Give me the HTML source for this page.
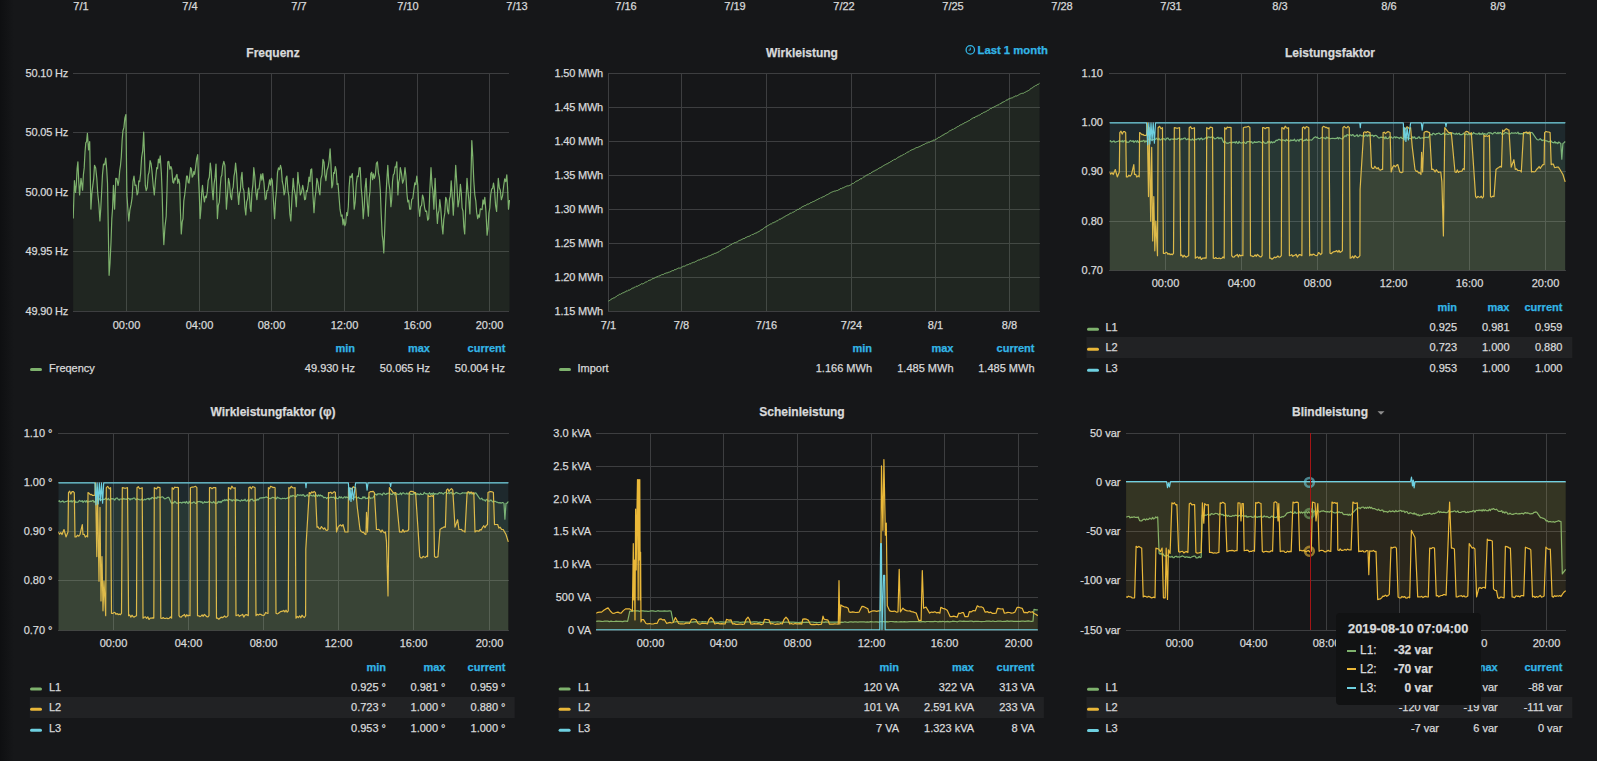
<!DOCTYPE html>
<html><head><meta charset="utf-8"><style>
html,body{margin:0;padding:0;}
body{width:1597px;height:761px;overflow:hidden;position:relative;background:#161719;font-family:"Liberation Sans",sans-serif;}
.edge{position:absolute;left:0;top:0;width:14px;height:761px;background:linear-gradient(to right,#0e0f11,#161719);}
.t{position:absolute;white-space:nowrap;-webkit-text-stroke:0.25px currentColor;}
svg{position:absolute;left:0;top:0;}
</style></head><body>
<div class="edge"></div>
<svg width="1597" height="761" viewBox="0 0 1597 761">
<rect x="1086.5" y="697" width="485.8" height="21" fill="#212224"/>
<rect x="558.6" y="697" width="485.3" height="21" fill="#212224"/>
<rect x="29.8" y="697" width="484.9" height="21" fill="#212224"/>
<rect x="1086.5" y="337" width="485.8" height="21" fill="#212224"/>
<rect x="73" y="73" width="436" height="1" fill="#3d3e40"/>
<rect x="73" y="132" width="436" height="1" fill="#3d3e40"/>
<rect x="73" y="192" width="436" height="1" fill="#3d3e40"/>
<rect x="73" y="251" width="436" height="1" fill="#3d3e40"/>
<rect x="73" y="311" width="436" height="1" fill="#3d3e40"/>
<rect x="126" y="73" width="1" height="239" fill="#3d3e40"/>
<rect x="199" y="73" width="1" height="239" fill="#3d3e40"/>
<rect x="271" y="73" width="1" height="239" fill="#3d3e40"/>
<rect x="344" y="73" width="1" height="239" fill="#3d3e40"/>
<rect x="417" y="73" width="1" height="239" fill="#3d3e40"/>
<rect x="489" y="73" width="1" height="239" fill="#3d3e40"/>
<rect x="30" y="368" width="12" height="3" rx="1.5" fill="#7eb26d"/>
<clipPath id="c1"><rect x="73" y="60" width="437" height="251"/></clipPath>
<path d="M73.2,218.6 L74.4,180.7 L75.5,192.5 L76.3,185.0 L77.1,168.9 L77.9,161.8 L78.8,182.6 L79.6,194.9 L81.0,178.3 L82.6,190.2 L83.4,174.7 L84.2,167.9 L85.0,152.3 L85.8,142.8 L86.6,141.6 L87.4,133.4 L88.6,150.0 L89.7,141.7 L90.9,209.1 L91.8,194.3 L92.8,185.4 L93.7,178.7 L94.5,165.3 L95.7,168.0 L96.8,178.3 L97.8,194.1 L98.9,204.4 L99.9,220.9 L100.8,208.3 L101.6,192.5 L102.5,174.4 L103.5,164.1 L104.7,164.7 L105.8,158.2 L106.7,169.2 L107.5,183.1 L109.1,275.3 L110.0,263.2 L111.0,242.2 L111.8,218.9 L112.6,207.7 L113.4,185.4 L114.6,209.1 L115.8,178.3 L116.9,178.6 L118.1,185.4 L118.9,180.5 L119.7,170.6 L120.5,165.3 L121.3,156.9 L122.1,140.9 L122.9,131.0 L123.9,127.4 L124.9,117.9 L125.9,114.5 L126.9,194.9 L127.9,209.3 L128.8,220.9 L129.9,209.8 L131.1,204.4 L132.1,197.7 L133.0,181.5 L134.0,176.0 L135.0,185.3 L136.1,185.2 L137.1,194.9 L138.0,192.5 L138.8,180.8 L139.7,181.7 L140.6,173.6 L141.6,157.6 L142.7,150.5 L143.7,132.2 L144.5,154.3 L145.3,185.4 L146.2,190.6 L147.2,187.8 L148.2,175.2 L149.1,172.0 L150.1,160.6 L151.1,163.8 L152.0,171.2 L153.2,185.3 L154.3,194.9 L155.5,179.7 L156.7,167.7 L157.6,168.5 L158.4,159.2 L159.3,162.9 L160.2,155.9 L161.4,173.6 L162.2,194.7 L163.0,225.3 L163.8,244.6 L165.0,226.4 L166.2,216.2 L167.0,190.4 L167.8,161.8 L168.8,161.4 L169.9,169.2 L170.9,166.5 L171.8,169.2 L172.8,182.0 L173.7,183.1 L174.5,178.1 L175.3,179.9 L176.1,176.0 L177.0,174.4 L177.8,183.4 L178.7,179.1 L179.6,183.1 L180.4,210.1 L181.3,233.9 L182.2,221.8 L183.0,218.8 L183.8,200.9 L184.7,194.9 L185.6,187.2 L186.6,176.0 L187.4,176.2 L188.2,182.4 L189.0,183.1 L190.6,167.7 L191.4,168.9 L192.2,177.1 L193.0,176.0 L193.8,171.7 L194.6,174.4 L195.4,168.9 L196.6,159.0 L197.7,154.7 L198.5,178.0 L199.3,193.6 L200.1,218.6 L200.9,209.3 L201.7,193.1 L202.5,185.4 L203.4,195.4 L204.4,202.0 L205.3,196.2 L206.3,197.7 L207.2,192.5 L208.2,180.5 L209.3,177.2 L210.3,163.0 L211.2,171.3 L212.2,189.7 L213.1,199.6 L214.1,183.6 L215.0,177.9 L216.0,164.1 L217.4,218.6 L218.3,205.7 L219.3,202.1 L220.2,187.8 L221.0,177.3 L221.8,175.3 L222.6,166.5 L223.8,161.4 L224.9,165.3 L226.4,209.1 L227.4,195.7 L228.5,178.3 L229.5,183.2 L230.6,196.3 L231.6,199.6 L232.4,189.9 L233.2,187.2 L234.0,176.1 L234.8,172.0 L235.6,163.0 L236.6,173.6 L237.7,192.7 L238.7,204.4 L239.5,193.2 L240.3,190.9 L241.2,177.6 L242.0,172.4 L242.9,187.4 L243.9,190.8 L244.9,207.5 L245.8,215.0 L246.7,201.9 L247.7,198.8 L248.6,187.8 L249.4,193.9 L250.2,207.8 L251.0,211.5 L251.9,193.0 L252.9,184.4 L253.8,167.7 L254.8,176.4 L255.9,192.6 L256.9,199.6 L257.9,189.0 L259.0,189.0 L260.0,180.7 L260.9,174.0 L261.9,180.1 L262.8,173.6 L264.0,183.3 L265.2,199.6 L266.1,198.7 L266.9,190.8 L267.8,190.4 L268.7,185.4 L269.6,179.8 L270.5,185.2 L271.4,178.3 L272.3,180.7 L273.5,201.8 L274.6,218.6 L275.6,199.3 L276.5,191.0 L277.5,172.4 L278.5,167.8 L279.5,169.6 L280.5,165.3 L281.4,169.1 L282.3,181.7 L283.2,185.4 L284.1,194.9 L285.0,191.7 L286.0,178.3 L286.9,176.0 L287.9,190.5 L288.9,196.2 L289.8,213.9 L290.8,220.9 L292.0,197.6 L293.2,178.3 L294.2,189.2 L295.3,195.0 L296.3,206.7 L297.9,172.4 L298.7,182.7 L299.5,185.9 L300.3,194.9 L301.5,192.1 L302.7,185.4 L303.6,190.0 L304.6,199.6 L305.5,199.2 L306.4,190.7 L307.2,191.4 L308.1,185.4 L309.0,177.1 L309.9,181.6 L310.8,169.6 L311.7,168.9 L312.9,194.3 L314.0,212.6 L315.0,198.0 L315.9,191.5 L316.9,178.3 L317.9,182.4 L318.9,190.8 L319.9,194.9 L320.9,178.8 L322.0,174.8 L323.0,159.4 L324.0,162.1 L324.9,175.0 L325.9,180.7 L327.0,170.2 L328.2,166.5 L329.1,160.5 L330.1,148.8 L331.0,164.6 L331.8,187.8 L332.7,184.8 L333.6,172.7 L334.4,173.4 L335.3,166.5 L336.2,170.5 L337.1,184.4 L338.0,183.6 L338.9,194.9 L340.0,209.2 L341.2,216.2 L342.1,215.0 L343.0,224.8 L343.9,219.1 L344.8,225.7 L345.7,223.4 L346.6,212.7 L347.4,215.6 L348.3,206.7 L349.1,187.3 L350.0,176.0 L351.1,177.5 L352.3,173.6 L353.2,187.5 L354.2,209.1 L355.2,202.1 L356.3,183.9 L357.3,176.0 L358.3,176.6 L359.2,167.9 L360.2,167.7 L361.2,187.9 L362.2,198.4 L363.2,218.6 L364.2,206.8 L365.1,188.4 L366.1,178.3 L367.2,201.7 L368.4,216.2 L369.2,197.9 L370.0,191.4 L370.8,173.6 L371.7,172.2 L372.6,179.6 L373.4,173.9 L374.3,178.3 L375.3,175.5 L376.4,163.3 L377.4,161.8 L378.4,172.9 L379.3,177.0 L380.3,190.2 L381.2,214.1 L382.2,235.1 L383.0,240.8 L383.8,252.9 L384.6,232.7 L385.5,206.7 L386.6,183.9 L387.8,165.3 L388.8,182.6 L389.9,190.0 L390.9,206.7 L391.7,199.4 L392.5,181.2 L393.3,174.8 L394.2,173.7 L395.1,166.9 L395.9,167.3 L396.8,161.8 L397.9,195.0 L398.7,182.4 L399.5,178.8 L400.3,167.7 L401.5,173.5 L402.6,183.1 L403.8,179.6 L405.0,167.7 L405.9,175.7 L406.9,193.3 L407.8,202.0 L408.8,200.2 L409.7,209.2 L410.7,209.2 L411.7,199.4 L412.8,198.5 L413.8,190.2 L414.8,182.8 L415.8,184.6 L416.8,176.0 L417.8,185.2 L418.7,207.0 L419.7,216.3 L420.6,206.6 L421.6,205.3 L422.5,195.0 L423.5,198.2 L424.6,207.8 L425.6,211.5 L426.6,211.0 L427.7,220.2 L428.7,218.6 L429.9,189.1 L431.0,167.7 L432.0,185.1 L432.9,191.0 L433.9,209.2 L435.1,178.4 L436.2,203.1 L437.4,223.4 L438.2,213.6 L439.0,210.4 L439.8,199.7 L440.8,208.9 L441.9,224.6 L442.9,234.0 L443.8,219.1 L444.8,212.9 L445.7,197.3 L446.7,199.9 L447.6,210.7 L448.6,213.9 L449.5,198.9 L450.3,196.3 L451.2,180.8 L452.2,195.2 L453.3,215.1 L454.5,191.8 L455.7,165.4 L456.9,184.7 L458.0,206.8 L459.2,199.6 L460.4,184.3 L461.3,192.8 L462.1,207.8 L463.0,211.0 L463.8,226.4 L464.7,234.0 L465.9,202.4 L467.0,178.4 L468.0,191.6 L468.9,200.3 L469.9,213.9 L470.9,180.0 L471.8,140.5 L472.8,157.2 L473.8,180.8 L474.8,195.0 L475.8,200.8 L476.7,212.5 L477.7,218.6 L478.6,214.8 L479.4,217.2 L480.3,208.8 L481.2,209.2 L482.1,209.6 L483.0,199.8 L483.9,204.2 L484.8,197.3 L486.0,211.9 L487.1,235.2 L488.0,228.7 L488.9,213.1 L489.8,207.9 L490.7,195.0 L491.6,189.1 L492.6,188.5 L493.5,183.1 L494.5,189.7 L495.6,205.6 L496.6,211.5 L497.5,193.0 L498.3,178.4 L499.3,187.7 L500.3,190.2 L501.3,199.7 L502.5,196.1 L503.7,185.5 L504.7,178.9 L505.8,181.7 L506.8,174.8 L507.6,188.3 L508.5,209.2 L509.5,200.0 L509.5,311.0 L73.2,311.0 Z" fill="#7eb26d" fill-opacity="0.1" clip-path="url(#c1)"/>
<path d="M73.2,218.6 L74.4,180.7 L75.5,192.5 L76.3,185.0 L77.1,168.9 L77.9,161.8 L78.8,182.6 L79.6,194.9 L81.0,178.3 L82.6,190.2 L83.4,174.7 L84.2,167.9 L85.0,152.3 L85.8,142.8 L86.6,141.6 L87.4,133.4 L88.6,150.0 L89.7,141.7 L90.9,209.1 L91.8,194.3 L92.8,185.4 L93.7,178.7 L94.5,165.3 L95.7,168.0 L96.8,178.3 L97.8,194.1 L98.9,204.4 L99.9,220.9 L100.8,208.3 L101.6,192.5 L102.5,174.4 L103.5,164.1 L104.7,164.7 L105.8,158.2 L106.7,169.2 L107.5,183.1 L109.1,275.3 L110.0,263.2 L111.0,242.2 L111.8,218.9 L112.6,207.7 L113.4,185.4 L114.6,209.1 L115.8,178.3 L116.9,178.6 L118.1,185.4 L118.9,180.5 L119.7,170.6 L120.5,165.3 L121.3,156.9 L122.1,140.9 L122.9,131.0 L123.9,127.4 L124.9,117.9 L125.9,114.5 L126.9,194.9 L127.9,209.3 L128.8,220.9 L129.9,209.8 L131.1,204.4 L132.1,197.7 L133.0,181.5 L134.0,176.0 L135.0,185.3 L136.1,185.2 L137.1,194.9 L138.0,192.5 L138.8,180.8 L139.7,181.7 L140.6,173.6 L141.6,157.6 L142.7,150.5 L143.7,132.2 L144.5,154.3 L145.3,185.4 L146.2,190.6 L147.2,187.8 L148.2,175.2 L149.1,172.0 L150.1,160.6 L151.1,163.8 L152.0,171.2 L153.2,185.3 L154.3,194.9 L155.5,179.7 L156.7,167.7 L157.6,168.5 L158.4,159.2 L159.3,162.9 L160.2,155.9 L161.4,173.6 L162.2,194.7 L163.0,225.3 L163.8,244.6 L165.0,226.4 L166.2,216.2 L167.0,190.4 L167.8,161.8 L168.8,161.4 L169.9,169.2 L170.9,166.5 L171.8,169.2 L172.8,182.0 L173.7,183.1 L174.5,178.1 L175.3,179.9 L176.1,176.0 L177.0,174.4 L177.8,183.4 L178.7,179.1 L179.6,183.1 L180.4,210.1 L181.3,233.9 L182.2,221.8 L183.0,218.8 L183.8,200.9 L184.7,194.9 L185.6,187.2 L186.6,176.0 L187.4,176.2 L188.2,182.4 L189.0,183.1 L190.6,167.7 L191.4,168.9 L192.2,177.1 L193.0,176.0 L193.8,171.7 L194.6,174.4 L195.4,168.9 L196.6,159.0 L197.7,154.7 L198.5,178.0 L199.3,193.6 L200.1,218.6 L200.9,209.3 L201.7,193.1 L202.5,185.4 L203.4,195.4 L204.4,202.0 L205.3,196.2 L206.3,197.7 L207.2,192.5 L208.2,180.5 L209.3,177.2 L210.3,163.0 L211.2,171.3 L212.2,189.7 L213.1,199.6 L214.1,183.6 L215.0,177.9 L216.0,164.1 L217.4,218.6 L218.3,205.7 L219.3,202.1 L220.2,187.8 L221.0,177.3 L221.8,175.3 L222.6,166.5 L223.8,161.4 L224.9,165.3 L226.4,209.1 L227.4,195.7 L228.5,178.3 L229.5,183.2 L230.6,196.3 L231.6,199.6 L232.4,189.9 L233.2,187.2 L234.0,176.1 L234.8,172.0 L235.6,163.0 L236.6,173.6 L237.7,192.7 L238.7,204.4 L239.5,193.2 L240.3,190.9 L241.2,177.6 L242.0,172.4 L242.9,187.4 L243.9,190.8 L244.9,207.5 L245.8,215.0 L246.7,201.9 L247.7,198.8 L248.6,187.8 L249.4,193.9 L250.2,207.8 L251.0,211.5 L251.9,193.0 L252.9,184.4 L253.8,167.7 L254.8,176.4 L255.9,192.6 L256.9,199.6 L257.9,189.0 L259.0,189.0 L260.0,180.7 L260.9,174.0 L261.9,180.1 L262.8,173.6 L264.0,183.3 L265.2,199.6 L266.1,198.7 L266.9,190.8 L267.8,190.4 L268.7,185.4 L269.6,179.8 L270.5,185.2 L271.4,178.3 L272.3,180.7 L273.5,201.8 L274.6,218.6 L275.6,199.3 L276.5,191.0 L277.5,172.4 L278.5,167.8 L279.5,169.6 L280.5,165.3 L281.4,169.1 L282.3,181.7 L283.2,185.4 L284.1,194.9 L285.0,191.7 L286.0,178.3 L286.9,176.0 L287.9,190.5 L288.9,196.2 L289.8,213.9 L290.8,220.9 L292.0,197.6 L293.2,178.3 L294.2,189.2 L295.3,195.0 L296.3,206.7 L297.9,172.4 L298.7,182.7 L299.5,185.9 L300.3,194.9 L301.5,192.1 L302.7,185.4 L303.6,190.0 L304.6,199.6 L305.5,199.2 L306.4,190.7 L307.2,191.4 L308.1,185.4 L309.0,177.1 L309.9,181.6 L310.8,169.6 L311.7,168.9 L312.9,194.3 L314.0,212.6 L315.0,198.0 L315.9,191.5 L316.9,178.3 L317.9,182.4 L318.9,190.8 L319.9,194.9 L320.9,178.8 L322.0,174.8 L323.0,159.4 L324.0,162.1 L324.9,175.0 L325.9,180.7 L327.0,170.2 L328.2,166.5 L329.1,160.5 L330.1,148.8 L331.0,164.6 L331.8,187.8 L332.7,184.8 L333.6,172.7 L334.4,173.4 L335.3,166.5 L336.2,170.5 L337.1,184.4 L338.0,183.6 L338.9,194.9 L340.0,209.2 L341.2,216.2 L342.1,215.0 L343.0,224.8 L343.9,219.1 L344.8,225.7 L345.7,223.4 L346.6,212.7 L347.4,215.6 L348.3,206.7 L349.1,187.3 L350.0,176.0 L351.1,177.5 L352.3,173.6 L353.2,187.5 L354.2,209.1 L355.2,202.1 L356.3,183.9 L357.3,176.0 L358.3,176.6 L359.2,167.9 L360.2,167.7 L361.2,187.9 L362.2,198.4 L363.2,218.6 L364.2,206.8 L365.1,188.4 L366.1,178.3 L367.2,201.7 L368.4,216.2 L369.2,197.9 L370.0,191.4 L370.8,173.6 L371.7,172.2 L372.6,179.6 L373.4,173.9 L374.3,178.3 L375.3,175.5 L376.4,163.3 L377.4,161.8 L378.4,172.9 L379.3,177.0 L380.3,190.2 L381.2,214.1 L382.2,235.1 L383.0,240.8 L383.8,252.9 L384.6,232.7 L385.5,206.7 L386.6,183.9 L387.8,165.3 L388.8,182.6 L389.9,190.0 L390.9,206.7 L391.7,199.4 L392.5,181.2 L393.3,174.8 L394.2,173.7 L395.1,166.9 L395.9,167.3 L396.8,161.8 L397.9,195.0 L398.7,182.4 L399.5,178.8 L400.3,167.7 L401.5,173.5 L402.6,183.1 L403.8,179.6 L405.0,167.7 L405.9,175.7 L406.9,193.3 L407.8,202.0 L408.8,200.2 L409.7,209.2 L410.7,209.2 L411.7,199.4 L412.8,198.5 L413.8,190.2 L414.8,182.8 L415.8,184.6 L416.8,176.0 L417.8,185.2 L418.7,207.0 L419.7,216.3 L420.6,206.6 L421.6,205.3 L422.5,195.0 L423.5,198.2 L424.6,207.8 L425.6,211.5 L426.6,211.0 L427.7,220.2 L428.7,218.6 L429.9,189.1 L431.0,167.7 L432.0,185.1 L432.9,191.0 L433.9,209.2 L435.1,178.4 L436.2,203.1 L437.4,223.4 L438.2,213.6 L439.0,210.4 L439.8,199.7 L440.8,208.9 L441.9,224.6 L442.9,234.0 L443.8,219.1 L444.8,212.9 L445.7,197.3 L446.7,199.9 L447.6,210.7 L448.6,213.9 L449.5,198.9 L450.3,196.3 L451.2,180.8 L452.2,195.2 L453.3,215.1 L454.5,191.8 L455.7,165.4 L456.9,184.7 L458.0,206.8 L459.2,199.6 L460.4,184.3 L461.3,192.8 L462.1,207.8 L463.0,211.0 L463.8,226.4 L464.7,234.0 L465.9,202.4 L467.0,178.4 L468.0,191.6 L468.9,200.3 L469.9,213.9 L470.9,180.0 L471.8,140.5 L472.8,157.2 L473.8,180.8 L474.8,195.0 L475.8,200.8 L476.7,212.5 L477.7,218.6 L478.6,214.8 L479.4,217.2 L480.3,208.8 L481.2,209.2 L482.1,209.6 L483.0,199.8 L483.9,204.2 L484.8,197.3 L486.0,211.9 L487.1,235.2 L488.0,228.7 L488.9,213.1 L489.8,207.9 L490.7,195.0 L491.6,189.1 L492.6,188.5 L493.5,183.1 L494.5,189.7 L495.6,205.6 L496.6,211.5 L497.5,193.0 L498.3,178.4 L499.3,187.7 L500.3,190.2 L501.3,199.7 L502.5,196.1 L503.7,185.5 L504.7,178.9 L505.8,181.7 L506.8,174.8 L507.6,188.3 L508.5,209.2 L509.5,200.0" fill="none" stroke="#7eb26d" stroke-width="1.2" stroke-linejoin="round" clip-path="url(#c1)"/>
<circle cx="970.3" cy="49.9" r="4.2" fill="none" stroke="#33b5e5" stroke-width="1.3"/>
<path d="M970.3,47.6 V50.1 H968.6" fill="none" stroke="#33b5e5" stroke-width="1"/>
<rect x="608" y="73" width="432" height="1" fill="#3d3e40"/>
<rect x="608" y="107" width="432" height="1" fill="#3d3e40"/>
<rect x="608" y="141" width="432" height="1" fill="#3d3e40"/>
<rect x="608" y="175" width="432" height="1" fill="#3d3e40"/>
<rect x="608" y="209" width="432" height="1" fill="#3d3e40"/>
<rect x="608" y="243" width="432" height="1" fill="#3d3e40"/>
<rect x="608" y="277" width="432" height="1" fill="#3d3e40"/>
<rect x="608" y="311" width="432" height="1" fill="#3d3e40"/>
<rect x="608" y="73" width="1" height="239" fill="#3d3e40"/>
<rect x="681" y="73" width="1" height="239" fill="#3d3e40"/>
<rect x="766" y="73" width="1" height="239" fill="#3d3e40"/>
<rect x="851" y="73" width="1" height="239" fill="#3d3e40"/>
<rect x="935" y="73" width="1" height="239" fill="#3d3e40"/>
<rect x="1009" y="73" width="1" height="239" fill="#3d3e40"/>
<rect x="559" y="368" width="12" height="3" rx="1.5" fill="#7eb26d"/>
<clipPath id="c2"><rect x="608" y="60" width="432" height="251"/></clipPath>
<path d="M608.4,301.1 L609.1,300.7 L609.8,300.4 L610.5,300.0 L611.2,299.2 L611.9,298.7 L612.6,298.5 L613.3,298.0 L614.1,298.0 L614.8,297.5 L615.5,297.0 L616.2,296.5 L616.9,296.2 L617.6,295.4 L618.3,295.2 L619.0,294.8 L619.7,294.2 L620.4,294.4 L621.1,293.5 L621.8,293.7 L622.5,292.8 L623.2,292.9 L624.0,292.3 L624.7,292.1 L625.4,292.0 L626.1,291.1 L626.8,290.8 L627.5,291.1 L628.2,290.4 L628.9,289.8 L629.6,290.1 L630.3,289.7 L631.0,288.8 L631.7,288.7 L632.4,288.2 L633.1,288.0 L633.9,287.8 L634.6,287.2 L635.3,287.2 L636.0,286.4 L636.7,286.2 L637.4,286.3 L638.1,285.7 L638.8,285.4 L639.5,285.1 L640.2,284.7 L640.9,284.3 L641.6,283.7 L642.3,283.9 L643.1,283.7 L643.8,283.4 L644.5,282.8 L645.2,282.3 L645.9,282.0 L646.6,281.9 L647.3,281.5 L648.0,280.8 L648.7,280.5 L649.4,280.3 L650.1,280.1 L650.8,279.9 L651.5,279.4 L652.2,278.7 L653.0,278.9 L653.7,278.3 L654.4,278.1 L655.1,277.5 L655.8,277.3 L656.5,277.0 L657.2,276.7 L657.9,276.6 L658.6,275.9 L659.4,275.9 L660.1,275.4 L660.8,275.4 L661.5,274.7 L662.2,274.6 L662.9,274.4 L663.7,274.3 L664.4,273.6 L665.1,273.6 L665.8,273.1 L666.5,272.9 L667.2,272.8 L668.0,272.8 L668.7,272.2 L669.4,272.3 L670.1,271.4 L670.8,271.7 L671.6,271.0 L672.3,270.6 L673.0,270.7 L673.7,270.6 L674.4,269.6 L675.1,269.6 L675.9,269.6 L676.6,269.0 L677.3,268.7 L678.0,268.3 L678.7,268.0 L679.4,268.1 L680.2,268.1 L680.9,267.8 L681.6,267.2 L682.3,266.9 L683.0,266.3 L683.7,266.2 L684.4,266.2 L685.1,266.0 L685.8,265.5 L686.5,265.0 L687.2,264.9 L688.0,264.6 L688.7,264.4 L689.4,263.8 L690.1,264.0 L690.8,263.7 L691.5,262.9 L692.2,262.7 L692.9,262.8 L693.6,262.1 L694.3,262.3 L695.0,261.7 L695.7,261.5 L696.4,261.2 L697.1,260.6 L697.8,260.3 L698.5,260.0 L699.3,260.0 L700.0,259.7 L700.7,259.1 L701.4,259.3 L702.1,258.7 L702.8,258.3 L703.5,258.1 L704.2,258.2 L704.9,257.6 L705.6,257.4 L706.3,257.3 L707.0,257.0 L707.7,256.6 L708.4,256.1 L709.1,255.9 L709.8,255.8 L710.6,255.4 L711.3,255.0 L712.0,254.5 L712.7,254.3 L713.4,254.2 L714.1,253.8 L714.8,253.1 L715.5,253.3 L716.2,252.9 L716.9,252.8 L717.6,252.3 L718.4,252.0 L719.1,251.6 L719.8,250.9 L720.5,250.7 L721.2,250.0 L721.9,249.5 L722.6,249.2 L723.4,248.8 L724.1,248.8 L724.8,248.3 L725.5,247.8 L726.2,247.4 L727.0,246.7 L727.7,246.6 L728.4,246.3 L729.1,245.7 L729.8,245.2 L730.5,244.9 L731.2,244.5 L732.0,244.3 L732.7,243.5 L733.4,243.4 L734.1,242.8 L734.8,242.6 L735.5,242.6 L736.2,242.3 L736.9,241.9 L737.7,241.7 L738.4,241.0 L739.1,240.4 L739.8,240.4 L740.5,240.1 L741.2,239.6 L741.9,239.6 L742.6,239.0 L743.3,238.6 L744.0,238.4 L744.7,238.5 L745.4,237.5 L746.2,237.4 L746.9,237.0 L747.6,236.6 L748.3,236.5 L749.0,236.0 L749.7,236.1 L750.4,235.5 L751.1,235.3 L751.8,234.6 L752.5,234.5 L753.2,234.3 L753.9,234.1 L754.7,233.4 L755.4,233.2 L756.1,233.1 L756.8,232.8 L757.5,232.0 L758.2,231.9 L759.0,231.4 L759.7,231.1 L760.5,230.3 L761.2,230.0 L762.0,229.5 L762.8,229.2 L763.5,228.4 L764.3,227.9 L765.0,227.2 L765.8,226.8 L766.5,226.6 L767.2,225.9 L767.9,225.6 L768.6,225.2 L769.4,224.7 L770.1,224.2 L770.8,223.9 L771.5,223.8 L772.2,223.2 L772.9,222.6 L773.6,222.8 L774.3,222.0 L775.1,222.1 L775.8,221.5 L776.5,221.0 L777.2,220.9 L777.9,220.6 L778.6,219.8 L779.3,219.3 L780.0,219.2 L780.8,219.0 L781.5,218.4 L782.2,218.2 L782.9,217.6 L783.6,217.2 L784.3,216.9 L785.0,216.3 L785.7,216.0 L786.4,215.6 L787.1,215.2 L787.8,214.9 L788.5,214.8 L789.2,213.9 L789.9,213.6 L790.6,213.2 L791.3,213.4 L792.0,212.7 L792.7,212.0 L793.4,212.1 L794.1,211.8 L794.8,211.4 L795.5,210.7 L796.2,210.5 L796.9,209.9 L797.6,209.4 L798.3,209.5 L799.0,209.1 L799.7,208.3 L800.4,208.4 L801.1,207.4 L801.8,207.2 L802.5,206.6 L803.2,206.3 L803.9,206.2 L804.6,205.6 L805.3,205.6 L806.0,205.0 L806.7,204.6 L807.4,204.2 L808.1,204.0 L808.8,204.0 L809.5,203.5 L810.2,202.8 L811.0,202.8 L811.7,202.4 L812.4,201.9 L813.1,201.7 L813.8,201.4 L814.5,201.1 L815.2,200.6 L815.9,200.3 L816.6,199.9 L817.3,199.6 L818.0,199.1 L818.7,198.8 L819.4,198.5 L820.1,198.3 L820.8,197.6 L821.5,197.7 L822.2,197.1 L822.9,197.0 L823.7,196.5 L824.4,196.3 L825.1,195.8 L825.8,195.3 L826.5,194.9 L827.2,194.7 L827.9,194.4 L828.6,194.1 L829.3,193.3 L830.0,193.2 L830.7,192.6 L831.4,192.3 L832.1,192.0 L832.9,191.7 L833.6,191.4 L834.3,191.2 L835.0,190.9 L835.7,191.0 L836.4,190.6 L837.1,190.6 L837.8,190.3 L838.6,189.8 L839.3,189.7 L840.0,188.7 L840.7,188.6 L841.4,188.8 L842.1,188.1 L842.8,187.7 L843.6,187.7 L844.3,187.2 L845.0,187.0 L845.7,186.5 L846.4,186.2 L847.1,185.8 L847.8,185.9 L848.5,185.8 L849.3,185.5 L850.0,185.1 L850.7,184.9 L851.4,184.3 L852.1,183.8 L852.8,183.3 L853.5,183.4 L854.2,182.7 L854.9,182.4 L855.6,181.5 L856.3,181.2 L857.0,181.0 L857.7,180.7 L858.4,180.4 L859.1,179.9 L859.9,179.2 L860.6,178.8 L861.3,178.8 L862.0,178.4 L862.7,177.7 L863.4,177.1 L864.1,177.0 L864.8,176.5 L865.5,175.9 L866.2,175.4 L866.9,175.1 L867.6,174.8 L868.3,174.5 L869.0,173.7 L869.7,173.6 L870.4,173.5 L871.1,173.0 L871.8,172.2 L872.5,171.9 L873.3,171.3 L874.0,171.4 L874.7,170.9 L875.4,170.2 L876.1,170.0 L876.8,169.7 L877.5,169.3 L878.2,168.7 L878.9,168.3 L879.6,167.9 L880.3,167.9 L881.0,167.1 L881.7,166.8 L882.4,166.4 L883.1,165.8 L883.8,165.5 L884.6,165.0 L885.3,164.7 L886.0,164.3 L886.7,163.9 L887.4,163.9 L888.1,163.1 L888.8,162.7 L889.5,162.5 L890.2,161.9 L890.9,161.6 L891.6,161.3 L892.3,160.5 L893.0,160.5 L893.7,159.7 L894.4,159.4 L895.2,159.4 L895.9,159.1 L896.6,158.5 L897.3,157.8 L898.0,157.6 L898.7,157.0 L899.4,157.0 L900.1,156.2 L900.8,155.8 L901.5,155.7 L902.2,155.3 L902.9,154.9 L903.6,154.4 L904.3,154.3 L905.0,153.6 L905.7,153.5 L906.5,152.7 L907.2,152.4 L907.9,151.9 L908.6,151.8 L909.3,151.4 L910.0,150.6 L910.7,150.4 L911.4,150.0 L912.1,149.8 L912.8,149.4 L913.5,149.2 L914.2,148.8 L914.9,148.6 L915.6,148.0 L916.3,147.7 L917.0,147.2 L917.7,147.5 L918.4,147.1 L919.1,146.5 L919.8,146.6 L920.5,146.3 L921.2,145.4 L921.9,145.6 L922.6,145.0 L923.3,144.6 L924.1,144.3 L924.8,144.1 L925.5,143.5 L926.2,143.2 L926.9,142.9 L927.6,142.8 L928.3,142.3 L929.0,142.0 L929.7,142.2 L930.4,141.6 L931.1,141.3 L931.8,141.1 L932.5,141.0 L933.2,140.2 L933.9,139.9 L934.6,140.1 L935.3,139.5 L936.0,139.4 L936.7,139.0 L937.4,138.3 L938.1,137.8 L938.8,137.2 L939.5,137.3 L940.2,136.8 L941.0,136.3 L941.7,136.0 L942.4,135.2 L943.1,135.0 L943.8,134.9 L944.5,133.9 L945.2,133.8 L945.9,133.1 L946.6,133.2 L947.3,132.8 L948.0,132.2 L948.7,131.7 L949.4,131.0 L950.1,130.9 L950.8,130.4 L951.5,130.0 L952.3,129.4 L953.0,129.6 L953.7,128.9 L954.4,128.5 L955.1,128.3 L955.8,127.9 L956.5,127.2 L957.2,126.8 L957.9,126.4 L958.6,126.3 L959.3,125.6 L960.0,125.6 L960.7,124.6 L961.5,124.7 L962.2,124.1 L962.9,123.8 L963.6,123.7 L964.3,122.8 L965.0,122.5 L965.7,122.4 L966.4,122.0 L967.1,121.5 L967.8,121.3 L968.5,120.8 L969.3,120.6 L970.0,120.0 L970.7,119.4 L971.4,119.0 L972.1,118.5 L972.8,118.1 L973.5,117.7 L974.2,118.0 L974.9,117.0 L975.6,116.9 L976.3,116.2 L977.1,116.4 L977.8,115.8 L978.5,115.1 L979.2,115.2 L979.9,114.8 L980.6,114.5 L981.3,113.6 L982.0,113.4 L982.7,113.2 L983.4,112.5 L984.1,112.3 L984.9,112.0 L985.6,111.7 L986.3,111.4 L987.0,110.9 L987.7,110.2 L988.4,110.2 L989.1,109.6 L989.8,109.0 L990.5,108.5 L991.2,108.6 L991.9,108.0 L992.7,107.4 L993.4,107.3 L994.1,106.9 L994.8,106.4 L995.5,106.2 L996.2,105.8 L996.9,105.4 L997.6,105.1 L998.3,105.0 L999.0,104.6 L999.7,103.8 L1000.4,103.8 L1001.1,103.0 L1001.8,103.1 L1002.5,102.1 L1003.3,101.9 L1004.0,101.9 L1004.7,101.4 L1005.4,101.0 L1006.1,100.3 L1006.8,99.9 L1007.5,100.1 L1008.2,99.1 L1008.9,98.8 L1009.6,98.6 L1010.3,98.3 L1011.0,98.2 L1011.7,97.9 L1012.4,97.8 L1013.1,97.3 L1013.8,96.8 L1014.5,96.8 L1015.2,96.1 L1015.9,95.7 L1016.6,96.0 L1017.3,95.7 L1018.1,95.2 L1018.8,94.8 L1019.5,94.3 L1020.2,94.0 L1020.9,93.6 L1021.6,93.4 L1022.3,93.3 L1023.0,93.3 L1023.7,93.1 L1024.4,92.5 L1025.1,92.3 L1025.8,91.9 L1026.5,91.4 L1027.2,91.2 L1028.0,90.7 L1028.7,90.4 L1029.4,89.9 L1030.1,89.3 L1030.8,88.8 L1031.6,88.0 L1032.3,87.8 L1033.0,87.3 L1033.7,86.7 L1034.5,86.3 L1035.2,86.0 L1035.9,85.3 L1036.6,85.2 L1037.3,84.5 L1038.1,84.5 L1038.8,83.9 L1039.5,83.3 L1039.5,311.0 L608.4,311.0 Z" fill="#7eb26d" fill-opacity="0.1" clip-path="url(#c2)"/>
<path d="M608.4,301.1 L609.1,300.7 L609.8,300.4 L610.5,300.0 L611.2,299.2 L611.9,298.7 L612.6,298.5 L613.3,298.0 L614.1,298.0 L614.8,297.5 L615.5,297.0 L616.2,296.5 L616.9,296.2 L617.6,295.4 L618.3,295.2 L619.0,294.8 L619.7,294.2 L620.4,294.4 L621.1,293.5 L621.8,293.7 L622.5,292.8 L623.2,292.9 L624.0,292.3 L624.7,292.1 L625.4,292.0 L626.1,291.1 L626.8,290.8 L627.5,291.1 L628.2,290.4 L628.9,289.8 L629.6,290.1 L630.3,289.7 L631.0,288.8 L631.7,288.7 L632.4,288.2 L633.1,288.0 L633.9,287.8 L634.6,287.2 L635.3,287.2 L636.0,286.4 L636.7,286.2 L637.4,286.3 L638.1,285.7 L638.8,285.4 L639.5,285.1 L640.2,284.7 L640.9,284.3 L641.6,283.7 L642.3,283.9 L643.1,283.7 L643.8,283.4 L644.5,282.8 L645.2,282.3 L645.9,282.0 L646.6,281.9 L647.3,281.5 L648.0,280.8 L648.7,280.5 L649.4,280.3 L650.1,280.1 L650.8,279.9 L651.5,279.4 L652.2,278.7 L653.0,278.9 L653.7,278.3 L654.4,278.1 L655.1,277.5 L655.8,277.3 L656.5,277.0 L657.2,276.7 L657.9,276.6 L658.6,275.9 L659.4,275.9 L660.1,275.4 L660.8,275.4 L661.5,274.7 L662.2,274.6 L662.9,274.4 L663.7,274.3 L664.4,273.6 L665.1,273.6 L665.8,273.1 L666.5,272.9 L667.2,272.8 L668.0,272.8 L668.7,272.2 L669.4,272.3 L670.1,271.4 L670.8,271.7 L671.6,271.0 L672.3,270.6 L673.0,270.7 L673.7,270.6 L674.4,269.6 L675.1,269.6 L675.9,269.6 L676.6,269.0 L677.3,268.7 L678.0,268.3 L678.7,268.0 L679.4,268.1 L680.2,268.1 L680.9,267.8 L681.6,267.2 L682.3,266.9 L683.0,266.3 L683.7,266.2 L684.4,266.2 L685.1,266.0 L685.8,265.5 L686.5,265.0 L687.2,264.9 L688.0,264.6 L688.7,264.4 L689.4,263.8 L690.1,264.0 L690.8,263.7 L691.5,262.9 L692.2,262.7 L692.9,262.8 L693.6,262.1 L694.3,262.3 L695.0,261.7 L695.7,261.5 L696.4,261.2 L697.1,260.6 L697.8,260.3 L698.5,260.0 L699.3,260.0 L700.0,259.7 L700.7,259.1 L701.4,259.3 L702.1,258.7 L702.8,258.3 L703.5,258.1 L704.2,258.2 L704.9,257.6 L705.6,257.4 L706.3,257.3 L707.0,257.0 L707.7,256.6 L708.4,256.1 L709.1,255.9 L709.8,255.8 L710.6,255.4 L711.3,255.0 L712.0,254.5 L712.7,254.3 L713.4,254.2 L714.1,253.8 L714.8,253.1 L715.5,253.3 L716.2,252.9 L716.9,252.8 L717.6,252.3 L718.4,252.0 L719.1,251.6 L719.8,250.9 L720.5,250.7 L721.2,250.0 L721.9,249.5 L722.6,249.2 L723.4,248.8 L724.1,248.8 L724.8,248.3 L725.5,247.8 L726.2,247.4 L727.0,246.7 L727.7,246.6 L728.4,246.3 L729.1,245.7 L729.8,245.2 L730.5,244.9 L731.2,244.5 L732.0,244.3 L732.7,243.5 L733.4,243.4 L734.1,242.8 L734.8,242.6 L735.5,242.6 L736.2,242.3 L736.9,241.9 L737.7,241.7 L738.4,241.0 L739.1,240.4 L739.8,240.4 L740.5,240.1 L741.2,239.6 L741.9,239.6 L742.6,239.0 L743.3,238.6 L744.0,238.4 L744.7,238.5 L745.4,237.5 L746.2,237.4 L746.9,237.0 L747.6,236.6 L748.3,236.5 L749.0,236.0 L749.7,236.1 L750.4,235.5 L751.1,235.3 L751.8,234.6 L752.5,234.5 L753.2,234.3 L753.9,234.1 L754.7,233.4 L755.4,233.2 L756.1,233.1 L756.8,232.8 L757.5,232.0 L758.2,231.9 L759.0,231.4 L759.7,231.1 L760.5,230.3 L761.2,230.0 L762.0,229.5 L762.8,229.2 L763.5,228.4 L764.3,227.9 L765.0,227.2 L765.8,226.8 L766.5,226.6 L767.2,225.9 L767.9,225.6 L768.6,225.2 L769.4,224.7 L770.1,224.2 L770.8,223.9 L771.5,223.8 L772.2,223.2 L772.9,222.6 L773.6,222.8 L774.3,222.0 L775.1,222.1 L775.8,221.5 L776.5,221.0 L777.2,220.9 L777.9,220.6 L778.6,219.8 L779.3,219.3 L780.0,219.2 L780.8,219.0 L781.5,218.4 L782.2,218.2 L782.9,217.6 L783.6,217.2 L784.3,216.9 L785.0,216.3 L785.7,216.0 L786.4,215.6 L787.1,215.2 L787.8,214.9 L788.5,214.8 L789.2,213.9 L789.9,213.6 L790.6,213.2 L791.3,213.4 L792.0,212.7 L792.7,212.0 L793.4,212.1 L794.1,211.8 L794.8,211.4 L795.5,210.7 L796.2,210.5 L796.9,209.9 L797.6,209.4 L798.3,209.5 L799.0,209.1 L799.7,208.3 L800.4,208.4 L801.1,207.4 L801.8,207.2 L802.5,206.6 L803.2,206.3 L803.9,206.2 L804.6,205.6 L805.3,205.6 L806.0,205.0 L806.7,204.6 L807.4,204.2 L808.1,204.0 L808.8,204.0 L809.5,203.5 L810.2,202.8 L811.0,202.8 L811.7,202.4 L812.4,201.9 L813.1,201.7 L813.8,201.4 L814.5,201.1 L815.2,200.6 L815.9,200.3 L816.6,199.9 L817.3,199.6 L818.0,199.1 L818.7,198.8 L819.4,198.5 L820.1,198.3 L820.8,197.6 L821.5,197.7 L822.2,197.1 L822.9,197.0 L823.7,196.5 L824.4,196.3 L825.1,195.8 L825.8,195.3 L826.5,194.9 L827.2,194.7 L827.9,194.4 L828.6,194.1 L829.3,193.3 L830.0,193.2 L830.7,192.6 L831.4,192.3 L832.1,192.0 L832.9,191.7 L833.6,191.4 L834.3,191.2 L835.0,190.9 L835.7,191.0 L836.4,190.6 L837.1,190.6 L837.8,190.3 L838.6,189.8 L839.3,189.7 L840.0,188.7 L840.7,188.6 L841.4,188.8 L842.1,188.1 L842.8,187.7 L843.6,187.7 L844.3,187.2 L845.0,187.0 L845.7,186.5 L846.4,186.2 L847.1,185.8 L847.8,185.9 L848.5,185.8 L849.3,185.5 L850.0,185.1 L850.7,184.9 L851.4,184.3 L852.1,183.8 L852.8,183.3 L853.5,183.4 L854.2,182.7 L854.9,182.4 L855.6,181.5 L856.3,181.2 L857.0,181.0 L857.7,180.7 L858.4,180.4 L859.1,179.9 L859.9,179.2 L860.6,178.8 L861.3,178.8 L862.0,178.4 L862.7,177.7 L863.4,177.1 L864.1,177.0 L864.8,176.5 L865.5,175.9 L866.2,175.4 L866.9,175.1 L867.6,174.8 L868.3,174.5 L869.0,173.7 L869.7,173.6 L870.4,173.5 L871.1,173.0 L871.8,172.2 L872.5,171.9 L873.3,171.3 L874.0,171.4 L874.7,170.9 L875.4,170.2 L876.1,170.0 L876.8,169.7 L877.5,169.3 L878.2,168.7 L878.9,168.3 L879.6,167.9 L880.3,167.9 L881.0,167.1 L881.7,166.8 L882.4,166.4 L883.1,165.8 L883.8,165.5 L884.6,165.0 L885.3,164.7 L886.0,164.3 L886.7,163.9 L887.4,163.9 L888.1,163.1 L888.8,162.7 L889.5,162.5 L890.2,161.9 L890.9,161.6 L891.6,161.3 L892.3,160.5 L893.0,160.5 L893.7,159.7 L894.4,159.4 L895.2,159.4 L895.9,159.1 L896.6,158.5 L897.3,157.8 L898.0,157.6 L898.7,157.0 L899.4,157.0 L900.1,156.2 L900.8,155.8 L901.5,155.7 L902.2,155.3 L902.9,154.9 L903.6,154.4 L904.3,154.3 L905.0,153.6 L905.7,153.5 L906.5,152.7 L907.2,152.4 L907.9,151.9 L908.6,151.8 L909.3,151.4 L910.0,150.6 L910.7,150.4 L911.4,150.0 L912.1,149.8 L912.8,149.4 L913.5,149.2 L914.2,148.8 L914.9,148.6 L915.6,148.0 L916.3,147.7 L917.0,147.2 L917.7,147.5 L918.4,147.1 L919.1,146.5 L919.8,146.6 L920.5,146.3 L921.2,145.4 L921.9,145.6 L922.6,145.0 L923.3,144.6 L924.1,144.3 L924.8,144.1 L925.5,143.5 L926.2,143.2 L926.9,142.9 L927.6,142.8 L928.3,142.3 L929.0,142.0 L929.7,142.2 L930.4,141.6 L931.1,141.3 L931.8,141.1 L932.5,141.0 L933.2,140.2 L933.9,139.9 L934.6,140.1 L935.3,139.5 L936.0,139.4 L936.7,139.0 L937.4,138.3 L938.1,137.8 L938.8,137.2 L939.5,137.3 L940.2,136.8 L941.0,136.3 L941.7,136.0 L942.4,135.2 L943.1,135.0 L943.8,134.9 L944.5,133.9 L945.2,133.8 L945.9,133.1 L946.6,133.2 L947.3,132.8 L948.0,132.2 L948.7,131.7 L949.4,131.0 L950.1,130.9 L950.8,130.4 L951.5,130.0 L952.3,129.4 L953.0,129.6 L953.7,128.9 L954.4,128.5 L955.1,128.3 L955.8,127.9 L956.5,127.2 L957.2,126.8 L957.9,126.4 L958.6,126.3 L959.3,125.6 L960.0,125.6 L960.7,124.6 L961.5,124.7 L962.2,124.1 L962.9,123.8 L963.6,123.7 L964.3,122.8 L965.0,122.5 L965.7,122.4 L966.4,122.0 L967.1,121.5 L967.8,121.3 L968.5,120.8 L969.3,120.6 L970.0,120.0 L970.7,119.4 L971.4,119.0 L972.1,118.5 L972.8,118.1 L973.5,117.7 L974.2,118.0 L974.9,117.0 L975.6,116.9 L976.3,116.2 L977.1,116.4 L977.8,115.8 L978.5,115.1 L979.2,115.2 L979.9,114.8 L980.6,114.5 L981.3,113.6 L982.0,113.4 L982.7,113.2 L983.4,112.5 L984.1,112.3 L984.9,112.0 L985.6,111.7 L986.3,111.4 L987.0,110.9 L987.7,110.2 L988.4,110.2 L989.1,109.6 L989.8,109.0 L990.5,108.5 L991.2,108.6 L991.9,108.0 L992.7,107.4 L993.4,107.3 L994.1,106.9 L994.8,106.4 L995.5,106.2 L996.2,105.8 L996.9,105.4 L997.6,105.1 L998.3,105.0 L999.0,104.6 L999.7,103.8 L1000.4,103.8 L1001.1,103.0 L1001.8,103.1 L1002.5,102.1 L1003.3,101.9 L1004.0,101.9 L1004.7,101.4 L1005.4,101.0 L1006.1,100.3 L1006.8,99.9 L1007.5,100.1 L1008.2,99.1 L1008.9,98.8 L1009.6,98.6 L1010.3,98.3 L1011.0,98.2 L1011.7,97.9 L1012.4,97.8 L1013.1,97.3 L1013.8,96.8 L1014.5,96.8 L1015.2,96.1 L1015.9,95.7 L1016.6,96.0 L1017.3,95.7 L1018.1,95.2 L1018.8,94.8 L1019.5,94.3 L1020.2,94.0 L1020.9,93.6 L1021.6,93.4 L1022.3,93.3 L1023.0,93.3 L1023.7,93.1 L1024.4,92.5 L1025.1,92.3 L1025.8,91.9 L1026.5,91.4 L1027.2,91.2 L1028.0,90.7 L1028.7,90.4 L1029.4,89.9 L1030.1,89.3 L1030.8,88.8 L1031.6,88.0 L1032.3,87.8 L1033.0,87.3 L1033.7,86.7 L1034.5,86.3 L1035.2,86.0 L1035.9,85.3 L1036.6,85.2 L1037.3,84.5 L1038.1,84.5 L1038.8,83.9 L1039.5,83.3" fill="none" stroke="#7eb26d" stroke-width="1.0" stroke-linejoin="round" clip-path="url(#c2)"/>
<rect x="1109" y="73" width="457" height="1" fill="#3d3e40"/>
<rect x="1109" y="122" width="457" height="1" fill="#3d3e40"/>
<rect x="1109" y="171" width="457" height="1" fill="#3d3e40"/>
<rect x="1109" y="221" width="457" height="1" fill="#3d3e40"/>
<rect x="1109" y="270" width="457" height="1" fill="#3d3e40"/>
<rect x="1165" y="73" width="1" height="198" fill="#3d3e40"/>
<rect x="1241" y="73" width="1" height="198" fill="#3d3e40"/>
<rect x="1317" y="73" width="1" height="198" fill="#3d3e40"/>
<rect x="1393" y="73" width="1" height="198" fill="#3d3e40"/>
<rect x="1469" y="73" width="1" height="198" fill="#3d3e40"/>
<rect x="1545" y="73" width="1" height="198" fill="#3d3e40"/>
<clipPath id="c3"><rect x="1109.5" y="68.5" width="456.70000000000005" height="202.0"/></clipPath>
<path d="M1109.5,141.5 L1110.4,140.7 L1111.3,141.9 L1112.2,141.8 L1113.1,141.4 L1114.0,140.8 L1114.9,142.1 L1115.8,142.1 L1116.8,141.5 L1117.7,141.5 L1118.6,140.9 L1119.5,140.4 L1120.4,141.2 L1121.3,141.7 L1122.2,140.5 L1123.1,142.1 L1124.0,140.9 L1124.9,140.9 L1125.8,140.5 L1126.7,142.6 L1127.6,142.0 L1128.5,142.3 L1129.4,141.7 L1130.3,140.4 L1131.3,141.1 L1132.2,141.5 L1133.1,140.6 L1134.0,142.5 L1134.9,141.2 L1135.8,140.7 L1136.7,142.2 L1137.6,140.6 L1138.5,142.4 L1139.4,141.4 L1140.3,141.6 L1141.2,141.1 L1142.1,141.4 L1143.0,140.8 L1143.9,140.4 L1144.9,142.3 L1145.8,140.9 L1146.7,141.5 L1148.2,139.0 L1149.1,139.6 L1150.0,138.4 L1150.9,140.0 L1151.8,139.9 L1152.7,139.6 L1153.6,139.6 L1154.5,139.2 L1155.4,139.5 L1156.3,138.2 L1157.2,139.0 L1158.1,139.7 L1159.0,138.3 L1159.9,139.9 L1160.8,139.9 L1161.8,138.8 L1162.7,138.7 L1163.6,138.9 L1164.5,138.8 L1165.4,140.1 L1166.3,138.8 L1167.2,138.0 L1168.1,138.1 L1169.0,139.5 L1169.9,140.1 L1170.8,139.0 L1171.7,139.0 L1172.6,139.1 L1173.5,139.5 L1174.4,138.4 L1175.3,139.2 L1176.2,139.1 L1177.1,139.3 L1178.0,138.3 L1178.9,138.3 L1179.8,138.7 L1180.8,139.9 L1181.7,138.7 L1182.6,139.2 L1183.5,138.6 L1184.4,138.1 L1185.3,138.0 L1186.2,139.7 L1187.1,139.6 L1188.0,138.7 L1188.9,139.4 L1189.8,139.4 L1190.7,139.9 L1191.6,140.0 L1192.5,138.8 L1193.4,140.1 L1194.3,140.0 L1195.2,139.2 L1196.1,139.8 L1197.0,139.0 L1197.9,138.7 L1198.8,138.4 L1199.8,139.8 L1200.7,138.3 L1201.6,138.1 L1202.5,139.7 L1203.4,139.0 L1204.4,139.0 L1205.4,137.8 L1206.3,137.7 L1207.2,138.5 L1208.1,136.8 L1209.0,137.2 L1209.9,137.3 L1210.8,137.6 L1211.7,137.0 L1212.6,136.8 L1213.5,137.4 L1214.4,138.6 L1215.3,138.8 L1216.2,138.3 L1217.1,137.7 L1218.0,137.2 L1218.9,138.8 L1219.8,137.8 L1220.7,138.3 L1221.6,137.8 L1223.6,142.5 L1224.5,141.4 L1225.4,141.8 L1226.3,143.2 L1227.2,143.1 L1228.1,143.3 L1229.1,142.7 L1230.0,142.3 L1230.9,142.6 L1231.8,143.2 L1232.7,142.0 L1233.6,142.5 L1234.5,142.0 L1235.4,143.0 L1236.3,141.4 L1237.2,142.9 L1238.1,143.4 L1239.0,141.4 L1239.9,142.7 L1240.8,142.8 L1241.7,143.2 L1242.6,142.6 L1243.5,141.9 L1244.4,142.2 L1245.3,143.5 L1246.2,143.3 L1247.1,141.6 L1248.0,141.6 L1248.9,141.6 L1249.8,141.4 L1250.8,142.3 L1251.7,141.7 L1252.6,143.3 L1253.5,142.8 L1254.4,141.6 L1255.3,142.5 L1256.2,142.1 L1257.1,142.4 L1258.0,141.8 L1258.9,141.7 L1259.8,141.8 L1260.7,142.2 L1261.6,142.9 L1262.5,142.6 L1263.4,141.5 L1264.3,142.9 L1265.2,143.3 L1266.1,143.1 L1267.0,143.1 L1267.9,141.4 L1268.8,142.4 L1269.7,141.5 L1270.6,143.0 L1271.5,141.7 L1272.5,142.9 L1273.4,141.9 L1274.3,142.5 L1276.3,140.2 L1277.2,140.6 L1278.1,139.8 L1279.0,139.2 L1279.9,139.9 L1280.8,139.8 L1281.7,141.1 L1282.6,139.7 L1283.6,140.2 L1284.5,140.3 L1285.4,141.2 L1286.3,139.3 L1287.2,140.4 L1288.1,140.2 L1289.0,140.7 L1289.9,141.2 L1290.8,139.8 L1291.7,140.6 L1292.6,140.2 L1293.6,140.3 L1294.5,139.2 L1295.4,140.9 L1296.3,141.2 L1297.2,139.9 L1298.1,139.8 L1299.0,141.3 L1299.9,139.3 L1300.8,139.3 L1301.7,139.2 L1302.6,140.9 L1303.5,140.8 L1304.5,140.1 L1305.4,140.5 L1306.3,139.1 L1307.2,140.5 L1308.1,140.1 L1309.0,140.2 L1309.9,139.9 L1310.8,140.0 L1311.7,140.2 L1313.8,137.8 L1314.7,137.2 L1315.6,136.8 L1316.5,137.6 L1317.4,137.2 L1318.3,138.3 L1319.3,138.5 L1320.2,138.3 L1321.1,137.7 L1322.0,137.3 L1322.9,137.6 L1323.8,137.8 L1324.8,138.2 L1325.7,138.9 L1326.6,137.0 L1327.5,137.8 L1328.4,137.9 L1329.4,138.4 L1330.3,138.8 L1331.2,138.5 L1332.1,138.2 L1333.0,138.5 L1333.9,138.3 L1334.9,138.7 L1335.8,138.4 L1336.7,138.4 L1337.6,137.4 L1338.5,138.9 L1339.4,137.7 L1340.4,138.2 L1341.3,138.7 L1342.2,139.0 L1343.1,138.0 L1345.1,135.6 L1346.1,136.6 L1347.0,134.5 L1347.9,135.1 L1348.8,135.1 L1349.8,135.3 L1350.7,134.8 L1351.6,135.7 L1352.5,134.6 L1353.5,135.1 L1354.4,136.5 L1355.3,136.1 L1356.2,135.5 L1357.1,134.7 L1358.1,136.6 L1359.0,136.0 L1359.9,134.9 L1360.8,135.2 L1361.8,135.9 L1362.7,136.0 L1363.6,135.0 L1364.5,136.5 L1365.5,135.2 L1366.4,135.0 L1367.3,136.3 L1368.2,134.8 L1369.2,136.0 L1370.1,134.9 L1371.0,135.8 L1371.9,135.1 L1372.8,135.3 L1373.8,136.5 L1374.7,135.5 L1375.6,135.4 L1376.5,135.6 L1378.6,137.8 L1379.5,138.0 L1380.4,137.3 L1381.3,137.1 L1382.2,137.5 L1383.1,137.3 L1384.0,137.1 L1384.9,138.8 L1385.8,136.7 L1386.7,138.5 L1387.6,138.7 L1388.5,138.2 L1389.4,136.7 L1390.3,137.8 L1391.2,136.8 L1392.1,138.0 L1393.0,138.2 L1393.9,137.2 L1394.8,136.7 L1395.7,137.9 L1396.6,136.9 L1397.5,137.4 L1398.4,137.7 L1399.3,138.6 L1400.2,137.5 L1401.1,137.0 L1402.0,138.4 L1402.9,138.5 L1403.8,137.8 L1404.7,136.8 L1405.6,137.1 L1406.5,137.6 L1407.4,137.9 L1408.3,137.2 L1409.2,138.4 L1410.1,138.5 L1411.0,138.7 L1411.9,138.6 L1412.8,136.7 L1413.7,138.0 L1414.6,136.8 L1415.6,138.7 L1416.5,138.3 L1417.4,138.3 L1418.3,137.1 L1419.2,136.8 L1420.1,138.5 L1421.0,138.0 L1421.9,138.0 L1422.8,137.7 L1423.7,138.4 L1424.6,137.4 L1425.5,137.3 L1426.4,137.4 L1427.3,137.3 L1428.2,137.8 L1430.2,134.3 L1431.1,134.6 L1432.0,135.1 L1432.9,133.3 L1433.8,133.3 L1434.7,134.3 L1435.6,134.6 L1436.5,133.5 L1437.4,133.7 L1438.3,133.2 L1439.2,133.1 L1440.1,134.1 L1441.0,134.5 L1441.9,134.5 L1442.8,133.3 L1443.7,133.2 L1444.6,135.0 L1445.6,134.1 L1446.5,133.8 L1447.4,134.4 L1448.3,134.5 L1449.2,134.0 L1450.1,133.0 L1451.0,134.7 L1451.9,133.3 L1452.8,132.9 L1453.7,133.6 L1454.6,134.0 L1455.5,134.2 L1456.4,133.1 L1457.3,134.3 L1458.2,133.8 L1459.1,133.1 L1460.0,134.6 L1460.9,134.5 L1461.8,134.7 L1462.7,134.1 L1463.6,133.1 L1464.5,134.3 L1465.4,134.6 L1466.3,133.8 L1467.2,134.6 L1468.1,134.7 L1469.0,133.4 L1469.9,134.6 L1470.8,134.6 L1471.7,133.6 L1472.6,134.2 L1473.5,132.5 L1474.4,133.2 L1475.4,133.8 L1476.3,133.8 L1477.2,134.1 L1478.1,133.9 L1479.0,132.8 L1479.9,134.5 L1480.8,133.6 L1481.7,134.3 L1482.6,132.9 L1483.5,134.6 L1484.4,133.6 L1485.3,134.1 L1486.2,134.0 L1487.1,134.3 L1488.0,133.1 L1489.0,132.5 L1489.9,133.2 L1490.8,132.7 L1491.7,133.5 L1492.6,134.1 L1493.5,133.1 L1494.4,132.6 L1495.3,132.4 L1496.2,133.2 L1497.1,133.6 L1498.0,132.3 L1498.9,133.7 L1499.8,132.7 L1500.7,132.5 L1501.7,134.3 L1502.6,133.4 L1503.5,134.2 L1504.4,133.4 L1505.3,132.5 L1506.2,132.7 L1507.1,133.1 L1508.0,133.6 L1508.9,133.9 L1509.8,133.8 L1510.7,133.6 L1511.6,132.7 L1512.5,133.1 L1513.4,133.0 L1514.3,133.2 L1515.3,132.7 L1516.2,133.3 L1517.1,133.1 L1518.0,132.2 L1518.9,133.9 L1519.8,133.4 L1520.7,133.9 L1521.6,133.7 L1522.5,133.7 L1523.4,134.3 L1524.3,132.9 L1525.2,132.9 L1526.1,132.1 L1527.0,133.5 L1528.0,133.3 L1528.9,133.3 L1529.8,134.2 L1530.7,132.4 L1531.6,132.5 L1532.5,133.1 L1536.5,139.0 L1537.5,139.7 L1538.4,140.0 L1539.3,139.4 L1540.2,138.7 L1541.1,139.5 L1542.1,140.7 L1543.0,140.1 L1543.9,140.2 L1544.8,140.2 L1545.7,140.9 L1546.7,140.9 L1547.6,141.3 L1548.5,141.8 L1549.4,141.7 L1550.3,141.1 L1551.3,141.0 L1552.2,142.3 L1553.1,142.5 L1554.0,142.9 L1554.9,141.5 L1555.9,143.1 L1556.8,142.5 L1557.8,143.6 L1558.8,142.0 L1559.8,142.8 L1560.8,143.4 L1561.8,159.2 L1562.9,143.4 L1564.0,142.7 L1565.2,141.5 L1565.2,270.5 L1109.5,270.5 Z" fill="#7eb26d" fill-opacity="0.1" clip-path="url(#c3)"/>
<path d="M1109.5,141.5 L1110.4,140.7 L1111.3,141.9 L1112.2,141.8 L1113.1,141.4 L1114.0,140.8 L1114.9,142.1 L1115.8,142.1 L1116.8,141.5 L1117.7,141.5 L1118.6,140.9 L1119.5,140.4 L1120.4,141.2 L1121.3,141.7 L1122.2,140.5 L1123.1,142.1 L1124.0,140.9 L1124.9,140.9 L1125.8,140.5 L1126.7,142.6 L1127.6,142.0 L1128.5,142.3 L1129.4,141.7 L1130.3,140.4 L1131.3,141.1 L1132.2,141.5 L1133.1,140.6 L1134.0,142.5 L1134.9,141.2 L1135.8,140.7 L1136.7,142.2 L1137.6,140.6 L1138.5,142.4 L1139.4,141.4 L1140.3,141.6 L1141.2,141.1 L1142.1,141.4 L1143.0,140.8 L1143.9,140.4 L1144.9,142.3 L1145.8,140.9 L1146.7,141.5 L1148.2,139.0 L1149.1,139.6 L1150.0,138.4 L1150.9,140.0 L1151.8,139.9 L1152.7,139.6 L1153.6,139.6 L1154.5,139.2 L1155.4,139.5 L1156.3,138.2 L1157.2,139.0 L1158.1,139.7 L1159.0,138.3 L1159.9,139.9 L1160.8,139.9 L1161.8,138.8 L1162.7,138.7 L1163.6,138.9 L1164.5,138.8 L1165.4,140.1 L1166.3,138.8 L1167.2,138.0 L1168.1,138.1 L1169.0,139.5 L1169.9,140.1 L1170.8,139.0 L1171.7,139.0 L1172.6,139.1 L1173.5,139.5 L1174.4,138.4 L1175.3,139.2 L1176.2,139.1 L1177.1,139.3 L1178.0,138.3 L1178.9,138.3 L1179.8,138.7 L1180.8,139.9 L1181.7,138.7 L1182.6,139.2 L1183.5,138.6 L1184.4,138.1 L1185.3,138.0 L1186.2,139.7 L1187.1,139.6 L1188.0,138.7 L1188.9,139.4 L1189.8,139.4 L1190.7,139.9 L1191.6,140.0 L1192.5,138.8 L1193.4,140.1 L1194.3,140.0 L1195.2,139.2 L1196.1,139.8 L1197.0,139.0 L1197.9,138.7 L1198.8,138.4 L1199.8,139.8 L1200.7,138.3 L1201.6,138.1 L1202.5,139.7 L1203.4,139.0 L1204.4,139.0 L1205.4,137.8 L1206.3,137.7 L1207.2,138.5 L1208.1,136.8 L1209.0,137.2 L1209.9,137.3 L1210.8,137.6 L1211.7,137.0 L1212.6,136.8 L1213.5,137.4 L1214.4,138.6 L1215.3,138.8 L1216.2,138.3 L1217.1,137.7 L1218.0,137.2 L1218.9,138.8 L1219.8,137.8 L1220.7,138.3 L1221.6,137.8 L1223.6,142.5 L1224.5,141.4 L1225.4,141.8 L1226.3,143.2 L1227.2,143.1 L1228.1,143.3 L1229.1,142.7 L1230.0,142.3 L1230.9,142.6 L1231.8,143.2 L1232.7,142.0 L1233.6,142.5 L1234.5,142.0 L1235.4,143.0 L1236.3,141.4 L1237.2,142.9 L1238.1,143.4 L1239.0,141.4 L1239.9,142.7 L1240.8,142.8 L1241.7,143.2 L1242.6,142.6 L1243.5,141.9 L1244.4,142.2 L1245.3,143.5 L1246.2,143.3 L1247.1,141.6 L1248.0,141.6 L1248.9,141.6 L1249.8,141.4 L1250.8,142.3 L1251.7,141.7 L1252.6,143.3 L1253.5,142.8 L1254.4,141.6 L1255.3,142.5 L1256.2,142.1 L1257.1,142.4 L1258.0,141.8 L1258.9,141.7 L1259.8,141.8 L1260.7,142.2 L1261.6,142.9 L1262.5,142.6 L1263.4,141.5 L1264.3,142.9 L1265.2,143.3 L1266.1,143.1 L1267.0,143.1 L1267.9,141.4 L1268.8,142.4 L1269.7,141.5 L1270.6,143.0 L1271.5,141.7 L1272.5,142.9 L1273.4,141.9 L1274.3,142.5 L1276.3,140.2 L1277.2,140.6 L1278.1,139.8 L1279.0,139.2 L1279.9,139.9 L1280.8,139.8 L1281.7,141.1 L1282.6,139.7 L1283.6,140.2 L1284.5,140.3 L1285.4,141.2 L1286.3,139.3 L1287.2,140.4 L1288.1,140.2 L1289.0,140.7 L1289.9,141.2 L1290.8,139.8 L1291.7,140.6 L1292.6,140.2 L1293.6,140.3 L1294.5,139.2 L1295.4,140.9 L1296.3,141.2 L1297.2,139.9 L1298.1,139.8 L1299.0,141.3 L1299.9,139.3 L1300.8,139.3 L1301.7,139.2 L1302.6,140.9 L1303.5,140.8 L1304.5,140.1 L1305.4,140.5 L1306.3,139.1 L1307.2,140.5 L1308.1,140.1 L1309.0,140.2 L1309.9,139.9 L1310.8,140.0 L1311.7,140.2 L1313.8,137.8 L1314.7,137.2 L1315.6,136.8 L1316.5,137.6 L1317.4,137.2 L1318.3,138.3 L1319.3,138.5 L1320.2,138.3 L1321.1,137.7 L1322.0,137.3 L1322.9,137.6 L1323.8,137.8 L1324.8,138.2 L1325.7,138.9 L1326.6,137.0 L1327.5,137.8 L1328.4,137.9 L1329.4,138.4 L1330.3,138.8 L1331.2,138.5 L1332.1,138.2 L1333.0,138.5 L1333.9,138.3 L1334.9,138.7 L1335.8,138.4 L1336.7,138.4 L1337.6,137.4 L1338.5,138.9 L1339.4,137.7 L1340.4,138.2 L1341.3,138.7 L1342.2,139.0 L1343.1,138.0 L1345.1,135.6 L1346.1,136.6 L1347.0,134.5 L1347.9,135.1 L1348.8,135.1 L1349.8,135.3 L1350.7,134.8 L1351.6,135.7 L1352.5,134.6 L1353.5,135.1 L1354.4,136.5 L1355.3,136.1 L1356.2,135.5 L1357.1,134.7 L1358.1,136.6 L1359.0,136.0 L1359.9,134.9 L1360.8,135.2 L1361.8,135.9 L1362.7,136.0 L1363.6,135.0 L1364.5,136.5 L1365.5,135.2 L1366.4,135.0 L1367.3,136.3 L1368.2,134.8 L1369.2,136.0 L1370.1,134.9 L1371.0,135.8 L1371.9,135.1 L1372.8,135.3 L1373.8,136.5 L1374.7,135.5 L1375.6,135.4 L1376.5,135.6 L1378.6,137.8 L1379.5,138.0 L1380.4,137.3 L1381.3,137.1 L1382.2,137.5 L1383.1,137.3 L1384.0,137.1 L1384.9,138.8 L1385.8,136.7 L1386.7,138.5 L1387.6,138.7 L1388.5,138.2 L1389.4,136.7 L1390.3,137.8 L1391.2,136.8 L1392.1,138.0 L1393.0,138.2 L1393.9,137.2 L1394.8,136.7 L1395.7,137.9 L1396.6,136.9 L1397.5,137.4 L1398.4,137.7 L1399.3,138.6 L1400.2,137.5 L1401.1,137.0 L1402.0,138.4 L1402.9,138.5 L1403.8,137.8 L1404.7,136.8 L1405.6,137.1 L1406.5,137.6 L1407.4,137.9 L1408.3,137.2 L1409.2,138.4 L1410.1,138.5 L1411.0,138.7 L1411.9,138.6 L1412.8,136.7 L1413.7,138.0 L1414.6,136.8 L1415.6,138.7 L1416.5,138.3 L1417.4,138.3 L1418.3,137.1 L1419.2,136.8 L1420.1,138.5 L1421.0,138.0 L1421.9,138.0 L1422.8,137.7 L1423.7,138.4 L1424.6,137.4 L1425.5,137.3 L1426.4,137.4 L1427.3,137.3 L1428.2,137.8 L1430.2,134.3 L1431.1,134.6 L1432.0,135.1 L1432.9,133.3 L1433.8,133.3 L1434.7,134.3 L1435.6,134.6 L1436.5,133.5 L1437.4,133.7 L1438.3,133.2 L1439.2,133.1 L1440.1,134.1 L1441.0,134.5 L1441.9,134.5 L1442.8,133.3 L1443.7,133.2 L1444.6,135.0 L1445.6,134.1 L1446.5,133.8 L1447.4,134.4 L1448.3,134.5 L1449.2,134.0 L1450.1,133.0 L1451.0,134.7 L1451.9,133.3 L1452.8,132.9 L1453.7,133.6 L1454.6,134.0 L1455.5,134.2 L1456.4,133.1 L1457.3,134.3 L1458.2,133.8 L1459.1,133.1 L1460.0,134.6 L1460.9,134.5 L1461.8,134.7 L1462.7,134.1 L1463.6,133.1 L1464.5,134.3 L1465.4,134.6 L1466.3,133.8 L1467.2,134.6 L1468.1,134.7 L1469.0,133.4 L1469.9,134.6 L1470.8,134.6 L1471.7,133.6 L1472.6,134.2 L1473.5,132.5 L1474.4,133.2 L1475.4,133.8 L1476.3,133.8 L1477.2,134.1 L1478.1,133.9 L1479.0,132.8 L1479.9,134.5 L1480.8,133.6 L1481.7,134.3 L1482.6,132.9 L1483.5,134.6 L1484.4,133.6 L1485.3,134.1 L1486.2,134.0 L1487.1,134.3 L1488.0,133.1 L1489.0,132.5 L1489.9,133.2 L1490.8,132.7 L1491.7,133.5 L1492.6,134.1 L1493.5,133.1 L1494.4,132.6 L1495.3,132.4 L1496.2,133.2 L1497.1,133.6 L1498.0,132.3 L1498.9,133.7 L1499.8,132.7 L1500.7,132.5 L1501.7,134.3 L1502.6,133.4 L1503.5,134.2 L1504.4,133.4 L1505.3,132.5 L1506.2,132.7 L1507.1,133.1 L1508.0,133.6 L1508.9,133.9 L1509.8,133.8 L1510.7,133.6 L1511.6,132.7 L1512.5,133.1 L1513.4,133.0 L1514.3,133.2 L1515.3,132.7 L1516.2,133.3 L1517.1,133.1 L1518.0,132.2 L1518.9,133.9 L1519.8,133.4 L1520.7,133.9 L1521.6,133.7 L1522.5,133.7 L1523.4,134.3 L1524.3,132.9 L1525.2,132.9 L1526.1,132.1 L1527.0,133.5 L1528.0,133.3 L1528.9,133.3 L1529.8,134.2 L1530.7,132.4 L1531.6,132.5 L1532.5,133.1 L1536.5,139.0 L1537.5,139.7 L1538.4,140.0 L1539.3,139.4 L1540.2,138.7 L1541.1,139.5 L1542.1,140.7 L1543.0,140.1 L1543.9,140.2 L1544.8,140.2 L1545.7,140.9 L1546.7,140.9 L1547.6,141.3 L1548.5,141.8 L1549.4,141.7 L1550.3,141.1 L1551.3,141.0 L1552.2,142.3 L1553.1,142.5 L1554.0,142.9 L1554.9,141.5 L1555.9,143.1 L1556.8,142.5 L1557.8,143.6 L1558.8,142.0 L1559.8,142.8 L1560.8,143.4 L1561.8,159.2 L1562.9,143.4 L1564.0,142.7 L1565.2,141.5" fill="none" stroke="#7eb26d" stroke-width="1.2" stroke-linejoin="round" clip-path="url(#c3)"/>
<path d="M1109.5,172.0 L1110.7,174.2 L1112.0,172.6 L1113.2,174.5 L1115.3,169.5 L1117.3,176.9 L1119.3,172.0 L1119.8,132.6 L1121.0,131.2 L1122.2,134.1 L1123.4,131.7 L1124.5,131.5 L1125.7,132.6 L1126.4,176.9 L1127.7,176.8 L1128.9,175.2 L1130.2,176.2 L1131.5,174.5 L1133.8,164.6 L1134.5,174.5 L1135.7,174.3 L1136.8,177.1 L1138.0,175.8 L1139.2,176.9 L1139.6,132.6 L1140.7,133.3 L1141.9,134.7 L1143.1,134.4 L1144.2,135.5 L1145.4,135.3 L1146.6,135.1 L1147.2,122.8 L1148.5,196.6 L1149.2,127.7 L1150.7,221.2 L1151.7,147.4 L1152.7,240.9 L1153.8,196.6 L1154.8,250.8 L1155.8,221.2 L1157.5,255.7 L1158.1,127.7 L1159.6,126.3 L1161.0,128.8 L1162.5,127.7 L1163.4,253.3 L1164.5,253.5 L1165.6,252.7 L1166.7,252.3 L1167.9,254.3 L1169.0,253.5 L1170.1,254.6 L1171.2,254.1 L1172.4,254.6 L1173.5,253.3 L1174.3,127.7 L1175.6,127.9 L1176.9,128.3 L1178.3,128.0 L1179.6,127.7 L1180.7,255.7 L1181.8,255.0 L1183.0,257.1 L1184.1,255.2 L1185.3,256.6 L1186.4,257.1 L1187.5,256.2 L1188.7,255.7 L1189.2,127.7 L1190.5,126.6 L1191.8,128.7 L1193.1,128.2 L1194.5,127.7 L1195.3,258.2 L1196.5,257.2 L1197.7,256.8 L1198.9,258.3 L1200.1,256.8 L1201.3,259.5 L1202.6,258.2 L1203.8,258.2 L1205.0,257.9 L1206.2,258.2 L1206.7,127.7 L1207.9,128.2 L1209.0,128.9 L1210.2,127.1 L1211.3,127.3 L1212.5,127.7 L1213.3,258.2 L1214.5,258.4 L1215.7,257.6 L1216.9,258.5 L1218.2,258.3 L1219.4,258.0 L1220.6,258.7 L1221.8,258.3 L1223.0,257.0 L1224.2,258.2 L1224.7,127.7 L1226.0,129.2 L1227.3,127.2 L1228.6,127.5 L1229.8,127.4 L1231.1,127.7 L1231.7,255.7 L1232.8,257.0 L1234.0,257.1 L1235.1,255.8 L1236.2,255.4 L1237.3,254.5 L1238.4,256.9 L1239.5,254.7 L1240.6,255.9 L1241.8,255.3 L1242.9,255.7 L1243.3,127.7 L1244.6,127.2 L1245.9,127.2 L1247.2,126.7 L1248.5,126.3 L1249.9,127.7 L1250.5,255.7 L1251.6,255.8 L1252.8,256.6 L1254.0,256.2 L1255.1,254.8 L1256.3,256.3 L1257.4,254.4 L1258.6,255.5 L1259.8,256.7 L1260.9,257.0 L1262.1,255.7 L1262.6,127.7 L1263.9,127.6 L1265.2,128.7 L1266.4,127.7 L1267.7,127.7 L1269.0,127.7 L1269.7,258.2 L1270.9,258.2 L1272.0,259.2 L1273.2,258.2 L1274.4,257.1 L1275.5,257.6 L1276.7,257.1 L1277.9,256.0 L1279.0,257.1 L1280.2,256.9 L1281.3,255.7 L1281.8,127.7 L1282.9,128.0 L1284.0,129.0 L1285.2,126.2 L1286.3,127.7 L1287.5,128.1 L1288.6,127.7 L1289.4,255.7 L1290.6,255.2 L1291.7,254.7 L1292.8,256.3 L1294.0,255.5 L1295.1,255.0 L1296.2,254.4 L1297.4,257.1 L1298.5,255.3 L1299.6,254.6 L1300.8,254.9 L1301.9,255.7 L1302.4,127.7 L1303.7,126.9 L1305.0,128.8 L1306.2,126.7 L1307.5,127.0 L1308.8,127.7 L1309.7,255.7 L1310.8,254.3 L1311.9,255.2 L1313.0,254.2 L1314.1,254.4 L1315.2,255.3 L1316.3,255.7 L1317.4,255.2 L1318.5,252.5 L1319.6,253.3 L1320.7,254.5 L1321.9,253.3 L1322.3,127.7 L1323.4,126.3 L1324.5,126.8 L1325.7,127.6 L1326.8,127.3 L1327.9,128.4 L1329.0,127.7 L1330.0,253.3 L1331.1,253.7 L1332.2,252.7 L1333.4,251.8 L1334.5,251.6 L1335.6,251.4 L1336.7,250.6 L1337.9,252.2 L1339.0,250.4 L1340.1,252.4 L1341.3,251.5 L1342.4,250.8 L1342.9,127.7 L1344.2,126.3 L1345.5,127.7 L1346.7,128.0 L1348.0,126.3 L1349.3,127.7 L1350.2,258.2 L1351.4,257.8 L1352.6,256.2 L1353.9,258.1 L1355.1,255.5 L1356.3,257.0 L1357.5,257.8 L1358.7,257.1 L1359.9,255.7 L1360.1,189.2 L1363.6,132.6 L1364.9,131.8 L1366.1,132.7 L1367.4,131.5 L1368.7,132.1 L1370.0,132.6 L1371.5,167.1 L1372.6,168.4 L1373.7,168.5 L1374.8,166.3 L1375.9,167.7 L1377.0,168.7 L1378.2,167.6 L1379.3,169.7 L1380.4,170.2 L1381.5,169.4 L1382.6,169.5 L1383.1,132.6 L1384.3,132.2 L1385.4,133.6 L1386.6,132.6 L1387.8,131.7 L1388.9,131.9 L1390.1,132.6 L1391.2,172.0 L1392.7,167.1 L1394.0,165.4 L1395.3,166.9 L1396.5,165.3 L1397.8,164.6 L1399.8,172.0 L1401.3,172.6 L1402.9,172.0 L1403.4,127.7 L1404.6,128.6 L1405.8,129.1 L1407.0,126.7 L1408.2,127.4 L1409.4,128.8 L1410.6,127.7 L1412.3,147.4 L1415.0,169.5 L1416.2,171.3 L1417.4,171.2 L1418.6,173.0 L1419.8,172.6 L1421.0,174.5 L1421.6,152.3 L1422.6,172.0 L1424.1,132.6 L1425.5,131.6 L1426.9,131.3 L1428.2,132.2 L1429.6,132.6 L1431.7,169.5 L1432.9,169.1 L1434.0,170.2 L1435.1,171.9 L1436.3,169.7 L1437.4,171.2 L1438.6,172.5 L1439.7,172.0 L1440.8,172.0 L1441.9,181.9 L1443.4,236.0 L1444.8,127.7 L1448.6,132.6 L1450.0,132.7 L1451.3,132.6 L1455.0,172.0 L1456.2,172.5 L1457.3,169.9 L1458.5,172.4 L1459.7,171.3 L1460.8,171.4 L1462.0,171.1 L1463.2,168.6 L1464.3,169.5 L1464.8,132.6 L1466.1,131.3 L1467.4,131.6 L1468.7,132.6 L1470.0,133.9 L1471.3,132.6 L1475.6,196.6 L1476.7,197.9 L1477.8,196.4 L1479.0,197.0 L1480.1,197.3 L1481.2,196.1 L1482.3,198.0 L1483.5,196.6 L1483.9,135.1 L1485.0,136.4 L1486.1,135.7 L1487.2,136.3 L1488.3,136.0 L1489.4,135.1 L1490.5,196.6 L1491.6,197.1 L1492.8,196.1 L1494.0,196.6 L1496.0,169.5 L1497.4,168.3 L1498.8,167.5 L1500.1,166.4 L1501.5,167.1 L1502.6,130.1 L1503.9,131.4 L1505.2,129.5 L1506.4,128.7 L1507.7,129.6 L1509.0,130.1 L1511.2,167.1 L1513.9,159.7 L1515.3,169.5 L1516.5,168.8 L1517.7,170.4 L1518.9,170.5 L1520.1,170.5 L1521.3,172.0 L1523.5,132.6 L1524.6,132.5 L1525.7,132.3 L1526.9,132.2 L1528.0,133.5 L1529.1,132.0 L1530.3,132.6 L1531.5,172.0 L1532.7,171.5 L1534.0,171.9 L1535.3,171.5 L1536.5,169.5 L1537.8,168.3 L1539.1,166.5 L1540.3,168.4 L1541.6,166.3 L1542.9,164.6 L1544.1,164.6 L1544.6,132.6 L1546.0,131.5 L1547.4,131.8 L1548.7,132.0 L1550.1,132.6 L1551.2,164.6 L1552.3,164.0 L1553.4,164.2 L1554.6,167.6 L1555.7,167.5 L1556.8,167.1 L1558.4,167.1 L1560.0,169.5 L1562.9,174.5 L1565.2,181.9 L1565.2,270.5 L1109.5,270.5 Z" fill="#eab839" fill-opacity="0.1" clip-path="url(#c3)"/>
<path d="M1109.5,172.0 L1110.7,174.2 L1112.0,172.6 L1113.2,174.5 L1115.3,169.5 L1117.3,176.9 L1119.3,172.0 L1119.8,132.6 L1121.0,131.2 L1122.2,134.1 L1123.4,131.7 L1124.5,131.5 L1125.7,132.6 L1126.4,176.9 L1127.7,176.8 L1128.9,175.2 L1130.2,176.2 L1131.5,174.5 L1133.8,164.6 L1134.5,174.5 L1135.7,174.3 L1136.8,177.1 L1138.0,175.8 L1139.2,176.9 L1139.6,132.6 L1140.7,133.3 L1141.9,134.7 L1143.1,134.4 L1144.2,135.5 L1145.4,135.3 L1146.6,135.1 L1147.2,122.8 L1148.5,196.6 L1149.2,127.7 L1150.7,221.2 L1151.7,147.4 L1152.7,240.9 L1153.8,196.6 L1154.8,250.8 L1155.8,221.2 L1157.5,255.7 L1158.1,127.7 L1159.6,126.3 L1161.0,128.8 L1162.5,127.7 L1163.4,253.3 L1164.5,253.5 L1165.6,252.7 L1166.7,252.3 L1167.9,254.3 L1169.0,253.5 L1170.1,254.6 L1171.2,254.1 L1172.4,254.6 L1173.5,253.3 L1174.3,127.7 L1175.6,127.9 L1176.9,128.3 L1178.3,128.0 L1179.6,127.7 L1180.7,255.7 L1181.8,255.0 L1183.0,257.1 L1184.1,255.2 L1185.3,256.6 L1186.4,257.1 L1187.5,256.2 L1188.7,255.7 L1189.2,127.7 L1190.5,126.6 L1191.8,128.7 L1193.1,128.2 L1194.5,127.7 L1195.3,258.2 L1196.5,257.2 L1197.7,256.8 L1198.9,258.3 L1200.1,256.8 L1201.3,259.5 L1202.6,258.2 L1203.8,258.2 L1205.0,257.9 L1206.2,258.2 L1206.7,127.7 L1207.9,128.2 L1209.0,128.9 L1210.2,127.1 L1211.3,127.3 L1212.5,127.7 L1213.3,258.2 L1214.5,258.4 L1215.7,257.6 L1216.9,258.5 L1218.2,258.3 L1219.4,258.0 L1220.6,258.7 L1221.8,258.3 L1223.0,257.0 L1224.2,258.2 L1224.7,127.7 L1226.0,129.2 L1227.3,127.2 L1228.6,127.5 L1229.8,127.4 L1231.1,127.7 L1231.7,255.7 L1232.8,257.0 L1234.0,257.1 L1235.1,255.8 L1236.2,255.4 L1237.3,254.5 L1238.4,256.9 L1239.5,254.7 L1240.6,255.9 L1241.8,255.3 L1242.9,255.7 L1243.3,127.7 L1244.6,127.2 L1245.9,127.2 L1247.2,126.7 L1248.5,126.3 L1249.9,127.7 L1250.5,255.7 L1251.6,255.8 L1252.8,256.6 L1254.0,256.2 L1255.1,254.8 L1256.3,256.3 L1257.4,254.4 L1258.6,255.5 L1259.8,256.7 L1260.9,257.0 L1262.1,255.7 L1262.6,127.7 L1263.9,127.6 L1265.2,128.7 L1266.4,127.7 L1267.7,127.7 L1269.0,127.7 L1269.7,258.2 L1270.9,258.2 L1272.0,259.2 L1273.2,258.2 L1274.4,257.1 L1275.5,257.6 L1276.7,257.1 L1277.9,256.0 L1279.0,257.1 L1280.2,256.9 L1281.3,255.7 L1281.8,127.7 L1282.9,128.0 L1284.0,129.0 L1285.2,126.2 L1286.3,127.7 L1287.5,128.1 L1288.6,127.7 L1289.4,255.7 L1290.6,255.2 L1291.7,254.7 L1292.8,256.3 L1294.0,255.5 L1295.1,255.0 L1296.2,254.4 L1297.4,257.1 L1298.5,255.3 L1299.6,254.6 L1300.8,254.9 L1301.9,255.7 L1302.4,127.7 L1303.7,126.9 L1305.0,128.8 L1306.2,126.7 L1307.5,127.0 L1308.8,127.7 L1309.7,255.7 L1310.8,254.3 L1311.9,255.2 L1313.0,254.2 L1314.1,254.4 L1315.2,255.3 L1316.3,255.7 L1317.4,255.2 L1318.5,252.5 L1319.6,253.3 L1320.7,254.5 L1321.9,253.3 L1322.3,127.7 L1323.4,126.3 L1324.5,126.8 L1325.7,127.6 L1326.8,127.3 L1327.9,128.4 L1329.0,127.7 L1330.0,253.3 L1331.1,253.7 L1332.2,252.7 L1333.4,251.8 L1334.5,251.6 L1335.6,251.4 L1336.7,250.6 L1337.9,252.2 L1339.0,250.4 L1340.1,252.4 L1341.3,251.5 L1342.4,250.8 L1342.9,127.7 L1344.2,126.3 L1345.5,127.7 L1346.7,128.0 L1348.0,126.3 L1349.3,127.7 L1350.2,258.2 L1351.4,257.8 L1352.6,256.2 L1353.9,258.1 L1355.1,255.5 L1356.3,257.0 L1357.5,257.8 L1358.7,257.1 L1359.9,255.7 L1360.1,189.2 L1363.6,132.6 L1364.9,131.8 L1366.1,132.7 L1367.4,131.5 L1368.7,132.1 L1370.0,132.6 L1371.5,167.1 L1372.6,168.4 L1373.7,168.5 L1374.8,166.3 L1375.9,167.7 L1377.0,168.7 L1378.2,167.6 L1379.3,169.7 L1380.4,170.2 L1381.5,169.4 L1382.6,169.5 L1383.1,132.6 L1384.3,132.2 L1385.4,133.6 L1386.6,132.6 L1387.8,131.7 L1388.9,131.9 L1390.1,132.6 L1391.2,172.0 L1392.7,167.1 L1394.0,165.4 L1395.3,166.9 L1396.5,165.3 L1397.8,164.6 L1399.8,172.0 L1401.3,172.6 L1402.9,172.0 L1403.4,127.7 L1404.6,128.6 L1405.8,129.1 L1407.0,126.7 L1408.2,127.4 L1409.4,128.8 L1410.6,127.7 L1412.3,147.4 L1415.0,169.5 L1416.2,171.3 L1417.4,171.2 L1418.6,173.0 L1419.8,172.6 L1421.0,174.5 L1421.6,152.3 L1422.6,172.0 L1424.1,132.6 L1425.5,131.6 L1426.9,131.3 L1428.2,132.2 L1429.6,132.6 L1431.7,169.5 L1432.9,169.1 L1434.0,170.2 L1435.1,171.9 L1436.3,169.7 L1437.4,171.2 L1438.6,172.5 L1439.7,172.0 L1440.8,172.0 L1441.9,181.9 L1443.4,236.0 L1444.8,127.7 L1448.6,132.6 L1450.0,132.7 L1451.3,132.6 L1455.0,172.0 L1456.2,172.5 L1457.3,169.9 L1458.5,172.4 L1459.7,171.3 L1460.8,171.4 L1462.0,171.1 L1463.2,168.6 L1464.3,169.5 L1464.8,132.6 L1466.1,131.3 L1467.4,131.6 L1468.7,132.6 L1470.0,133.9 L1471.3,132.6 L1475.6,196.6 L1476.7,197.9 L1477.8,196.4 L1479.0,197.0 L1480.1,197.3 L1481.2,196.1 L1482.3,198.0 L1483.5,196.6 L1483.9,135.1 L1485.0,136.4 L1486.1,135.7 L1487.2,136.3 L1488.3,136.0 L1489.4,135.1 L1490.5,196.6 L1491.6,197.1 L1492.8,196.1 L1494.0,196.6 L1496.0,169.5 L1497.4,168.3 L1498.8,167.5 L1500.1,166.4 L1501.5,167.1 L1502.6,130.1 L1503.9,131.4 L1505.2,129.5 L1506.4,128.7 L1507.7,129.6 L1509.0,130.1 L1511.2,167.1 L1513.9,159.7 L1515.3,169.5 L1516.5,168.8 L1517.7,170.4 L1518.9,170.5 L1520.1,170.5 L1521.3,172.0 L1523.5,132.6 L1524.6,132.5 L1525.7,132.3 L1526.9,132.2 L1528.0,133.5 L1529.1,132.0 L1530.3,132.6 L1531.5,172.0 L1532.7,171.5 L1534.0,171.9 L1535.3,171.5 L1536.5,169.5 L1537.8,168.3 L1539.1,166.5 L1540.3,168.4 L1541.6,166.3 L1542.9,164.6 L1544.1,164.6 L1544.6,132.6 L1546.0,131.5 L1547.4,131.8 L1548.7,132.0 L1550.1,132.6 L1551.2,164.6 L1552.3,164.0 L1553.4,164.2 L1554.6,167.6 L1555.7,167.5 L1556.8,167.1 L1558.4,167.1 L1560.0,169.5 L1562.9,174.5 L1565.2,181.9" fill="none" stroke="#eab839" stroke-width="1.2" stroke-linejoin="round" clip-path="url(#c3)"/>
<path d="M1109.5,122.8 L1146.6,122.8 L1147.7,144.8 L1148.8,122.8 L1149.9,143.9 L1151.0,122.8 L1152.1,140.7 L1153.2,122.8 L1154.4,143.2 L1155.5,122.8 L1359.8,122.8 L1360.3,127.7 L1360.8,122.8 L1403.3,122.8 L1404.1,140.0 L1404.9,127.7 L1405.9,141.5 L1407.1,127.7 L1408.4,140.0 L1410.6,122.8 L1421.3,122.8 L1422.2,130.1 L1423.1,122.8 L1445.4,122.8 L1446.0,126.7 L1446.6,122.8 L1565.2,122.8 L1565.2,270.5 L1109.5,270.5 Z" fill="#6ed0e0" fill-opacity="0.1" clip-path="url(#c3)"/>
<path d="M1109.5,122.8 L1146.6,122.8 L1147.7,144.8 L1148.8,122.8 L1149.9,143.9 L1151.0,122.8 L1152.1,140.7 L1153.2,122.8 L1154.4,143.2 L1155.5,122.8 L1359.8,122.8 L1360.3,127.7 L1360.8,122.8 L1403.3,122.8 L1404.1,140.0 L1404.9,127.7 L1405.9,141.5 L1407.1,127.7 L1408.4,140.0 L1410.6,122.8 L1421.3,122.8 L1422.2,130.1 L1423.1,122.8 L1445.4,122.8 L1446.0,126.7 L1446.6,122.8 L1565.2,122.8" fill="none" stroke="#6ed0e0" stroke-width="1.2" stroke-linejoin="round" clip-path="url(#c3)"/>
<rect x="1087" y="327.8" width="12" height="3" rx="1.5" fill="#7eb26d"/>
<rect x="1087" y="347.8" width="12" height="3" rx="1.5" fill="#eab839"/>
<rect x="1087" y="368.7" width="12" height="3" rx="1.5" fill="#6ed0e0"/>
<rect x="58" y="433" width="451" height="1" fill="#3d3e40"/>
<rect x="58" y="482" width="451" height="1" fill="#3d3e40"/>
<rect x="58" y="531" width="451" height="1" fill="#3d3e40"/>
<rect x="58" y="580" width="451" height="1" fill="#3d3e40"/>
<rect x="58" y="630" width="451" height="1" fill="#3d3e40"/>
<rect x="113" y="433" width="1" height="198" fill="#3d3e40"/>
<rect x="188" y="433" width="1" height="198" fill="#3d3e40"/>
<rect x="263" y="433" width="1" height="198" fill="#3d3e40"/>
<rect x="338" y="433" width="1" height="198" fill="#3d3e40"/>
<rect x="413" y="433" width="1" height="198" fill="#3d3e40"/>
<rect x="489" y="433" width="1" height="198" fill="#3d3e40"/>
<clipPath id="c4"><rect x="58.3" y="428.5" width="451.0" height="202.0"/></clipPath>
<path d="M58.3,501.5 L59.2,500.7 L60.1,501.9 L61.1,501.8 L62.0,501.4 L62.9,500.8 L63.8,502.1 L64.7,502.1 L65.6,501.5 L66.6,501.5 L67.5,500.9 L68.4,500.4 L69.3,501.2 L70.2,501.7 L71.1,500.5 L72.1,502.1 L73.0,500.9 L73.9,500.9 L74.8,500.5 L75.7,502.6 L76.7,502.0 L77.6,502.3 L78.5,501.7 L79.4,500.4 L80.3,501.1 L81.2,501.5 L82.2,500.6 L83.1,502.5 L84.0,501.2 L84.9,500.7 L85.8,502.2 L86.7,500.6 L87.7,502.4 L88.6,501.4 L89.5,501.6 L90.4,501.1 L91.3,501.4 L92.2,500.8 L93.2,500.4 L94.1,502.3 L95.0,501.5 L96.5,499.0 L97.4,498.4 L98.3,499.6 L99.2,498.4 L100.1,500.0 L101.0,499.9 L102.0,499.6 L102.9,499.6 L103.8,499.2 L104.7,499.5 L105.6,498.2 L106.5,499.0 L107.4,499.7 L108.3,498.3 L109.2,499.9 L110.1,499.9 L111.0,498.8 L111.9,498.7 L112.8,498.9 L113.8,498.8 L114.7,500.1 L115.6,498.8 L116.5,498.0 L117.4,498.1 L118.3,499.5 L119.2,500.1 L120.1,499.0 L121.0,499.0 L121.9,499.1 L122.8,499.5 L123.8,498.4 L124.7,499.2 L125.6,499.1 L126.5,499.3 L127.4,498.3 L128.3,498.3 L129.2,498.7 L130.1,499.9 L131.0,498.7 L131.9,499.2 L132.8,498.6 L133.7,498.1 L134.7,498.0 L135.6,499.7 L136.5,499.6 L137.4,498.7 L138.3,499.4 L139.2,499.4 L140.1,499.9 L141.0,500.0 L141.9,498.8 L142.8,500.1 L143.7,500.0 L144.6,499.2 L145.6,499.8 L146.5,499.0 L147.4,498.7 L148.3,498.4 L149.2,499.8 L150.1,498.3 L151.0,499.0 L152.0,497.4 L153.0,497.8 L153.9,498.4 L154.9,498.4 L155.8,497.7 L156.8,498.5 L157.7,496.8 L158.6,497.2 L159.6,497.3 L160.5,497.6 L161.5,497.0 L162.4,496.8 L163.4,497.4 L164.3,498.6 L165.2,498.8 L166.2,498.3 L167.1,497.7 L168.1,497.2 L169.0,497.8 L171.0,502.5 L171.9,503.5 L172.8,502.5 L173.7,503.0 L174.6,501.4 L175.5,501.8 L176.5,503.2 L177.4,503.1 L178.3,503.3 L179.2,502.7 L180.1,502.3 L181.0,502.6 L181.9,503.2 L182.8,502.0 L183.7,502.5 L184.6,502.0 L185.5,503.0 L186.5,501.4 L187.4,502.9 L188.3,503.4 L189.2,501.4 L190.1,502.7 L191.0,502.8 L191.9,503.2 L192.8,502.6 L193.7,501.9 L194.6,502.2 L195.5,503.5 L196.5,503.3 L197.4,501.6 L198.3,501.6 L199.2,501.6 L200.1,501.4 L201.0,502.3 L201.9,501.7 L202.8,503.3 L203.7,502.8 L204.6,501.6 L205.5,502.5 L206.5,502.1 L207.4,502.4 L208.3,501.8 L209.2,501.7 L210.1,501.8 L211.0,502.2 L211.9,502.9 L212.8,502.6 L213.7,501.5 L214.6,502.9 L215.5,503.3 L216.5,503.1 L217.4,503.1 L218.3,501.4 L219.2,502.4 L220.1,501.5 L221.0,502.5 L223.0,500.2 L223.9,500.8 L224.8,499.5 L225.8,500.6 L226.7,499.6 L227.6,500.6 L228.5,499.8 L229.4,499.2 L230.4,499.9 L231.3,499.8 L232.2,501.1 L233.1,499.7 L234.1,500.2 L235.0,500.3 L235.9,501.2 L236.8,499.3 L237.7,500.4 L238.7,500.2 L239.6,500.7 L240.5,501.2 L241.4,499.8 L242.3,500.6 L243.3,500.2 L244.2,500.3 L245.1,499.2 L246.0,500.9 L246.9,501.2 L247.9,499.9 L248.8,499.8 L249.7,501.3 L250.6,499.3 L251.6,499.3 L252.5,499.2 L253.4,500.9 L254.3,500.8 L255.2,500.1 L256.2,500.5 L257.1,499.1 L258.0,500.2 L260.0,497.8 L260.9,498.1 L261.8,497.7 L262.7,497.8 L263.6,497.6 L264.5,497.6 L265.4,497.2 L266.3,496.8 L267.2,497.7 L268.2,497.3 L269.1,498.3 L270.0,498.6 L270.9,498.4 L271.8,497.8 L272.7,497.3 L273.6,497.6 L274.5,497.9 L275.4,498.2 L276.3,498.9 L277.2,497.0 L278.1,497.9 L279.0,497.9 L279.9,498.4 L280.8,498.8 L281.8,498.6 L282.7,498.2 L283.6,498.5 L284.5,498.3 L285.4,498.8 L286.3,498.4 L287.2,498.4 L288.1,497.4 L289.0,498.0 L291.0,495.6 L291.9,496.5 L292.8,495.3 L293.7,495.8 L294.6,496.3 L295.6,496.6 L296.5,496.6 L297.4,494.5 L298.3,495.1 L299.2,495.1 L300.1,495.3 L301.0,494.8 L301.9,495.7 L302.9,494.6 L303.8,495.1 L304.7,496.5 L305.6,496.1 L306.5,495.5 L307.4,494.7 L308.3,496.6 L309.2,496.0 L310.1,494.9 L311.1,495.2 L312.0,495.9 L312.9,496.0 L313.8,495.0 L314.7,496.5 L315.6,495.2 L316.5,495.0 L317.4,496.3 L318.4,494.8 L319.3,496.0 L320.2,494.9 L321.1,495.8 L322.0,495.6 L324.0,497.8 L324.9,497.3 L325.8,497.5 L326.7,498.7 L327.6,497.7 L328.5,497.6 L329.4,498.0 L330.4,497.3 L331.3,497.1 L332.2,497.5 L333.1,497.3 L334.0,497.1 L334.9,498.8 L335.8,496.7 L336.7,498.5 L337.6,498.7 L338.5,498.2 L339.4,496.7 L340.3,497.8 L341.2,496.8 L342.1,498.0 L343.1,498.2 L344.0,497.2 L344.9,496.7 L345.8,497.9 L346.7,496.9 L347.6,497.4 L348.5,497.7 L349.4,498.6 L350.3,497.5 L351.2,497.0 L352.1,498.4 L353.0,498.5 L353.9,497.8 L354.9,496.8 L355.8,497.1 L356.7,497.6 L357.6,497.9 L358.5,497.2 L359.4,498.4 L360.3,498.5 L361.2,498.7 L362.1,498.6 L363.0,496.7 L363.9,498.0 L364.8,496.8 L365.7,498.7 L366.6,498.3 L367.6,498.3 L368.5,497.1 L369.4,496.8 L370.3,498.5 L371.2,498.0 L372.1,498.0 L373.0,497.8 L375.0,494.3 L375.9,494.2 L376.8,495.0 L377.7,493.9 L378.6,493.8 L379.6,493.9 L380.5,493.8 L381.4,494.5 L382.3,495.1 L383.2,493.2 L384.1,493.2 L385.0,494.2 L385.9,494.5 L386.8,493.4 L387.8,493.6 L388.7,493.1 L389.6,493.0 L390.5,494.0 L391.4,494.4 L392.3,494.3 L393.2,493.2 L394.1,493.1 L395.0,494.9 L396.0,494.0 L396.9,493.7 L397.8,494.3 L398.7,494.4 L399.6,493.9 L400.5,492.9 L401.4,494.6 L402.3,493.2 L403.2,492.8 L404.2,493.5 L405.1,493.9 L406.0,494.0 L406.9,493.0 L407.8,494.2 L408.7,493.7 L409.6,493.0 L410.5,494.5 L411.4,494.3 L412.4,494.5 L413.3,494.0 L414.2,493.0 L415.1,494.2 L416.0,493.6 L416.9,494.5 L417.8,493.6 L418.7,494.5 L419.6,494.6 L420.5,493.3 L421.5,494.5 L422.4,494.5 L423.3,494.2 L424.2,492.4 L425.1,493.2 L426.0,493.8 L426.9,493.7 L427.8,494.1 L428.7,493.8 L429.6,492.7 L430.5,494.4 L431.5,493.5 L432.4,494.3 L433.3,492.8 L434.2,494.5 L435.1,493.5 L436.0,494.0 L436.9,493.9 L437.8,494.2 L438.7,493.1 L439.6,492.5 L440.5,493.2 L441.5,492.7 L442.4,493.5 L443.3,494.1 L444.2,493.1 L445.1,492.5 L446.0,492.3 L446.9,493.2 L447.8,493.5 L448.7,492.3 L449.6,493.7 L450.5,492.7 L451.5,492.4 L452.4,494.2 L453.3,493.3 L454.2,494.1 L455.1,493.3 L456.0,492.4 L456.9,492.7 L457.8,493.1 L458.7,493.5 L459.6,493.8 L460.5,493.8 L461.5,493.5 L462.4,492.7 L463.3,493.0 L464.2,492.9 L465.1,493.2 L466.0,492.7 L466.9,493.3 L467.8,493.1 L468.7,492.1 L469.6,493.9 L470.5,493.3 L471.5,493.8 L472.4,493.6 L473.3,493.6 L474.2,494.2 L475.1,492.8 L476.0,493.1 L480.0,499.0 L480.9,498.9 L481.8,498.2 L482.7,499.8 L483.6,499.8 L484.5,500.0 L485.5,501.0 L486.4,499.4 L487.3,499.7 L488.2,500.9 L489.1,501.3 L490.0,500.7 L490.9,499.9 L491.8,500.8 L492.7,501.9 L493.6,501.4 L494.5,501.4 L495.5,501.4 L496.4,502.1 L497.3,502.2 L498.2,502.6 L499.1,503.1 L500.0,502.5 L501.0,503.2 L502.0,502.7 L503.0,502.6 L504.0,503.4 L504.9,519.2 L506.0,503.4 L507.1,503.1 L508.3,501.5 L508.3,630.5 L58.3,630.5 Z" fill="#7eb26d" fill-opacity="0.1" clip-path="url(#c4)"/>
<path d="M58.3,501.5 L59.2,500.7 L60.1,501.9 L61.1,501.8 L62.0,501.4 L62.9,500.8 L63.8,502.1 L64.7,502.1 L65.6,501.5 L66.6,501.5 L67.5,500.9 L68.4,500.4 L69.3,501.2 L70.2,501.7 L71.1,500.5 L72.1,502.1 L73.0,500.9 L73.9,500.9 L74.8,500.5 L75.7,502.6 L76.7,502.0 L77.6,502.3 L78.5,501.7 L79.4,500.4 L80.3,501.1 L81.2,501.5 L82.2,500.6 L83.1,502.5 L84.0,501.2 L84.9,500.7 L85.8,502.2 L86.7,500.6 L87.7,502.4 L88.6,501.4 L89.5,501.6 L90.4,501.1 L91.3,501.4 L92.2,500.8 L93.2,500.4 L94.1,502.3 L95.0,501.5 L96.5,499.0 L97.4,498.4 L98.3,499.6 L99.2,498.4 L100.1,500.0 L101.0,499.9 L102.0,499.6 L102.9,499.6 L103.8,499.2 L104.7,499.5 L105.6,498.2 L106.5,499.0 L107.4,499.7 L108.3,498.3 L109.2,499.9 L110.1,499.9 L111.0,498.8 L111.9,498.7 L112.8,498.9 L113.8,498.8 L114.7,500.1 L115.6,498.8 L116.5,498.0 L117.4,498.1 L118.3,499.5 L119.2,500.1 L120.1,499.0 L121.0,499.0 L121.9,499.1 L122.8,499.5 L123.8,498.4 L124.7,499.2 L125.6,499.1 L126.5,499.3 L127.4,498.3 L128.3,498.3 L129.2,498.7 L130.1,499.9 L131.0,498.7 L131.9,499.2 L132.8,498.6 L133.7,498.1 L134.7,498.0 L135.6,499.7 L136.5,499.6 L137.4,498.7 L138.3,499.4 L139.2,499.4 L140.1,499.9 L141.0,500.0 L141.9,498.8 L142.8,500.1 L143.7,500.0 L144.6,499.2 L145.6,499.8 L146.5,499.0 L147.4,498.7 L148.3,498.4 L149.2,499.8 L150.1,498.3 L151.0,499.0 L152.0,497.4 L153.0,497.8 L153.9,498.4 L154.9,498.4 L155.8,497.7 L156.8,498.5 L157.7,496.8 L158.6,497.2 L159.6,497.3 L160.5,497.6 L161.5,497.0 L162.4,496.8 L163.4,497.4 L164.3,498.6 L165.2,498.8 L166.2,498.3 L167.1,497.7 L168.1,497.2 L169.0,497.8 L171.0,502.5 L171.9,503.5 L172.8,502.5 L173.7,503.0 L174.6,501.4 L175.5,501.8 L176.5,503.2 L177.4,503.1 L178.3,503.3 L179.2,502.7 L180.1,502.3 L181.0,502.6 L181.9,503.2 L182.8,502.0 L183.7,502.5 L184.6,502.0 L185.5,503.0 L186.5,501.4 L187.4,502.9 L188.3,503.4 L189.2,501.4 L190.1,502.7 L191.0,502.8 L191.9,503.2 L192.8,502.6 L193.7,501.9 L194.6,502.2 L195.5,503.5 L196.5,503.3 L197.4,501.6 L198.3,501.6 L199.2,501.6 L200.1,501.4 L201.0,502.3 L201.9,501.7 L202.8,503.3 L203.7,502.8 L204.6,501.6 L205.5,502.5 L206.5,502.1 L207.4,502.4 L208.3,501.8 L209.2,501.7 L210.1,501.8 L211.0,502.2 L211.9,502.9 L212.8,502.6 L213.7,501.5 L214.6,502.9 L215.5,503.3 L216.5,503.1 L217.4,503.1 L218.3,501.4 L219.2,502.4 L220.1,501.5 L221.0,502.5 L223.0,500.2 L223.9,500.8 L224.8,499.5 L225.8,500.6 L226.7,499.6 L227.6,500.6 L228.5,499.8 L229.4,499.2 L230.4,499.9 L231.3,499.8 L232.2,501.1 L233.1,499.7 L234.1,500.2 L235.0,500.3 L235.9,501.2 L236.8,499.3 L237.7,500.4 L238.7,500.2 L239.6,500.7 L240.5,501.2 L241.4,499.8 L242.3,500.6 L243.3,500.2 L244.2,500.3 L245.1,499.2 L246.0,500.9 L246.9,501.2 L247.9,499.9 L248.8,499.8 L249.7,501.3 L250.6,499.3 L251.6,499.3 L252.5,499.2 L253.4,500.9 L254.3,500.8 L255.2,500.1 L256.2,500.5 L257.1,499.1 L258.0,500.2 L260.0,497.8 L260.9,498.1 L261.8,497.7 L262.7,497.8 L263.6,497.6 L264.5,497.6 L265.4,497.2 L266.3,496.8 L267.2,497.7 L268.2,497.3 L269.1,498.3 L270.0,498.6 L270.9,498.4 L271.8,497.8 L272.7,497.3 L273.6,497.6 L274.5,497.9 L275.4,498.2 L276.3,498.9 L277.2,497.0 L278.1,497.9 L279.0,497.9 L279.9,498.4 L280.8,498.8 L281.8,498.6 L282.7,498.2 L283.6,498.5 L284.5,498.3 L285.4,498.8 L286.3,498.4 L287.2,498.4 L288.1,497.4 L289.0,498.0 L291.0,495.6 L291.9,496.5 L292.8,495.3 L293.7,495.8 L294.6,496.3 L295.6,496.6 L296.5,496.6 L297.4,494.5 L298.3,495.1 L299.2,495.1 L300.1,495.3 L301.0,494.8 L301.9,495.7 L302.9,494.6 L303.8,495.1 L304.7,496.5 L305.6,496.1 L306.5,495.5 L307.4,494.7 L308.3,496.6 L309.2,496.0 L310.1,494.9 L311.1,495.2 L312.0,495.9 L312.9,496.0 L313.8,495.0 L314.7,496.5 L315.6,495.2 L316.5,495.0 L317.4,496.3 L318.4,494.8 L319.3,496.0 L320.2,494.9 L321.1,495.8 L322.0,495.6 L324.0,497.8 L324.9,497.3 L325.8,497.5 L326.7,498.7 L327.6,497.7 L328.5,497.6 L329.4,498.0 L330.4,497.3 L331.3,497.1 L332.2,497.5 L333.1,497.3 L334.0,497.1 L334.9,498.8 L335.8,496.7 L336.7,498.5 L337.6,498.7 L338.5,498.2 L339.4,496.7 L340.3,497.8 L341.2,496.8 L342.1,498.0 L343.1,498.2 L344.0,497.2 L344.9,496.7 L345.8,497.9 L346.7,496.9 L347.6,497.4 L348.5,497.7 L349.4,498.6 L350.3,497.5 L351.2,497.0 L352.1,498.4 L353.0,498.5 L353.9,497.8 L354.9,496.8 L355.8,497.1 L356.7,497.6 L357.6,497.9 L358.5,497.2 L359.4,498.4 L360.3,498.5 L361.2,498.7 L362.1,498.6 L363.0,496.7 L363.9,498.0 L364.8,496.8 L365.7,498.7 L366.6,498.3 L367.6,498.3 L368.5,497.1 L369.4,496.8 L370.3,498.5 L371.2,498.0 L372.1,498.0 L373.0,497.8 L375.0,494.3 L375.9,494.2 L376.8,495.0 L377.7,493.9 L378.6,493.8 L379.6,493.9 L380.5,493.8 L381.4,494.5 L382.3,495.1 L383.2,493.2 L384.1,493.2 L385.0,494.2 L385.9,494.5 L386.8,493.4 L387.8,493.6 L388.7,493.1 L389.6,493.0 L390.5,494.0 L391.4,494.4 L392.3,494.3 L393.2,493.2 L394.1,493.1 L395.0,494.9 L396.0,494.0 L396.9,493.7 L397.8,494.3 L398.7,494.4 L399.6,493.9 L400.5,492.9 L401.4,494.6 L402.3,493.2 L403.2,492.8 L404.2,493.5 L405.1,493.9 L406.0,494.0 L406.9,493.0 L407.8,494.2 L408.7,493.7 L409.6,493.0 L410.5,494.5 L411.4,494.3 L412.4,494.5 L413.3,494.0 L414.2,493.0 L415.1,494.2 L416.0,493.6 L416.9,494.5 L417.8,493.6 L418.7,494.5 L419.6,494.6 L420.5,493.3 L421.5,494.5 L422.4,494.5 L423.3,494.2 L424.2,492.4 L425.1,493.2 L426.0,493.8 L426.9,493.7 L427.8,494.1 L428.7,493.8 L429.6,492.7 L430.5,494.4 L431.5,493.5 L432.4,494.3 L433.3,492.8 L434.2,494.5 L435.1,493.5 L436.0,494.0 L436.9,493.9 L437.8,494.2 L438.7,493.1 L439.6,492.5 L440.5,493.2 L441.5,492.7 L442.4,493.5 L443.3,494.1 L444.2,493.1 L445.1,492.5 L446.0,492.3 L446.9,493.2 L447.8,493.5 L448.7,492.3 L449.6,493.7 L450.5,492.7 L451.5,492.4 L452.4,494.2 L453.3,493.3 L454.2,494.1 L455.1,493.3 L456.0,492.4 L456.9,492.7 L457.8,493.1 L458.7,493.5 L459.6,493.8 L460.5,493.8 L461.5,493.5 L462.4,492.7 L463.3,493.0 L464.2,492.9 L465.1,493.2 L466.0,492.7 L466.9,493.3 L467.8,493.1 L468.7,492.1 L469.6,493.9 L470.5,493.3 L471.5,493.8 L472.4,493.6 L473.3,493.6 L474.2,494.2 L475.1,492.8 L476.0,493.1 L480.0,499.0 L480.9,498.9 L481.8,498.2 L482.7,499.8 L483.6,499.8 L484.5,500.0 L485.5,501.0 L486.4,499.4 L487.3,499.7 L488.2,500.9 L489.1,501.3 L490.0,500.7 L490.9,499.9 L491.8,500.8 L492.7,501.9 L493.6,501.4 L494.5,501.4 L495.5,501.4 L496.4,502.1 L497.3,502.2 L498.2,502.6 L499.1,503.1 L500.0,502.5 L501.0,503.2 L502.0,502.7 L503.0,502.6 L504.0,503.4 L504.9,519.2 L506.0,503.4 L507.1,503.1 L508.3,501.5" fill="none" stroke="#7eb26d" stroke-width="1.2" stroke-linejoin="round" clip-path="url(#c4)"/>
<path d="M58.3,532.0 L59.5,534.2 L60.8,532.6 L62.0,534.5 L64.0,529.5 L66.0,536.9 L68.0,532.0 L68.5,492.6 L69.7,491.2 L70.8,494.1 L72.0,491.7 L73.1,491.5 L74.3,492.6 L75.0,536.9 L76.2,536.8 L77.5,535.2 L78.8,536.2 L80.0,534.5 L82.3,524.6 L83.0,534.5 L84.2,534.3 L85.3,537.1 L86.4,535.8 L87.6,536.9 L88.0,492.6 L89.2,493.3 L90.3,494.7 L91.5,494.4 L92.6,495.5 L93.8,495.3 L94.9,495.1 L95.5,482.8 L96.8,556.6 L97.5,487.7 L99.0,581.2 L100.0,507.4 L101.0,600.9 L102.0,556.6 L103.0,610.8 L104.0,581.2 L105.7,615.7 L106.3,487.7 L107.7,486.3 L109.2,488.8 L110.6,487.7 L111.5,613.3 L112.6,613.5 L113.7,612.7 L114.8,612.3 L115.9,614.3 L117.1,613.5 L118.2,614.6 L119.3,614.1 L120.4,614.6 L121.5,613.3 L122.3,487.7 L123.6,487.9 L124.9,488.3 L126.2,488.0 L127.5,487.7 L128.6,615.7 L129.7,615.0 L130.9,617.1 L132.0,615.2 L133.1,616.6 L134.2,617.1 L135.4,616.2 L136.5,615.7 L137.0,487.7 L138.3,486.6 L139.6,488.7 L140.9,488.2 L142.2,487.7 L143.0,618.2 L144.2,617.2 L145.4,616.8 L146.6,618.3 L147.8,616.8 L149.0,619.5 L150.2,618.2 L151.4,618.2 L152.6,617.9 L153.8,618.2 L154.3,487.7 L155.4,488.2 L156.6,488.9 L157.7,487.1 L158.9,487.3 L160.0,487.7 L160.8,618.2 L162.0,618.4 L163.2,617.6 L164.4,618.5 L165.6,618.3 L166.8,618.0 L168.0,618.7 L169.2,618.3 L170.4,617.0 L171.6,618.2 L172.1,487.7 L173.4,489.2 L174.6,487.2 L175.9,487.5 L177.1,487.4 L178.4,487.7 L179.0,615.7 L180.1,617.0 L181.2,617.1 L182.3,615.8 L183.4,615.4 L184.5,614.5 L185.6,616.9 L186.7,614.7 L187.8,615.9 L188.9,615.3 L190.0,615.7 L190.4,487.7 L191.7,487.2 L193.0,487.2 L194.3,486.7 L195.6,486.3 L196.9,487.7 L197.5,615.7 L198.7,615.8 L199.8,616.6 L200.9,616.2 L202.1,614.8 L203.2,616.3 L204.4,614.4 L205.6,615.5 L206.7,616.7 L207.8,617.0 L209.0,615.7 L209.5,487.7 L210.8,487.6 L212.0,488.7 L213.3,487.7 L214.5,487.7 L215.8,487.7 L216.5,618.2 L217.7,618.2 L218.8,619.2 L219.9,618.2 L221.1,617.1 L222.2,617.6 L223.4,617.1 L224.6,616.0 L225.7,617.1 L226.8,616.9 L228.0,615.7 L228.4,487.7 L229.5,488.0 L230.7,489.0 L231.8,486.2 L232.9,487.7 L234.1,488.1 L235.2,487.7 L236.0,615.7 L237.1,615.2 L238.2,614.7 L239.4,616.3 L240.5,615.5 L241.6,615.0 L242.7,614.4 L243.8,617.1 L244.9,615.3 L246.1,614.6 L247.2,614.9 L248.3,615.7 L248.8,487.7 L250.1,486.9 L251.3,488.8 L252.6,486.7 L253.8,487.0 L255.1,487.7 L256.0,615.7 L257.2,614.3 L258.4,615.1 L259.6,614.1 L260.8,614.3 L262.0,615.2 L263.2,615.5 L264.4,615.0 L265.6,612.4 L266.8,613.1 L268.0,613.3 L268.4,487.7 L269.5,488.7 L270.6,486.3 L271.8,486.8 L272.9,487.6 L274.0,487.3 L275.1,487.7 L276.0,613.3 L277.1,613.8 L278.2,613.5 L279.4,612.5 L280.5,611.6 L281.6,611.3 L282.7,611.2 L283.8,610.4 L284.9,612.0 L286.1,610.2 L287.2,612.2 L288.3,610.8 L288.8,487.7 L290.1,488.1 L291.3,486.3 L292.6,487.7 L293.8,488.0 L295.1,487.7 L296.0,618.2 L297.2,616.5 L298.4,617.5 L299.6,615.9 L300.8,617.8 L302.0,615.2 L303.2,616.7 L304.4,617.5 L305.6,615.7 L305.8,549.2 L309.2,492.6 L310.5,493.6 L311.7,491.8 L313.0,492.7 L314.2,491.5 L315.5,492.6 L317.0,527.1 L318.1,526.8 L319.2,528.7 L320.3,528.8 L321.4,526.6 L322.5,527.9 L323.6,529.0 L324.7,527.8 L325.8,530.0 L326.9,530.5 L328.0,529.5 L328.5,492.6 L329.6,492.8 L330.8,492.2 L331.9,493.6 L333.1,492.6 L334.2,491.7 L335.4,492.6 L336.5,532.0 L338.0,527.1 L339.2,525.8 L340.5,524.8 L341.8,526.2 L343.0,524.6 L345.0,532.0 L346.5,532.0 L348.0,532.0 L348.5,487.7 L349.7,488.3 L350.9,488.6 L352.1,489.1 L353.2,486.7 L354.4,487.4 L355.6,487.7 L357.3,507.4 L360.0,529.5 L361.2,531.6 L362.4,532.3 L363.5,532.2 L364.7,533.9 L365.9,534.5 L366.5,512.3 L367.5,532.0 L369.0,492.6 L370.4,491.7 L371.7,491.6 L373.0,491.3 L374.4,492.6 L376.5,529.5 L377.6,529.5 L378.8,529.4 L379.9,530.5 L381.0,532.2 L382.1,530.0 L383.2,531.6 L384.4,532.8 L385.5,532.0 L386.5,541.9 L388.0,596.0 L389.4,487.7 L393.2,492.6 L394.5,492.9 L395.8,492.6 L399.5,532.0 L400.6,531.8 L401.8,532.2 L402.9,529.6 L404.1,532.1 L405.2,531.0 L406.4,531.1 L407.6,530.8 L408.7,529.5 L409.2,492.6 L410.5,491.4 L411.8,491.3 L413.0,491.6 L414.3,492.6 L415.6,492.6 L419.8,556.6 L420.9,557.9 L422.0,557.9 L423.1,556.4 L424.3,557.0 L425.4,557.3 L426.5,556.1 L427.6,556.6 L428.0,495.1 L429.1,496.5 L430.2,496.4 L431.3,495.7 L432.4,496.3 L433.5,495.1 L434.5,556.6 L435.7,557.5 L436.8,557.1 L438.0,556.6 L440.0,529.5 L441.4,528.4 L442.7,527.7 L444.0,526.9 L445.4,527.1 L446.5,490.1 L447.8,488.8 L449.0,491.4 L450.3,489.5 L451.5,488.7 L452.8,490.1 L455.0,527.1 L457.6,519.7 L459.0,529.5 L460.2,529.5 L461.4,529.3 L462.6,530.9 L463.8,531.0 L465.0,532.0 L467.1,492.6 L468.2,491.6 L469.3,492.5 L470.5,492.3 L471.6,492.2 L472.7,493.5 L473.8,492.6 L475.0,532.0 L476.2,530.8 L477.5,530.9 L478.8,531.3 L480.0,529.5 L481.2,530.1 L482.5,527.5 L483.8,525.7 L485.0,527.6 L486.2,525.5 L487.5,524.6 L488.0,492.6 L489.4,491.8 L490.7,491.5 L492.0,491.8 L493.4,492.6 L494.5,524.6 L495.6,524.5 L496.7,524.5 L497.8,524.7 L498.9,528.1 L500.0,527.1 L501.6,529.3 L503.2,529.5 L506.0,534.5 L508.3,541.9 L508.3,630.5 L58.3,630.5 Z" fill="#eab839" fill-opacity="0.1" clip-path="url(#c4)"/>
<path d="M58.3,532.0 L59.5,534.2 L60.8,532.6 L62.0,534.5 L64.0,529.5 L66.0,536.9 L68.0,532.0 L68.5,492.6 L69.7,491.2 L70.8,494.1 L72.0,491.7 L73.1,491.5 L74.3,492.6 L75.0,536.9 L76.2,536.8 L77.5,535.2 L78.8,536.2 L80.0,534.5 L82.3,524.6 L83.0,534.5 L84.2,534.3 L85.3,537.1 L86.4,535.8 L87.6,536.9 L88.0,492.6 L89.2,493.3 L90.3,494.7 L91.5,494.4 L92.6,495.5 L93.8,495.3 L94.9,495.1 L95.5,482.8 L96.8,556.6 L97.5,487.7 L99.0,581.2 L100.0,507.4 L101.0,600.9 L102.0,556.6 L103.0,610.8 L104.0,581.2 L105.7,615.7 L106.3,487.7 L107.7,486.3 L109.2,488.8 L110.6,487.7 L111.5,613.3 L112.6,613.5 L113.7,612.7 L114.8,612.3 L115.9,614.3 L117.1,613.5 L118.2,614.6 L119.3,614.1 L120.4,614.6 L121.5,613.3 L122.3,487.7 L123.6,487.9 L124.9,488.3 L126.2,488.0 L127.5,487.7 L128.6,615.7 L129.7,615.0 L130.9,617.1 L132.0,615.2 L133.1,616.6 L134.2,617.1 L135.4,616.2 L136.5,615.7 L137.0,487.7 L138.3,486.6 L139.6,488.7 L140.9,488.2 L142.2,487.7 L143.0,618.2 L144.2,617.2 L145.4,616.8 L146.6,618.3 L147.8,616.8 L149.0,619.5 L150.2,618.2 L151.4,618.2 L152.6,617.9 L153.8,618.2 L154.3,487.7 L155.4,488.2 L156.6,488.9 L157.7,487.1 L158.9,487.3 L160.0,487.7 L160.8,618.2 L162.0,618.4 L163.2,617.6 L164.4,618.5 L165.6,618.3 L166.8,618.0 L168.0,618.7 L169.2,618.3 L170.4,617.0 L171.6,618.2 L172.1,487.7 L173.4,489.2 L174.6,487.2 L175.9,487.5 L177.1,487.4 L178.4,487.7 L179.0,615.7 L180.1,617.0 L181.2,617.1 L182.3,615.8 L183.4,615.4 L184.5,614.5 L185.6,616.9 L186.7,614.7 L187.8,615.9 L188.9,615.3 L190.0,615.7 L190.4,487.7 L191.7,487.2 L193.0,487.2 L194.3,486.7 L195.6,486.3 L196.9,487.7 L197.5,615.7 L198.7,615.8 L199.8,616.6 L200.9,616.2 L202.1,614.8 L203.2,616.3 L204.4,614.4 L205.6,615.5 L206.7,616.7 L207.8,617.0 L209.0,615.7 L209.5,487.7 L210.8,487.6 L212.0,488.7 L213.3,487.7 L214.5,487.7 L215.8,487.7 L216.5,618.2 L217.7,618.2 L218.8,619.2 L219.9,618.2 L221.1,617.1 L222.2,617.6 L223.4,617.1 L224.6,616.0 L225.7,617.1 L226.8,616.9 L228.0,615.7 L228.4,487.7 L229.5,488.0 L230.7,489.0 L231.8,486.2 L232.9,487.7 L234.1,488.1 L235.2,487.7 L236.0,615.7 L237.1,615.2 L238.2,614.7 L239.4,616.3 L240.5,615.5 L241.6,615.0 L242.7,614.4 L243.8,617.1 L244.9,615.3 L246.1,614.6 L247.2,614.9 L248.3,615.7 L248.8,487.7 L250.1,486.9 L251.3,488.8 L252.6,486.7 L253.8,487.0 L255.1,487.7 L256.0,615.7 L257.2,614.3 L258.4,615.1 L259.6,614.1 L260.8,614.3 L262.0,615.2 L263.2,615.5 L264.4,615.0 L265.6,612.4 L266.8,613.1 L268.0,613.3 L268.4,487.7 L269.5,488.7 L270.6,486.3 L271.8,486.8 L272.9,487.6 L274.0,487.3 L275.1,487.7 L276.0,613.3 L277.1,613.8 L278.2,613.5 L279.4,612.5 L280.5,611.6 L281.6,611.3 L282.7,611.2 L283.8,610.4 L284.9,612.0 L286.1,610.2 L287.2,612.2 L288.3,610.8 L288.8,487.7 L290.1,488.1 L291.3,486.3 L292.6,487.7 L293.8,488.0 L295.1,487.7 L296.0,618.2 L297.2,616.5 L298.4,617.5 L299.6,615.9 L300.8,617.8 L302.0,615.2 L303.2,616.7 L304.4,617.5 L305.6,615.7 L305.8,549.2 L309.2,492.6 L310.5,493.6 L311.7,491.8 L313.0,492.7 L314.2,491.5 L315.5,492.6 L317.0,527.1 L318.1,526.8 L319.2,528.7 L320.3,528.8 L321.4,526.6 L322.5,527.9 L323.6,529.0 L324.7,527.8 L325.8,530.0 L326.9,530.5 L328.0,529.5 L328.5,492.6 L329.6,492.8 L330.8,492.2 L331.9,493.6 L333.1,492.6 L334.2,491.7 L335.4,492.6 L336.5,532.0 L338.0,527.1 L339.2,525.8 L340.5,524.8 L341.8,526.2 L343.0,524.6 L345.0,532.0 L346.5,532.0 L348.0,532.0 L348.5,487.7 L349.7,488.3 L350.9,488.6 L352.1,489.1 L353.2,486.7 L354.4,487.4 L355.6,487.7 L357.3,507.4 L360.0,529.5 L361.2,531.6 L362.4,532.3 L363.5,532.2 L364.7,533.9 L365.9,534.5 L366.5,512.3 L367.5,532.0 L369.0,492.6 L370.4,491.7 L371.7,491.6 L373.0,491.3 L374.4,492.6 L376.5,529.5 L377.6,529.5 L378.8,529.4 L379.9,530.5 L381.0,532.2 L382.1,530.0 L383.2,531.6 L384.4,532.8 L385.5,532.0 L386.5,541.9 L388.0,596.0 L389.4,487.7 L393.2,492.6 L394.5,492.9 L395.8,492.6 L399.5,532.0 L400.6,531.8 L401.8,532.2 L402.9,529.6 L404.1,532.1 L405.2,531.0 L406.4,531.1 L407.6,530.8 L408.7,529.5 L409.2,492.6 L410.5,491.4 L411.8,491.3 L413.0,491.6 L414.3,492.6 L415.6,492.6 L419.8,556.6 L420.9,557.9 L422.0,557.9 L423.1,556.4 L424.3,557.0 L425.4,557.3 L426.5,556.1 L427.6,556.6 L428.0,495.1 L429.1,496.5 L430.2,496.4 L431.3,495.7 L432.4,496.3 L433.5,495.1 L434.5,556.6 L435.7,557.5 L436.8,557.1 L438.0,556.6 L440.0,529.5 L441.4,528.4 L442.7,527.7 L444.0,526.9 L445.4,527.1 L446.5,490.1 L447.8,488.8 L449.0,491.4 L450.3,489.5 L451.5,488.7 L452.8,490.1 L455.0,527.1 L457.6,519.7 L459.0,529.5 L460.2,529.5 L461.4,529.3 L462.6,530.9 L463.8,531.0 L465.0,532.0 L467.1,492.6 L468.2,491.6 L469.3,492.5 L470.5,492.3 L471.6,492.2 L472.7,493.5 L473.8,492.6 L475.0,532.0 L476.2,530.8 L477.5,530.9 L478.8,531.3 L480.0,529.5 L481.2,530.1 L482.5,527.5 L483.8,525.7 L485.0,527.6 L486.2,525.5 L487.5,524.6 L488.0,492.6 L489.4,491.8 L490.7,491.5 L492.0,491.8 L493.4,492.6 L494.5,524.6 L495.6,524.5 L496.7,524.5 L497.8,524.7 L498.9,528.1 L500.0,527.1 L501.6,529.3 L503.2,529.5 L506.0,534.5 L508.3,541.9" fill="none" stroke="#eab839" stroke-width="1.2" stroke-linejoin="round" clip-path="url(#c4)"/>
<path d="M58.3,482.8 L94.9,482.8 L96.0,504.8 L97.1,482.8 L98.2,503.9 L99.3,482.8 L100.4,500.7 L101.5,482.8 L102.6,503.2 L103.7,482.8 L305.5,482.8 L306.0,487.7 L306.5,482.8 L348.4,482.8 L349.2,500.0 L350.0,487.7 L351.0,501.5 L352.2,487.7 L353.5,500.0 L355.6,482.8 L366.2,482.8 L367.1,490.1 L368.0,482.8 L390.0,482.8 L390.6,486.7 L391.2,482.8 L508.3,482.8 L508.3,630.5 L58.3,630.5 Z" fill="#6ed0e0" fill-opacity="0.1" clip-path="url(#c4)"/>
<path d="M58.3,482.8 L94.9,482.8 L96.0,504.8 L97.1,482.8 L98.2,503.9 L99.3,482.8 L100.4,500.7 L101.5,482.8 L102.6,503.2 L103.7,482.8 L305.5,482.8 L306.0,487.7 L306.5,482.8 L348.4,482.8 L349.2,500.0 L350.0,487.7 L351.0,501.5 L352.2,487.7 L353.5,500.0 L355.6,482.8 L366.2,482.8 L367.1,490.1 L368.0,482.8 L390.0,482.8 L390.6,486.7 L391.2,482.8 L508.3,482.8" fill="none" stroke="#6ed0e0" stroke-width="1.2" stroke-linejoin="round" clip-path="url(#c4)"/>
<rect x="30" y="687.5" width="12" height="3" rx="1.5" fill="#7eb26d"/>
<rect x="30" y="707.7" width="12" height="3" rx="1.5" fill="#eab839"/>
<rect x="30" y="728.7" width="12" height="3" rx="1.5" fill="#6ed0e0"/>
<rect x="596" y="433" width="442" height="1" fill="#3d3e40"/>
<rect x="596" y="466" width="442" height="1" fill="#3d3e40"/>
<rect x="596" y="499" width="442" height="1" fill="#3d3e40"/>
<rect x="596" y="531" width="442" height="1" fill="#3d3e40"/>
<rect x="596" y="564" width="442" height="1" fill="#3d3e40"/>
<rect x="596" y="597" width="442" height="1" fill="#3d3e40"/>
<rect x="596" y="630" width="442" height="1" fill="#3d3e40"/>
<rect x="650" y="433" width="1" height="198" fill="#3d3e40"/>
<rect x="723" y="433" width="1" height="198" fill="#3d3e40"/>
<rect x="797" y="433" width="1" height="198" fill="#3d3e40"/>
<rect x="871" y="433" width="1" height="198" fill="#3d3e40"/>
<rect x="944" y="433" width="1" height="198" fill="#3d3e40"/>
<rect x="1018" y="433" width="1" height="198" fill="#3d3e40"/>
<clipPath id="c5"><rect x="596" y="420" width="442" height="210.5"/></clipPath>
<path d="M596.2,621.4 L597.9,621.1 L599.5,621.2 L601.2,621.3 L602.8,621.5 L604.5,621.2 L606.1,621.2 L607.8,621.2 L609.4,621.6 L611.1,621.2 L612.7,621.5 L614.4,621.5 L616.0,621.2 L617.7,621.4 L619.3,621.4 L621.0,621.3 L622.6,621.7 L624.3,621.2 L625.9,621.1 L627.6,621.4 L629.8,611.0 L631.4,611.3 L633.1,610.9 L634.7,610.8 L636.4,610.9 L638.0,610.9 L639.7,611.3 L641.3,610.8 L643.0,610.8 L644.6,611.1 L646.3,611.0 L647.9,611.3 L649.6,611.2 L651.2,610.9 L652.9,610.8 L654.5,611.2 L656.2,611.3 L657.8,610.7 L659.5,611.1 L661.1,611.2 L662.8,611.1 L664.4,610.8 L666.1,611.2 L667.7,611.1 L669.4,610.8 L671.0,611.0 L673.2,621.9 L674.8,622.0 L676.4,621.7 L678.1,621.6 L679.7,621.8 L681.3,621.8 L682.9,621.8 L684.5,622.0 L686.2,622.1 L687.8,622.2 L689.4,622.2 L691.0,622.2 L692.7,622.1 L694.3,621.8 L695.9,621.7 L697.5,622.0 L699.1,621.9 L700.8,622.0 L702.4,621.7 L704.0,621.9 L705.6,621.7 L707.2,622.2 L708.8,622.0 L710.4,622.0 L712.0,621.7 L713.6,621.9 L715.2,622.2 L716.8,622.0 L718.4,622.3 L720.0,621.8 L721.6,621.9 L723.2,622.2 L724.8,622.0 L726.4,622.2 L728.0,622.0 L729.6,621.8 L731.2,621.8 L732.8,622.3 L734.4,621.8 L736.0,621.8 L737.6,621.9 L739.2,622.2 L740.8,622.3 L742.4,622.0 L744.0,622.1 L745.6,622.2 L747.2,621.9 L748.8,622.0 L750.4,622.2 L752.0,622.2 L753.6,621.8 L755.2,621.9 L756.8,621.9 L758.4,622.3 L760.0,622.2 L761.6,622.4 L763.2,622.3 L764.8,622.0 L766.4,622.3 L768.0,622.5 L769.6,622.1 L771.2,621.9 L772.8,622.1 L774.4,622.1 L776.0,622.0 L777.6,621.9 L779.2,622.0 L780.8,622.4 L782.4,622.0 L784.0,622.3 L785.6,622.1 L787.2,622.1 L788.8,622.4 L790.4,622.1 L792.0,622.1 L793.6,622.2 L795.2,622.4 L796.8,622.3 L798.4,622.5 L800.0,622.3 L801.6,622.2 L803.2,622.3 L804.8,622.4 L806.4,622.2 L808.0,622.4 L809.6,622.2 L811.2,622.0 L812.8,622.0 L814.4,622.4 L816.0,622.4 L817.7,622.5 L819.3,622.3 L820.9,622.2 L822.5,622.0 L824.1,622.4 L825.7,621.9 L827.3,622.1 L828.9,621.9 L830.5,622.1 L832.1,622.0 L833.7,622.1 L835.3,622.2 L836.9,622.1 L838.5,621.9 L840.1,622.3 L841.7,622.2 L843.3,622.3 L844.9,621.8 L846.5,622.1 L848.1,622.3 L849.8,621.9 L851.4,621.8 L853.0,622.2 L854.6,621.9 L856.2,621.9 L857.8,622.2 L859.4,621.9 L861.0,621.8 L862.6,621.8 L864.2,621.9 L865.8,622.1 L867.4,621.9 L869.0,622.1 L870.6,621.7 L872.2,621.8 L873.8,622.0 L875.4,621.9 L877.0,621.9 L878.6,622.1 L880.2,621.7 L881.9,621.7 L883.5,621.6 L885.1,621.8 L886.7,621.7 L888.3,621.8 L889.9,621.5 L891.5,621.5 L893.1,621.7 L894.7,621.9 L896.3,621.7 L897.9,622.0 L899.5,621.8 L901.1,621.7 L902.7,621.9 L904.3,621.6 L905.9,621.8 L907.5,621.9 L909.1,621.7 L910.7,621.6 L912.3,621.5 L914.0,621.7 L915.6,621.5 L917.2,621.6 L918.8,621.7 L920.4,621.9 L922.0,621.7 L923.6,621.6 L925.2,621.8 L926.8,621.5 L928.4,621.5 L930.0,621.6 L931.6,621.7 L933.2,621.6 L934.8,621.4 L936.4,621.5 L938.0,621.8 L939.7,621.4 L941.3,621.7 L942.9,621.3 L944.5,621.8 L946.1,621.6 L947.7,621.4 L949.3,621.8 L950.9,621.7 L952.5,621.2 L954.1,621.3 L955.8,621.5 L957.4,621.8 L959.0,621.2 L960.6,621.2 L962.2,621.3 L963.8,621.2 L965.4,621.4 L967.0,621.4 L968.6,621.4 L970.2,621.2 L971.8,621.1 L973.5,621.6 L975.1,621.3 L976.7,621.4 L978.3,621.4 L979.9,621.5 L981.5,621.6 L983.1,621.5 L984.7,621.5 L986.3,621.2 L987.9,621.1 L989.5,621.1 L991.2,621.5 L992.8,621.0 L994.4,621.3 L996.0,621.5 L997.6,621.2 L999.2,621.2 L1000.8,621.2 L1002.4,621.5 L1004.0,621.4 L1005.6,621.4 L1007.2,620.9 L1008.9,621.4 L1010.5,621.2 L1012.1,621.1 L1013.7,621.4 L1015.3,621.3 L1016.9,621.4 L1018.5,621.3 L1020.1,621.4 L1021.7,621.1 L1023.3,621.2 L1025.0,621.3 L1026.6,621.1 L1028.2,620.9 L1029.8,621.2 L1031.4,621.3 L1033.0,621.1 L1034.0,609.3 L1035.9,609.8 L1037.8,609.8 L1037.8,630.3 L596.2,630.3 Z" fill="#7eb26d" fill-opacity="0.1" clip-path="url(#c5)"/>
<path d="M596.2,621.4 L597.9,621.1 L599.5,621.2 L601.2,621.3 L602.8,621.5 L604.5,621.2 L606.1,621.2 L607.8,621.2 L609.4,621.6 L611.1,621.2 L612.7,621.5 L614.4,621.5 L616.0,621.2 L617.7,621.4 L619.3,621.4 L621.0,621.3 L622.6,621.7 L624.3,621.2 L625.9,621.1 L627.6,621.4 L629.8,611.0 L631.4,611.3 L633.1,610.9 L634.7,610.8 L636.4,610.9 L638.0,610.9 L639.7,611.3 L641.3,610.8 L643.0,610.8 L644.6,611.1 L646.3,611.0 L647.9,611.3 L649.6,611.2 L651.2,610.9 L652.9,610.8 L654.5,611.2 L656.2,611.3 L657.8,610.7 L659.5,611.1 L661.1,611.2 L662.8,611.1 L664.4,610.8 L666.1,611.2 L667.7,611.1 L669.4,610.8 L671.0,611.0 L673.2,621.9 L674.8,622.0 L676.4,621.7 L678.1,621.6 L679.7,621.8 L681.3,621.8 L682.9,621.8 L684.5,622.0 L686.2,622.1 L687.8,622.2 L689.4,622.2 L691.0,622.2 L692.7,622.1 L694.3,621.8 L695.9,621.7 L697.5,622.0 L699.1,621.9 L700.8,622.0 L702.4,621.7 L704.0,621.9 L705.6,621.7 L707.2,622.2 L708.8,622.0 L710.4,622.0 L712.0,621.7 L713.6,621.9 L715.2,622.2 L716.8,622.0 L718.4,622.3 L720.0,621.8 L721.6,621.9 L723.2,622.2 L724.8,622.0 L726.4,622.2 L728.0,622.0 L729.6,621.8 L731.2,621.8 L732.8,622.3 L734.4,621.8 L736.0,621.8 L737.6,621.9 L739.2,622.2 L740.8,622.3 L742.4,622.0 L744.0,622.1 L745.6,622.2 L747.2,621.9 L748.8,622.0 L750.4,622.2 L752.0,622.2 L753.6,621.8 L755.2,621.9 L756.8,621.9 L758.4,622.3 L760.0,622.2 L761.6,622.4 L763.2,622.3 L764.8,622.0 L766.4,622.3 L768.0,622.5 L769.6,622.1 L771.2,621.9 L772.8,622.1 L774.4,622.1 L776.0,622.0 L777.6,621.9 L779.2,622.0 L780.8,622.4 L782.4,622.0 L784.0,622.3 L785.6,622.1 L787.2,622.1 L788.8,622.4 L790.4,622.1 L792.0,622.1 L793.6,622.2 L795.2,622.4 L796.8,622.3 L798.4,622.5 L800.0,622.3 L801.6,622.2 L803.2,622.3 L804.8,622.4 L806.4,622.2 L808.0,622.4 L809.6,622.2 L811.2,622.0 L812.8,622.0 L814.4,622.4 L816.0,622.4 L817.7,622.5 L819.3,622.3 L820.9,622.2 L822.5,622.0 L824.1,622.4 L825.7,621.9 L827.3,622.1 L828.9,621.9 L830.5,622.1 L832.1,622.0 L833.7,622.1 L835.3,622.2 L836.9,622.1 L838.5,621.9 L840.1,622.3 L841.7,622.2 L843.3,622.3 L844.9,621.8 L846.5,622.1 L848.1,622.3 L849.8,621.9 L851.4,621.8 L853.0,622.2 L854.6,621.9 L856.2,621.9 L857.8,622.2 L859.4,621.9 L861.0,621.8 L862.6,621.8 L864.2,621.9 L865.8,622.1 L867.4,621.9 L869.0,622.1 L870.6,621.7 L872.2,621.8 L873.8,622.0 L875.4,621.9 L877.0,621.9 L878.6,622.1 L880.2,621.7 L881.9,621.7 L883.5,621.6 L885.1,621.8 L886.7,621.7 L888.3,621.8 L889.9,621.5 L891.5,621.5 L893.1,621.7 L894.7,621.9 L896.3,621.7 L897.9,622.0 L899.5,621.8 L901.1,621.7 L902.7,621.9 L904.3,621.6 L905.9,621.8 L907.5,621.9 L909.1,621.7 L910.7,621.6 L912.3,621.5 L914.0,621.7 L915.6,621.5 L917.2,621.6 L918.8,621.7 L920.4,621.9 L922.0,621.7 L923.6,621.6 L925.2,621.8 L926.8,621.5 L928.4,621.5 L930.0,621.6 L931.6,621.7 L933.2,621.6 L934.8,621.4 L936.4,621.5 L938.0,621.8 L939.7,621.4 L941.3,621.7 L942.9,621.3 L944.5,621.8 L946.1,621.6 L947.7,621.4 L949.3,621.8 L950.9,621.7 L952.5,621.2 L954.1,621.3 L955.8,621.5 L957.4,621.8 L959.0,621.2 L960.6,621.2 L962.2,621.3 L963.8,621.2 L965.4,621.4 L967.0,621.4 L968.6,621.4 L970.2,621.2 L971.8,621.1 L973.5,621.6 L975.1,621.3 L976.7,621.4 L978.3,621.4 L979.9,621.5 L981.5,621.6 L983.1,621.5 L984.7,621.5 L986.3,621.2 L987.9,621.1 L989.5,621.1 L991.2,621.5 L992.8,621.0 L994.4,621.3 L996.0,621.5 L997.6,621.2 L999.2,621.2 L1000.8,621.2 L1002.4,621.5 L1004.0,621.4 L1005.6,621.4 L1007.2,620.9 L1008.9,621.4 L1010.5,621.2 L1012.1,621.1 L1013.7,621.4 L1015.3,621.3 L1016.9,621.4 L1018.5,621.3 L1020.1,621.4 L1021.7,621.1 L1023.3,621.2 L1025.0,621.3 L1026.6,621.1 L1028.2,620.9 L1029.8,621.2 L1031.4,621.3 L1033.0,621.1 L1034.0,609.3 L1035.9,609.8 L1037.8,609.8" fill="none" stroke="#7eb26d" stroke-width="1.2" stroke-linejoin="round" clip-path="url(#c5)"/>
<path d="M596.2,613.2 L598.0,612.3 L599.8,612.1 L601.6,612.1 L603.8,610.3 L605.9,608.9 L608.1,607.8 L610.3,611.0 L612.4,613.2 L614.2,613.3 L616.1,612.5 L617.9,612.1 L619.5,612.9 L621.1,613.2 L623.3,610.6 L625.5,608.9 L627.6,608.9 L629.8,608.9 L632.4,611.0 L633.3,543.7 L633.8,600.0 L634.3,560.0 L635.0,620.0 L635.6,509.0 L636.2,570.0 L636.8,520.0 L637.5,479.5 L638.2,600.0 L638.7,479.5 L639.3,560.0 L639.8,479.5 L640.2,600.0 L640.6,552.0 L641.0,621.9 L641.7,619.7 L643.5,619.7 L646.0,623.5 L647.8,623.9 L649.7,623.5 L651.5,624.0 L653.3,624.0 L655.2,623.3 L657.0,623.5 L659.1,619.3 L660.9,618.8 L662.7,619.9 L664.5,619.7 L666.7,623.5 L668.3,622.8 L670.0,622.4 L671.6,623.0 L673.2,622.5 L675.4,617.5 L678.6,623.5 L680.4,623.9 L682.2,623.9 L684.0,624.0 L685.9,623.1 L687.7,623.0 L689.5,623.5 L691.6,619.3 L693.8,619.0 L696.0,619.7 L698.1,623.5 L700.0,624.2 L701.8,623.2 L703.7,623.4 L705.5,623.3 L707.4,624.0 L709.0,619.5 L711.0,617.5 L713.0,619.5 L714.8,624.0 L716.5,623.5 L718.2,623.4 L720.0,623.8 L721.7,623.6 L723.4,623.8 L725.1,624.0 L726.5,619.3 L728.8,620.1 L731.0,619.8 L732.5,624.0 L734.2,623.6 L735.9,624.4 L737.6,624.3 L739.3,624.1 L741.0,624.1 L742.7,624.3 L744.4,624.0 L746.0,619.5 L748.0,617.2 L749.5,619.5 L750.8,624.0 L752.6,624.1 L754.3,623.7 L756.1,623.8 L757.8,623.7 L759.6,623.9 L761.3,624.6 L763.1,624.0 L764.5,619.3 L766.8,619.5 L769.0,619.8 L770.5,624.0 L772.2,623.5 L773.9,624.0 L775.6,624.4 L777.2,623.9 L778.9,624.2 L780.6,623.5 L782.3,624.0 L784.0,619.5 L786.0,617.2 L788.0,619.5 L789.7,624.0 L791.4,623.5 L793.2,624.2 L794.9,623.5 L796.6,623.8 L798.3,623.9 L800.1,623.7 L801.8,624.1 L802.8,619.1 L804.6,618.9 L806.4,619.2 L808.2,620.1 L810.2,624.1 L811.8,624.6 L813.4,624.3 L815.0,624.6 L816.7,624.1 L818.3,624.6 L819.9,624.5 L821.5,624.1 L823.0,616.2 L824.0,619.1 L826.0,619.7 L828.0,620.1 L829.4,624.1 L831.2,624.1 L833.0,624.1 L834.7,623.8 L836.5,624.0 L838.3,624.1 L839.0,580.7 L839.8,624.1 L840.8,604.9 L842.5,606.1 L844.2,606.8 L846.2,607.2 L848.2,608.3 L849.1,611.8 L850.8,612.3 L852.4,611.9 L854.0,612.1 L855.7,612.5 L857.4,612.3 L859.0,612.2 L862.0,606.3 L864.0,606.7 L865.9,607.7 L867.9,608.8 L868.9,612.7 L870.9,611.5 L872.8,610.9 L874.8,610.8 L876.7,611.3 L878.6,610.8 L880.5,610.6 L881.5,465.8 L882.9,530.3 L883.9,459.7 L885.4,535.2 L886.3,523.0 L887.3,605.8 L889.5,610.6 L891.2,611.4 L892.9,611.4 L894.6,611.1 L896.3,612.1 L898.0,611.8 L899.2,569.3 L900.4,611.8 L902.9,608.2 L904.7,609.9 L906.5,610.6 L908.1,611.0 L909.8,610.9 L911.4,611.6 L913.0,611.9 L914.7,612.5 L916.3,613.1 L918.7,620.4 L921.1,620.4 L922.3,570.5 L923.6,608.2 L926.0,607.0 L929.6,613.1 L931.4,612.1 L933.1,612.4 L934.9,611.7 L936.6,612.8 L938.2,612.4 L939.9,613.2 L940.8,607.3 L942.8,608.4 L944.8,608.8 L947.2,610.3 L950.2,616.7 L952.0,616.6 L953.7,616.2 L955.4,616.7 L957.1,617.2 L958.6,613.2 L960.2,613.5 L961.9,612.7 L963.5,612.7 L965.0,616.7 L968.0,616.7 L969.4,611.7 L971.4,611.8 L973.3,610.5 L975.3,610.8 L977.3,605.8 L979.3,607.0 L981.2,606.8 L983.2,607.8 L985.2,612.2 L987.7,611.7 L989.1,612.7 L990.8,612.2 L992.5,613.4 L994.3,613.3 L996.0,613.2 L997.5,608.3 L999.3,608.7 L1001.1,609.0 L1002.9,608.8 L1004.4,613.2 L1006.1,612.9 L1007.9,612.4 L1009.6,612.5 L1011.3,613.1 L1013.1,612.9 L1014.8,612.2 L1017.2,607.3 L1018.9,607.3 L1020.5,607.9 L1022.2,608.3 L1024.1,612.7 L1025.8,612.4 L1027.5,612.8 L1029.1,611.5 L1030.8,612.3 L1032.5,611.7 L1033.5,613.2 L1035.7,614.2 L1037.8,615.7 L1037.8,630.3 L596.2,630.3 Z" fill="#eab839" fill-opacity="0.1" clip-path="url(#c5)"/>
<path d="M596.2,613.2 L598.0,612.3 L599.8,612.1 L601.6,612.1 L603.8,610.3 L605.9,608.9 L608.1,607.8 L610.3,611.0 L612.4,613.2 L614.2,613.3 L616.1,612.5 L617.9,612.1 L619.5,612.9 L621.1,613.2 L623.3,610.6 L625.5,608.9 L627.6,608.9 L629.8,608.9 L632.4,611.0 L633.3,543.7 L633.8,600.0 L634.3,560.0 L635.0,620.0 L635.6,509.0 L636.2,570.0 L636.8,520.0 L637.5,479.5 L638.2,600.0 L638.7,479.5 L639.3,560.0 L639.8,479.5 L640.2,600.0 L640.6,552.0 L641.0,621.9 L641.7,619.7 L643.5,619.7 L646.0,623.5 L647.8,623.9 L649.7,623.5 L651.5,624.0 L653.3,624.0 L655.2,623.3 L657.0,623.5 L659.1,619.3 L660.9,618.8 L662.7,619.9 L664.5,619.7 L666.7,623.5 L668.3,622.8 L670.0,622.4 L671.6,623.0 L673.2,622.5 L675.4,617.5 L678.6,623.5 L680.4,623.9 L682.2,623.9 L684.0,624.0 L685.9,623.1 L687.7,623.0 L689.5,623.5 L691.6,619.3 L693.8,619.0 L696.0,619.7 L698.1,623.5 L700.0,624.2 L701.8,623.2 L703.7,623.4 L705.5,623.3 L707.4,624.0 L709.0,619.5 L711.0,617.5 L713.0,619.5 L714.8,624.0 L716.5,623.5 L718.2,623.4 L720.0,623.8 L721.7,623.6 L723.4,623.8 L725.1,624.0 L726.5,619.3 L728.8,620.1 L731.0,619.8 L732.5,624.0 L734.2,623.6 L735.9,624.4 L737.6,624.3 L739.3,624.1 L741.0,624.1 L742.7,624.3 L744.4,624.0 L746.0,619.5 L748.0,617.2 L749.5,619.5 L750.8,624.0 L752.6,624.1 L754.3,623.7 L756.1,623.8 L757.8,623.7 L759.6,623.9 L761.3,624.6 L763.1,624.0 L764.5,619.3 L766.8,619.5 L769.0,619.8 L770.5,624.0 L772.2,623.5 L773.9,624.0 L775.6,624.4 L777.2,623.9 L778.9,624.2 L780.6,623.5 L782.3,624.0 L784.0,619.5 L786.0,617.2 L788.0,619.5 L789.7,624.0 L791.4,623.5 L793.2,624.2 L794.9,623.5 L796.6,623.8 L798.3,623.9 L800.1,623.7 L801.8,624.1 L802.8,619.1 L804.6,618.9 L806.4,619.2 L808.2,620.1 L810.2,624.1 L811.8,624.6 L813.4,624.3 L815.0,624.6 L816.7,624.1 L818.3,624.6 L819.9,624.5 L821.5,624.1 L823.0,616.2 L824.0,619.1 L826.0,619.7 L828.0,620.1 L829.4,624.1 L831.2,624.1 L833.0,624.1 L834.7,623.8 L836.5,624.0 L838.3,624.1 L839.0,580.7 L839.8,624.1 L840.8,604.9 L842.5,606.1 L844.2,606.8 L846.2,607.2 L848.2,608.3 L849.1,611.8 L850.8,612.3 L852.4,611.9 L854.0,612.1 L855.7,612.5 L857.4,612.3 L859.0,612.2 L862.0,606.3 L864.0,606.7 L865.9,607.7 L867.9,608.8 L868.9,612.7 L870.9,611.5 L872.8,610.9 L874.8,610.8 L876.7,611.3 L878.6,610.8 L880.5,610.6 L881.5,465.8 L882.9,530.3 L883.9,459.7 L885.4,535.2 L886.3,523.0 L887.3,605.8 L889.5,610.6 L891.2,611.4 L892.9,611.4 L894.6,611.1 L896.3,612.1 L898.0,611.8 L899.2,569.3 L900.4,611.8 L902.9,608.2 L904.7,609.9 L906.5,610.6 L908.1,611.0 L909.8,610.9 L911.4,611.6 L913.0,611.9 L914.7,612.5 L916.3,613.1 L918.7,620.4 L921.1,620.4 L922.3,570.5 L923.6,608.2 L926.0,607.0 L929.6,613.1 L931.4,612.1 L933.1,612.4 L934.9,611.7 L936.6,612.8 L938.2,612.4 L939.9,613.2 L940.8,607.3 L942.8,608.4 L944.8,608.8 L947.2,610.3 L950.2,616.7 L952.0,616.6 L953.7,616.2 L955.4,616.7 L957.1,617.2 L958.6,613.2 L960.2,613.5 L961.9,612.7 L963.5,612.7 L965.0,616.7 L968.0,616.7 L969.4,611.7 L971.4,611.8 L973.3,610.5 L975.3,610.8 L977.3,605.8 L979.3,607.0 L981.2,606.8 L983.2,607.8 L985.2,612.2 L987.7,611.7 L989.1,612.7 L990.8,612.2 L992.5,613.4 L994.3,613.3 L996.0,613.2 L997.5,608.3 L999.3,608.7 L1001.1,609.0 L1002.9,608.8 L1004.4,613.2 L1006.1,612.9 L1007.9,612.4 L1009.6,612.5 L1011.3,613.1 L1013.1,612.9 L1014.8,612.2 L1017.2,607.3 L1018.9,607.3 L1020.5,607.9 L1022.2,608.3 L1024.1,612.7 L1025.8,612.4 L1027.5,612.8 L1029.1,611.5 L1030.8,612.3 L1032.5,611.7 L1033.5,613.2 L1035.7,614.2 L1037.8,615.7" fill="none" stroke="#eab839" stroke-width="1.2" stroke-linejoin="round" clip-path="url(#c5)"/>
<path d="M596.0,629.8 L879.8,629.8 L880.6,543.7 L881.4,543.7 L882.0,629.8 L883.6,575.3 L884.6,575.3 L885.2,629.8 L1037.8,629.8 L1037.8,630.3 L596.0,630.3 Z" fill="#6ed0e0" fill-opacity="0.1" clip-path="url(#c5)"/>
<path d="M596.0,629.8 L879.8,629.8 L880.6,543.7 L881.4,543.7 L882.0,629.8 L883.6,575.3 L884.6,575.3 L885.2,629.8 L1037.8,629.8" fill="none" stroke="#6ed0e0" stroke-width="1.2" stroke-linejoin="round" clip-path="url(#c5)"/>
<rect x="558.6" y="687.5" width="12" height="3" rx="1.5" fill="#7eb26d"/>
<rect x="558.6" y="707.7" width="12" height="3" rx="1.5" fill="#eab839"/>
<rect x="558.6" y="728.7" width="12" height="3" rx="1.5" fill="#6ed0e0"/>
<path d="M1377.5,411.2 L1384.5,411.2 L1381,414.8 Z" fill="#8e8e8e"/>
<rect x="1126" y="433" width="440" height="1" fill="#3d3e40"/>
<rect x="1126" y="482" width="440" height="1" fill="#3d3e40"/>
<rect x="1126" y="531" width="440" height="1" fill="#3d3e40"/>
<rect x="1126" y="580" width="440" height="1" fill="#3d3e40"/>
<rect x="1126" y="630" width="440" height="1" fill="#3d3e40"/>
<rect x="1179" y="433" width="1" height="198" fill="#3d3e40"/>
<rect x="1253" y="433" width="1" height="198" fill="#3d3e40"/>
<rect x="1326" y="433" width="1" height="198" fill="#3d3e40"/>
<rect x="1399" y="433" width="1" height="198" fill="#3d3e40"/>
<rect x="1473" y="433" width="1" height="198" fill="#3d3e40"/>
<rect x="1546" y="433" width="1" height="198" fill="#3d3e40"/>
<clipPath id="c6"><rect x="1126" y="420" width="440" height="210"/></clipPath>
<path d="M1126.1,517.0 L1127.1,516.8 L1128.1,516.5 L1129.1,516.3 L1130.1,517.8 L1131.1,517.2 L1132.2,517.4 L1133.2,517.1 L1134.2,516.8 L1135.2,517.5 L1136.2,517.2 L1137.2,517.6 L1138.2,517.0 L1139.6,520.6 L1140.6,520.8 L1141.6,521.0 L1142.6,520.0 L1143.6,519.3 L1144.6,519.1 L1145.6,520.1 L1146.6,518.8 L1147.6,519.6 L1148.6,519.4 L1149.6,518.1 L1150.6,518.8 L1151.6,519.1 L1152.6,517.4 L1153.6,518.8 L1154.7,518.5 L1155.7,516.9 L1156.7,517.7 L1157.7,517.0 L1159.1,553.4 L1160.1,554.2 L1161.1,553.3 L1162.1,554.7 L1163.1,553.9 L1164.1,555.8 L1165.1,555.7 L1166.1,556.6 L1167.1,555.1 L1168.1,555.9 L1169.1,556.8 L1170.1,556.9 L1171.1,557.1 L1172.1,556.3 L1173.1,557.7 L1174.1,557.6 L1175.1,556.5 L1176.1,556.2 L1177.1,557.2 L1178.1,556.7 L1179.1,557.2 L1180.1,556.9 L1181.1,556.7 L1182.1,555.9 L1183.1,556.2 L1184.1,556.8 L1185.1,557.4 L1186.1,556.9 L1187.1,556.8 L1188.1,557.4 L1189.1,557.1 L1190.1,557.8 L1191.1,557.3 L1192.1,556.7 L1193.1,556.4 L1194.2,556.2 L1195.2,556.2 L1196.2,557.9 L1197.2,557.9 L1198.2,557.7 L1199.2,556.5 L1200.2,557.6 L1201.2,557.3 L1202.1,515.2 L1203.1,514.3 L1204.1,515.7 L1205.1,515.1 L1206.2,515.2 L1207.2,514.8 L1208.2,514.3 L1209.2,515.0 L1210.2,515.2 L1211.2,513.6 L1212.2,513.9 L1213.3,514.3 L1214.3,514.1 L1215.3,513.4 L1216.3,513.5 L1217.4,513.6 L1218.5,514.9 L1219.6,513.7 L1220.7,513.8 L1221.8,514.9 L1222.9,514.3 L1224.0,515.8 L1225.1,515.2 L1226.2,515.0 L1227.3,516.3 L1228.4,515.3 L1229.5,516.4 L1230.7,516.3 L1231.8,516.3 L1232.9,515.4 L1234.0,516.1 L1235.0,515.4 L1236.0,515.2 L1237.0,515.5 L1238.0,516.5 L1239.0,515.3 L1240.0,515.7 L1241.0,516.4 L1242.0,515.6 L1243.0,515.9 L1244.0,515.7 L1245.0,516.7 L1246.0,515.6 L1247.1,517.3 L1248.1,516.6 L1249.1,516.8 L1250.1,516.5 L1251.1,516.4 L1252.1,517.4 L1253.1,517.2 L1254.1,517.1 L1255.1,515.5 L1256.1,516.7 L1257.1,517.4 L1258.1,516.8 L1259.1,516.6 L1260.1,516.9 L1261.1,515.9 L1262.1,517.1 L1263.1,517.2 L1264.1,515.8 L1265.1,516.7 L1266.1,516.9 L1267.1,516.4 L1268.1,517.1 L1269.1,517.6 L1270.1,517.6 L1271.2,516.4 L1272.2,516.1 L1273.2,517.5 L1274.2,517.1 L1275.2,517.5 L1276.2,517.6 L1277.2,516.4 L1278.2,517.1 L1279.2,516.5 L1280.2,517.5 L1281.2,517.3 L1282.2,516.5 L1283.2,517.0 L1284.3,516.1 L1285.4,515.4 L1286.4,513.8 L1287.5,512.8 L1288.6,512.6 L1289.7,512.5 L1290.7,511.7 L1291.8,512.6 L1292.8,513.5 L1293.9,513.3 L1295.0,511.7 L1296.0,513.3 L1297.1,513.0 L1298.1,513.0 L1299.2,511.7 L1300.3,513.1 L1301.3,512.0 L1302.4,513.2 L1303.4,512.2 L1304.5,512.6 L1305.5,512.3 L1306.6,511.8 L1307.6,513.1 L1308.7,511.7 L1309.7,512.9 L1310.8,512.1 L1311.8,511.3 L1312.9,512.3 L1313.9,511.9 L1315.0,510.8 L1316.0,512.3 L1317.1,511.2 L1318.1,510.6 L1319.2,512.0 L1320.2,511.8 L1321.3,511.1 L1322.3,511.2 L1323.3,510.7 L1324.4,511.4 L1325.4,511.6 L1326.5,511.9 L1327.5,511.6 L1328.5,511.8 L1329.6,512.2 L1330.6,511.2 L1331.7,511.3 L1332.7,512.0 L1333.8,512.6 L1334.8,512.8 L1335.8,513.0 L1336.9,512.2 L1337.9,512.9 L1339.0,511.7 L1340.0,512.6 L1341.0,512.6 L1342.0,512.3 L1343.1,514.1 L1344.1,514.7 L1345.1,514.3 L1346.1,514.7 L1347.1,514.2 L1348.2,515.3 L1349.2,514.2 L1350.2,515.3 L1357.3,508.2 L1358.3,507.9 L1359.3,507.8 L1360.3,508.7 L1361.4,507.3 L1362.4,507.2 L1363.4,507.0 L1364.4,508.4 L1365.4,507.3 L1366.4,508.4 L1367.4,507.2 L1368.5,508.2 L1369.5,506.8 L1370.5,508.2 L1371.5,507.3 L1372.5,508.6 L1373.5,508.7 L1374.5,508.6 L1375.6,509.3 L1376.6,509.7 L1377.6,510.1 L1378.6,509.1 L1379.6,510.5 L1380.6,510.7 L1381.6,510.1 L1382.7,510.1 L1383.7,511.9 L1384.7,511.3 L1385.7,511.7 L1386.7,511.7 L1387.7,512.3 L1388.7,511.5 L1389.8,510.9 L1390.8,511.8 L1391.8,511.4 L1392.8,510.8 L1393.8,511.6 L1394.8,511.9 L1395.8,510.5 L1396.9,511.6 L1397.9,511.4 L1398.9,510.9 L1399.9,510.8 L1400.9,510.4 L1401.9,511.6 L1402.9,511.0 L1404.0,511.2 L1405.0,512.6 L1406.0,511.6 L1407.0,511.5 L1408.0,513.2 L1409.0,513.7 L1410.0,512.6 L1411.1,513.0 L1412.1,513.5 L1413.1,514.1 L1414.1,512.8 L1415.1,514.3 L1416.1,513.7 L1417.1,515.3 L1418.2,514.5 L1419.2,515.8 L1420.2,515.0 L1421.2,515.3 L1422.2,515.4 L1423.3,514.0 L1424.3,514.1 L1425.3,514.1 L1426.3,514.1 L1427.4,513.5 L1428.4,513.8 L1429.4,513.0 L1430.4,513.7 L1431.5,514.3 L1432.5,513.9 L1433.5,513.3 L1434.5,513.8 L1435.6,513.1 L1436.6,512.7 L1437.6,512.2 L1438.6,511.2 L1439.7,512.7 L1440.7,511.7 L1441.7,512.5 L1442.7,512.3 L1443.7,512.1 L1444.7,512.3 L1445.7,512.6 L1446.7,512.6 L1447.7,512.2 L1448.7,510.7 L1449.7,512.6 L1450.7,511.8 L1451.7,511.6 L1452.7,511.6 L1453.7,511.2 L1454.8,510.8 L1455.8,511.9 L1456.8,511.9 L1457.8,510.9 L1458.8,512.5 L1459.8,512.5 L1460.8,512.4 L1461.8,511.8 L1462.8,511.5 L1463.8,511.6 L1464.8,511.4 L1465.8,512.6 L1466.8,512.5 L1467.8,511.7 L1468.8,512.4 L1469.8,511.6 L1470.9,511.5 L1471.9,511.7 L1472.9,510.8 L1473.9,510.5 L1475.0,512.1 L1476.0,510.5 L1477.0,510.4 L1478.0,510.8 L1479.1,509.9 L1480.1,510.7 L1481.1,509.9 L1482.1,511.1 L1483.1,509.5 L1484.2,510.9 L1485.2,509.7 L1486.2,510.7 L1487.2,510.6 L1488.3,510.8 L1489.3,509.2 L1490.3,510.7 L1491.3,509.0 L1492.4,509.3 L1493.4,508.5 L1494.4,509.4 L1495.4,509.7 L1496.5,509.2 L1497.5,510.4 L1498.6,511.4 L1499.6,511.4 L1500.6,511.5 L1501.7,510.6 L1502.7,512.7 L1503.8,511.8 L1504.8,513.2 L1505.9,511.9 L1506.9,512.5 L1507.9,514.1 L1509.0,514.0 L1510.0,513.2 L1511.1,514.0 L1512.1,514.4 L1513.1,514.4 L1514.2,513.8 L1515.2,513.6 L1516.2,513.3 L1517.3,514.0 L1518.3,513.8 L1519.4,513.6 L1520.4,513.8 L1521.4,513.4 L1522.5,513.4 L1523.5,514.1 L1524.5,512.8 L1525.6,512.6 L1526.6,513.2 L1527.7,512.9 L1528.7,513.2 L1529.7,513.8 L1530.8,513.9 L1531.8,513.6 L1532.8,513.7 L1533.9,512.3 L1534.9,512.4 L1536.0,511.9 L1537.0,512.6 L1540.5,517.6 L1541.6,517.7 L1542.7,518.1 L1543.8,518.5 L1545.0,519.2 L1546.1,520.9 L1547.2,520.6 L1548.3,521.8 L1549.4,521.5 L1550.5,521.6 L1551.5,522.0 L1552.6,521.8 L1553.6,521.7 L1554.7,522.3 L1555.7,521.7 L1556.8,521.5 L1557.8,521.0 L1558.9,520.7 L1559.9,521.4 L1561.0,521.5 L1562.3,573.9 L1565.7,569.4 L1565.7,481.7 L1126.1,481.7 Z" fill="#7eb26d" fill-opacity="0.1" clip-path="url(#c6)"/>
<path d="M1126.1,517.0 L1127.1,516.8 L1128.1,516.5 L1129.1,516.3 L1130.1,517.8 L1131.1,517.2 L1132.2,517.4 L1133.2,517.1 L1134.2,516.8 L1135.2,517.5 L1136.2,517.2 L1137.2,517.6 L1138.2,517.0 L1139.6,520.6 L1140.6,520.8 L1141.6,521.0 L1142.6,520.0 L1143.6,519.3 L1144.6,519.1 L1145.6,520.1 L1146.6,518.8 L1147.6,519.6 L1148.6,519.4 L1149.6,518.1 L1150.6,518.8 L1151.6,519.1 L1152.6,517.4 L1153.6,518.8 L1154.7,518.5 L1155.7,516.9 L1156.7,517.7 L1157.7,517.0 L1159.1,553.4 L1160.1,554.2 L1161.1,553.3 L1162.1,554.7 L1163.1,553.9 L1164.1,555.8 L1165.1,555.7 L1166.1,556.6 L1167.1,555.1 L1168.1,555.9 L1169.1,556.8 L1170.1,556.9 L1171.1,557.1 L1172.1,556.3 L1173.1,557.7 L1174.1,557.6 L1175.1,556.5 L1176.1,556.2 L1177.1,557.2 L1178.1,556.7 L1179.1,557.2 L1180.1,556.9 L1181.1,556.7 L1182.1,555.9 L1183.1,556.2 L1184.1,556.8 L1185.1,557.4 L1186.1,556.9 L1187.1,556.8 L1188.1,557.4 L1189.1,557.1 L1190.1,557.8 L1191.1,557.3 L1192.1,556.7 L1193.1,556.4 L1194.2,556.2 L1195.2,556.2 L1196.2,557.9 L1197.2,557.9 L1198.2,557.7 L1199.2,556.5 L1200.2,557.6 L1201.2,557.3 L1202.1,515.2 L1203.1,514.3 L1204.1,515.7 L1205.1,515.1 L1206.2,515.2 L1207.2,514.8 L1208.2,514.3 L1209.2,515.0 L1210.2,515.2 L1211.2,513.6 L1212.2,513.9 L1213.3,514.3 L1214.3,514.1 L1215.3,513.4 L1216.3,513.5 L1217.4,513.6 L1218.5,514.9 L1219.6,513.7 L1220.7,513.8 L1221.8,514.9 L1222.9,514.3 L1224.0,515.8 L1225.1,515.2 L1226.2,515.0 L1227.3,516.3 L1228.4,515.3 L1229.5,516.4 L1230.7,516.3 L1231.8,516.3 L1232.9,515.4 L1234.0,516.1 L1235.0,515.4 L1236.0,515.2 L1237.0,515.5 L1238.0,516.5 L1239.0,515.3 L1240.0,515.7 L1241.0,516.4 L1242.0,515.6 L1243.0,515.9 L1244.0,515.7 L1245.0,516.7 L1246.0,515.6 L1247.1,517.3 L1248.1,516.6 L1249.1,516.8 L1250.1,516.5 L1251.1,516.4 L1252.1,517.4 L1253.1,517.2 L1254.1,517.1 L1255.1,515.5 L1256.1,516.7 L1257.1,517.4 L1258.1,516.8 L1259.1,516.6 L1260.1,516.9 L1261.1,515.9 L1262.1,517.1 L1263.1,517.2 L1264.1,515.8 L1265.1,516.7 L1266.1,516.9 L1267.1,516.4 L1268.1,517.1 L1269.1,517.6 L1270.1,517.6 L1271.2,516.4 L1272.2,516.1 L1273.2,517.5 L1274.2,517.1 L1275.2,517.5 L1276.2,517.6 L1277.2,516.4 L1278.2,517.1 L1279.2,516.5 L1280.2,517.5 L1281.2,517.3 L1282.2,516.5 L1283.2,517.0 L1284.3,516.1 L1285.4,515.4 L1286.4,513.8 L1287.5,512.8 L1288.6,512.6 L1289.7,512.5 L1290.7,511.7 L1291.8,512.6 L1292.8,513.5 L1293.9,513.3 L1295.0,511.7 L1296.0,513.3 L1297.1,513.0 L1298.1,513.0 L1299.2,511.7 L1300.3,513.1 L1301.3,512.0 L1302.4,513.2 L1303.4,512.2 L1304.5,512.6 L1305.5,512.3 L1306.6,511.8 L1307.6,513.1 L1308.7,511.7 L1309.7,512.9 L1310.8,512.1 L1311.8,511.3 L1312.9,512.3 L1313.9,511.9 L1315.0,510.8 L1316.0,512.3 L1317.1,511.2 L1318.1,510.6 L1319.2,512.0 L1320.2,511.8 L1321.3,511.1 L1322.3,511.2 L1323.3,510.7 L1324.4,511.4 L1325.4,511.6 L1326.5,511.9 L1327.5,511.6 L1328.5,511.8 L1329.6,512.2 L1330.6,511.2 L1331.7,511.3 L1332.7,512.0 L1333.8,512.6 L1334.8,512.8 L1335.8,513.0 L1336.9,512.2 L1337.9,512.9 L1339.0,511.7 L1340.0,512.6 L1341.0,512.6 L1342.0,512.3 L1343.1,514.1 L1344.1,514.7 L1345.1,514.3 L1346.1,514.7 L1347.1,514.2 L1348.2,515.3 L1349.2,514.2 L1350.2,515.3 L1357.3,508.2 L1358.3,507.9 L1359.3,507.8 L1360.3,508.7 L1361.4,507.3 L1362.4,507.2 L1363.4,507.0 L1364.4,508.4 L1365.4,507.3 L1366.4,508.4 L1367.4,507.2 L1368.5,508.2 L1369.5,506.8 L1370.5,508.2 L1371.5,507.3 L1372.5,508.6 L1373.5,508.7 L1374.5,508.6 L1375.6,509.3 L1376.6,509.7 L1377.6,510.1 L1378.6,509.1 L1379.6,510.5 L1380.6,510.7 L1381.6,510.1 L1382.7,510.1 L1383.7,511.9 L1384.7,511.3 L1385.7,511.7 L1386.7,511.7 L1387.7,512.3 L1388.7,511.5 L1389.8,510.9 L1390.8,511.8 L1391.8,511.4 L1392.8,510.8 L1393.8,511.6 L1394.8,511.9 L1395.8,510.5 L1396.9,511.6 L1397.9,511.4 L1398.9,510.9 L1399.9,510.8 L1400.9,510.4 L1401.9,511.6 L1402.9,511.0 L1404.0,511.2 L1405.0,512.6 L1406.0,511.6 L1407.0,511.5 L1408.0,513.2 L1409.0,513.7 L1410.0,512.6 L1411.1,513.0 L1412.1,513.5 L1413.1,514.1 L1414.1,512.8 L1415.1,514.3 L1416.1,513.7 L1417.1,515.3 L1418.2,514.5 L1419.2,515.8 L1420.2,515.0 L1421.2,515.3 L1422.2,515.4 L1423.3,514.0 L1424.3,514.1 L1425.3,514.1 L1426.3,514.1 L1427.4,513.5 L1428.4,513.8 L1429.4,513.0 L1430.4,513.7 L1431.5,514.3 L1432.5,513.9 L1433.5,513.3 L1434.5,513.8 L1435.6,513.1 L1436.6,512.7 L1437.6,512.2 L1438.6,511.2 L1439.7,512.7 L1440.7,511.7 L1441.7,512.5 L1442.7,512.3 L1443.7,512.1 L1444.7,512.3 L1445.7,512.6 L1446.7,512.6 L1447.7,512.2 L1448.7,510.7 L1449.7,512.6 L1450.7,511.8 L1451.7,511.6 L1452.7,511.6 L1453.7,511.2 L1454.8,510.8 L1455.8,511.9 L1456.8,511.9 L1457.8,510.9 L1458.8,512.5 L1459.8,512.5 L1460.8,512.4 L1461.8,511.8 L1462.8,511.5 L1463.8,511.6 L1464.8,511.4 L1465.8,512.6 L1466.8,512.5 L1467.8,511.7 L1468.8,512.4 L1469.8,511.6 L1470.9,511.5 L1471.9,511.7 L1472.9,510.8 L1473.9,510.5 L1475.0,512.1 L1476.0,510.5 L1477.0,510.4 L1478.0,510.8 L1479.1,509.9 L1480.1,510.7 L1481.1,509.9 L1482.1,511.1 L1483.1,509.5 L1484.2,510.9 L1485.2,509.7 L1486.2,510.7 L1487.2,510.6 L1488.3,510.8 L1489.3,509.2 L1490.3,510.7 L1491.3,509.0 L1492.4,509.3 L1493.4,508.5 L1494.4,509.4 L1495.4,509.7 L1496.5,509.2 L1497.5,510.4 L1498.6,511.4 L1499.6,511.4 L1500.6,511.5 L1501.7,510.6 L1502.7,512.7 L1503.8,511.8 L1504.8,513.2 L1505.9,511.9 L1506.9,512.5 L1507.9,514.1 L1509.0,514.0 L1510.0,513.2 L1511.1,514.0 L1512.1,514.4 L1513.1,514.4 L1514.2,513.8 L1515.2,513.6 L1516.2,513.3 L1517.3,514.0 L1518.3,513.8 L1519.4,513.6 L1520.4,513.8 L1521.4,513.4 L1522.5,513.4 L1523.5,514.1 L1524.5,512.8 L1525.6,512.6 L1526.6,513.2 L1527.7,512.9 L1528.7,513.2 L1529.7,513.8 L1530.8,513.9 L1531.8,513.6 L1532.8,513.7 L1533.9,512.3 L1534.9,512.4 L1536.0,511.9 L1537.0,512.6 L1540.5,517.6 L1541.6,517.7 L1542.7,518.1 L1543.8,518.5 L1545.0,519.2 L1546.1,520.9 L1547.2,520.6 L1548.3,521.8 L1549.4,521.5 L1550.5,521.6 L1551.5,522.0 L1552.6,521.8 L1553.6,521.7 L1554.7,522.3 L1555.7,521.7 L1556.8,521.5 L1557.8,521.0 L1558.9,520.7 L1559.9,521.4 L1561.0,521.5 L1562.3,573.9 L1565.7,569.4" fill="none" stroke="#7eb26d" stroke-width="1.2" stroke-linejoin="round" clip-path="url(#c6)"/>
<path d="M1126.1,596.9 L1127.3,597.3 L1128.5,596.2 L1129.7,596.8 L1131.0,596.9 L1132.2,598.0 L1133.4,598.0 L1134.6,597.8 L1136.1,546.3 L1137.5,547.5 L1138.9,546.4 L1140.3,547.5 L1141.7,548.1 L1143.2,596.9 L1144.5,596.1 L1145.8,596.5 L1147.1,597.2 L1148.4,596.4 L1149.8,596.8 L1151.1,597.8 L1152.4,597.7 L1153.7,597.1 L1155.0,597.8 L1155.9,548.1 L1157.2,548.7 L1158.6,549.0 L1160.4,551.6 L1162.1,548.1 L1163.4,597.8 L1165.2,597.8 L1166.2,548.1 L1167.5,599.5 L1168.4,549.8 L1170.1,553.4 L1171.9,502.8 L1173.2,503.9 L1174.4,502.7 L1175.7,504.8 L1176.9,504.6 L1178.6,551.6 L1179.9,552.1 L1181.3,551.5 L1182.6,551.3 L1183.9,553.0 L1185.2,551.9 L1186.6,551.6 L1187.9,552.5 L1189.3,503.7 L1190.6,503.1 L1191.9,504.8 L1193.3,504.6 L1194.6,504.6 L1195.9,552.5 L1197.2,553.1 L1198.6,553.0 L1199.9,552.6 L1201.2,552.5 L1202.4,502.8 L1203.8,523.2 L1204.7,503.7 L1206.5,505.1 L1208.3,504.6 L1209.5,552.5 L1210.8,552.3 L1212.2,552.6 L1213.5,553.2 L1214.9,552.7 L1216.2,553.2 L1217.6,552.7 L1218.9,552.5 L1220.2,502.8 L1221.4,503.4 L1222.7,502.3 L1223.9,502.9 L1225.1,503.7 L1226.9,551.6 L1228.2,551.1 L1229.5,550.5 L1230.7,550.7 L1232.0,550.4 L1233.3,550.6 L1234.5,551.2 L1235.8,550.5 L1237.1,550.7 L1238.0,502.8 L1240.0,503.0 L1241.0,521.0 L1242.0,503.5 L1243.3,503.5 L1244.2,550.7 L1245.5,550.5 L1246.8,550.2 L1248.1,550.4 L1249.3,551.8 L1250.6,551.3 L1251.9,551.3 L1253.2,550.5 L1254.5,551.2 L1255.7,502.5 L1257.0,503.2 L1258.3,502.3 L1259.7,503.0 L1261.0,503.5 L1262.3,551.2 L1263.6,552.2 L1264.9,551.5 L1266.2,551.3 L1267.4,551.6 L1268.7,551.9 L1270.0,551.8 L1271.3,550.7 L1272.6,551.2 L1274.0,502.5 L1275.5,501.8 L1277.0,503.0 L1278.0,521.0 L1278.8,503.5 L1280.2,551.6 L1281.4,551.2 L1282.6,551.1 L1283.9,551.0 L1285.1,552.5 L1286.3,552.4 L1287.5,551.2 L1288.8,551.9 L1290.0,551.4 L1291.2,551.6 L1293.0,502.0 L1294.3,503.0 L1295.7,502.3 L1297.0,502.1 L1298.3,502.8 L1299.6,550.7 L1300.9,550.3 L1302.2,551.0 L1303.5,550.4 L1304.8,551.1 L1306.1,551.8 L1307.4,550.9 L1308.7,550.6 L1310.0,552.2 L1311.3,551.3 L1312.5,502.0 L1313.8,502.5 L1315.0,503.0 L1316.0,521.0 L1317.8,503.7 L1319.1,551.3 L1320.4,550.5 L1321.7,550.4 L1323.0,550.5 L1324.3,551.6 L1325.6,551.9 L1326.9,551.1 L1328.2,550.4 L1329.5,551.1 L1330.8,551.3 L1332.0,502.0 L1333.3,503.2 L1334.7,502.5 L1336.0,503.5 L1337.3,502.8 L1337.8,549.9 L1339.0,550.6 L1340.2,548.9 L1341.4,550.3 L1342.6,550.3 L1343.8,550.0 L1345.1,549.4 L1346.3,550.2 L1347.5,549.1 L1348.7,549.8 L1349.9,549.8 L1351.1,549.9 L1352.9,502.0 L1354.4,503.2 L1355.8,503.3 L1357.3,502.8 L1358.7,551.7 L1360.0,551.1 L1361.4,551.4 L1362.7,550.7 L1364.0,552.0 L1365.3,551.8 L1366.7,550.5 L1368.0,550.8 L1368.8,574.7 L1369.7,550.8 L1371.0,551.2 L1372.2,551.2 L1373.5,550.4 L1374.7,551.7 L1376.0,551.3 L1377.7,599.6 L1379.0,599.1 L1380.3,599.0 L1381.6,597.9 L1382.9,596.2 L1384.1,596.3 L1385.4,595.1 L1386.7,596.3 L1388.0,595.6 L1389.3,594.3 L1391.0,547.2 L1392.3,548.1 L1393.7,547.3 L1395.1,547.0 L1396.4,548.1 L1398.1,596.9 L1399.4,597.8 L1400.7,598.0 L1402.0,596.4 L1403.3,597.3 L1404.5,596.5 L1405.8,598.0 L1407.1,598.1 L1408.4,597.0 L1409.7,597.8 L1411.4,530.4 L1415.0,537.5 L1417.7,596.9 L1419.0,596.9 L1420.3,597.0 L1421.7,596.4 L1423.0,597.6 L1424.3,596.7 L1425.7,596.3 L1427.0,597.0 L1428.3,596.9 L1429.7,548.1 L1431.3,548.6 L1432.9,547.5 L1434.5,548.1 L1436.3,596.0 L1437.5,595.5 L1438.8,596.8 L1440.0,596.0 L1441.2,595.5 L1442.4,595.5 L1443.6,594.6 L1444.9,594.7 L1446.1,595.2 L1447.8,550.8 L1449.6,502.0 L1451.4,548.1 L1452.9,548.2 L1454.4,549.0 L1456.2,596.9 L1457.5,597.0 L1458.8,596.2 L1460.1,596.0 L1461.4,595.6 L1462.6,596.7 L1463.9,595.8 L1465.2,597.0 L1466.5,596.8 L1467.8,596.0 L1469.2,543.7 L1472.2,548.1 L1473.6,547.7 L1474.9,549.0 L1476.6,596.9 L1478.8,588.1 L1480.1,587.6 L1481.5,588.4 L1482.8,587.5 L1484.2,587.4 L1485.5,588.1 L1487.3,539.2 L1488.5,540.5 L1489.8,540.2 L1491.0,540.5 L1492.3,541.0 L1493.5,588.9 L1495.0,590.4 L1496.5,590.7 L1497.9,597.8 L1499.1,598.4 L1500.4,597.2 L1501.6,597.0 L1502.9,597.7 L1504.1,597.8 L1505.4,546.3 L1506.7,546.6 L1507.9,547.1 L1509.2,548.1 L1510.4,548.1 L1512.1,596.9 L1513.4,597.1 L1514.7,597.7 L1516.0,595.8 L1517.3,596.3 L1518.5,596.1 L1519.8,597.0 L1521.1,595.7 L1522.4,595.5 L1523.7,596.0 L1525.4,547.2 L1526.8,547.8 L1528.1,548.4 L1529.5,548.8 L1530.8,549.9 L1532.5,596.9 L1533.8,596.3 L1535.1,597.5 L1536.4,596.5 L1537.7,597.2 L1538.9,596.5 L1540.2,595.4 L1541.5,597.2 L1542.8,596.8 L1544.1,596.0 L1545.9,547.2 L1547.4,548.7 L1548.8,549.3 L1550.3,549.0 L1552.1,596.4 L1553.4,597.1 L1554.6,595.7 L1555.9,596.4 L1557.2,595.8 L1558.5,596.2 L1559.7,595.5 L1561.0,596.4 L1563.6,592.5 L1565.7,590.7 L1565.7,481.7 L1126.1,481.7 Z" fill="#eab839" fill-opacity="0.1" clip-path="url(#c6)"/>
<path d="M1126.1,596.9 L1127.3,597.3 L1128.5,596.2 L1129.7,596.8 L1131.0,596.9 L1132.2,598.0 L1133.4,598.0 L1134.6,597.8 L1136.1,546.3 L1137.5,547.5 L1138.9,546.4 L1140.3,547.5 L1141.7,548.1 L1143.2,596.9 L1144.5,596.1 L1145.8,596.5 L1147.1,597.2 L1148.4,596.4 L1149.8,596.8 L1151.1,597.8 L1152.4,597.7 L1153.7,597.1 L1155.0,597.8 L1155.9,548.1 L1157.2,548.7 L1158.6,549.0 L1160.4,551.6 L1162.1,548.1 L1163.4,597.8 L1165.2,597.8 L1166.2,548.1 L1167.5,599.5 L1168.4,549.8 L1170.1,553.4 L1171.9,502.8 L1173.2,503.9 L1174.4,502.7 L1175.7,504.8 L1176.9,504.6 L1178.6,551.6 L1179.9,552.1 L1181.3,551.5 L1182.6,551.3 L1183.9,553.0 L1185.2,551.9 L1186.6,551.6 L1187.9,552.5 L1189.3,503.7 L1190.6,503.1 L1191.9,504.8 L1193.3,504.6 L1194.6,504.6 L1195.9,552.5 L1197.2,553.1 L1198.6,553.0 L1199.9,552.6 L1201.2,552.5 L1202.4,502.8 L1203.8,523.2 L1204.7,503.7 L1206.5,505.1 L1208.3,504.6 L1209.5,552.5 L1210.8,552.3 L1212.2,552.6 L1213.5,553.2 L1214.9,552.7 L1216.2,553.2 L1217.6,552.7 L1218.9,552.5 L1220.2,502.8 L1221.4,503.4 L1222.7,502.3 L1223.9,502.9 L1225.1,503.7 L1226.9,551.6 L1228.2,551.1 L1229.5,550.5 L1230.7,550.7 L1232.0,550.4 L1233.3,550.6 L1234.5,551.2 L1235.8,550.5 L1237.1,550.7 L1238.0,502.8 L1240.0,503.0 L1241.0,521.0 L1242.0,503.5 L1243.3,503.5 L1244.2,550.7 L1245.5,550.5 L1246.8,550.2 L1248.1,550.4 L1249.3,551.8 L1250.6,551.3 L1251.9,551.3 L1253.2,550.5 L1254.5,551.2 L1255.7,502.5 L1257.0,503.2 L1258.3,502.3 L1259.7,503.0 L1261.0,503.5 L1262.3,551.2 L1263.6,552.2 L1264.9,551.5 L1266.2,551.3 L1267.4,551.6 L1268.7,551.9 L1270.0,551.8 L1271.3,550.7 L1272.6,551.2 L1274.0,502.5 L1275.5,501.8 L1277.0,503.0 L1278.0,521.0 L1278.8,503.5 L1280.2,551.6 L1281.4,551.2 L1282.6,551.1 L1283.9,551.0 L1285.1,552.5 L1286.3,552.4 L1287.5,551.2 L1288.8,551.9 L1290.0,551.4 L1291.2,551.6 L1293.0,502.0 L1294.3,503.0 L1295.7,502.3 L1297.0,502.1 L1298.3,502.8 L1299.6,550.7 L1300.9,550.3 L1302.2,551.0 L1303.5,550.4 L1304.8,551.1 L1306.1,551.8 L1307.4,550.9 L1308.7,550.6 L1310.0,552.2 L1311.3,551.3 L1312.5,502.0 L1313.8,502.5 L1315.0,503.0 L1316.0,521.0 L1317.8,503.7 L1319.1,551.3 L1320.4,550.5 L1321.7,550.4 L1323.0,550.5 L1324.3,551.6 L1325.6,551.9 L1326.9,551.1 L1328.2,550.4 L1329.5,551.1 L1330.8,551.3 L1332.0,502.0 L1333.3,503.2 L1334.7,502.5 L1336.0,503.5 L1337.3,502.8 L1337.8,549.9 L1339.0,550.6 L1340.2,548.9 L1341.4,550.3 L1342.6,550.3 L1343.8,550.0 L1345.1,549.4 L1346.3,550.2 L1347.5,549.1 L1348.7,549.8 L1349.9,549.8 L1351.1,549.9 L1352.9,502.0 L1354.4,503.2 L1355.8,503.3 L1357.3,502.8 L1358.7,551.7 L1360.0,551.1 L1361.4,551.4 L1362.7,550.7 L1364.0,552.0 L1365.3,551.8 L1366.7,550.5 L1368.0,550.8 L1368.8,574.7 L1369.7,550.8 L1371.0,551.2 L1372.2,551.2 L1373.5,550.4 L1374.7,551.7 L1376.0,551.3 L1377.7,599.6 L1379.0,599.1 L1380.3,599.0 L1381.6,597.9 L1382.9,596.2 L1384.1,596.3 L1385.4,595.1 L1386.7,596.3 L1388.0,595.6 L1389.3,594.3 L1391.0,547.2 L1392.3,548.1 L1393.7,547.3 L1395.1,547.0 L1396.4,548.1 L1398.1,596.9 L1399.4,597.8 L1400.7,598.0 L1402.0,596.4 L1403.3,597.3 L1404.5,596.5 L1405.8,598.0 L1407.1,598.1 L1408.4,597.0 L1409.7,597.8 L1411.4,530.4 L1415.0,537.5 L1417.7,596.9 L1419.0,596.9 L1420.3,597.0 L1421.7,596.4 L1423.0,597.6 L1424.3,596.7 L1425.7,596.3 L1427.0,597.0 L1428.3,596.9 L1429.7,548.1 L1431.3,548.6 L1432.9,547.5 L1434.5,548.1 L1436.3,596.0 L1437.5,595.5 L1438.8,596.8 L1440.0,596.0 L1441.2,595.5 L1442.4,595.5 L1443.6,594.6 L1444.9,594.7 L1446.1,595.2 L1447.8,550.8 L1449.6,502.0 L1451.4,548.1 L1452.9,548.2 L1454.4,549.0 L1456.2,596.9 L1457.5,597.0 L1458.8,596.2 L1460.1,596.0 L1461.4,595.6 L1462.6,596.7 L1463.9,595.8 L1465.2,597.0 L1466.5,596.8 L1467.8,596.0 L1469.2,543.7 L1472.2,548.1 L1473.6,547.7 L1474.9,549.0 L1476.6,596.9 L1478.8,588.1 L1480.1,587.6 L1481.5,588.4 L1482.8,587.5 L1484.2,587.4 L1485.5,588.1 L1487.3,539.2 L1488.5,540.5 L1489.8,540.2 L1491.0,540.5 L1492.3,541.0 L1493.5,588.9 L1495.0,590.4 L1496.5,590.7 L1497.9,597.8 L1499.1,598.4 L1500.4,597.2 L1501.6,597.0 L1502.9,597.7 L1504.1,597.8 L1505.4,546.3 L1506.7,546.6 L1507.9,547.1 L1509.2,548.1 L1510.4,548.1 L1512.1,596.9 L1513.4,597.1 L1514.7,597.7 L1516.0,595.8 L1517.3,596.3 L1518.5,596.1 L1519.8,597.0 L1521.1,595.7 L1522.4,595.5 L1523.7,596.0 L1525.4,547.2 L1526.8,547.8 L1528.1,548.4 L1529.5,548.8 L1530.8,549.9 L1532.5,596.9 L1533.8,596.3 L1535.1,597.5 L1536.4,596.5 L1537.7,597.2 L1538.9,596.5 L1540.2,595.4 L1541.5,597.2 L1542.8,596.8 L1544.1,596.0 L1545.9,547.2 L1547.4,548.7 L1548.8,549.3 L1550.3,549.0 L1552.1,596.4 L1553.4,597.1 L1554.6,595.7 L1555.9,596.4 L1557.2,595.8 L1558.5,596.2 L1559.7,595.5 L1561.0,596.4 L1563.6,592.5 L1565.7,590.7" fill="none" stroke="#eab839" stroke-width="1.2" stroke-linejoin="round" clip-path="url(#c6)"/>
<path d="M1126.0,481.7 L1166.5,481.7 L1167.5,487.7 L1168.5,483.0 L1169.5,487.0 L1170.5,481.7 L1410.6,481.7 L1411.5,477.1 L1412.5,486.0 L1413.3,480.0 L1414.1,487.8 L1415.0,481.7 L1565.7,481.7 L1565.7,481.7 L1126.0,481.7 Z" fill="#6ed0e0" fill-opacity="0.1" clip-path="url(#c6)"/>
<path d="M1126.0,481.7 L1166.5,481.7 L1167.5,487.7 L1168.5,483.0 L1169.5,487.0 L1170.5,481.7 L1410.6,481.7 L1411.5,477.1 L1412.5,486.0 L1413.3,480.0 L1414.1,487.8 L1415.0,481.7 L1565.7,481.7" fill="none" stroke="#6ed0e0" stroke-width="1.2" stroke-linejoin="round" clip-path="url(#c6)"/>
<rect x="1087" y="687.7" width="12" height="3" rx="1.5" fill="#7eb26d"/>
<rect x="1087" y="707.8" width="12" height="3" rx="1.5" fill="#eab839"/>
<rect x="1087" y="728.9" width="12" height="3" rx="1.5" fill="#6ed0e0"/>
<circle cx="1309.4" cy="482.4" r="4.4" fill="none" stroke="#6ed0e0" stroke-opacity="0.6" stroke-width="2.6"/>
<circle cx="1309.4" cy="513.5" r="4.4" fill="none" stroke="#7eb26d" stroke-opacity="0.6" stroke-width="2.6"/>
<circle cx="1309.4" cy="551.3" r="4.4" fill="none" stroke="#eab839" stroke-opacity="0.6" stroke-width="2.6"/>
<rect x="1310" y="433" width="1" height="197" fill="#a31515"/>
</svg>
<div class="t" style="left:-69px;width:300px;text-align:center;top:-1px;font-size:11px;line-height:14px;color:#d8d9da;">7/1</div>
<div class="t" style="left:40px;width:300px;text-align:center;top:-1px;font-size:11px;line-height:14px;color:#d8d9da;">7/4</div>
<div class="t" style="left:149px;width:300px;text-align:center;top:-1px;font-size:11px;line-height:14px;color:#d8d9da;">7/7</div>
<div class="t" style="left:258px;width:300px;text-align:center;top:-1px;font-size:11px;line-height:14px;color:#d8d9da;">7/10</div>
<div class="t" style="left:367px;width:300px;text-align:center;top:-1px;font-size:11px;line-height:14px;color:#d8d9da;">7/13</div>
<div class="t" style="left:476px;width:300px;text-align:center;top:-1px;font-size:11px;line-height:14px;color:#d8d9da;">7/16</div>
<div class="t" style="left:585px;width:300px;text-align:center;top:-1px;font-size:11px;line-height:14px;color:#d8d9da;">7/19</div>
<div class="t" style="left:694px;width:300px;text-align:center;top:-1px;font-size:11px;line-height:14px;color:#d8d9da;">7/22</div>
<div class="t" style="left:803px;width:300px;text-align:center;top:-1px;font-size:11px;line-height:14px;color:#d8d9da;">7/25</div>
<div class="t" style="left:912px;width:300px;text-align:center;top:-1px;font-size:11px;line-height:14px;color:#d8d9da;">7/28</div>
<div class="t" style="left:1021px;width:300px;text-align:center;top:-1px;font-size:11px;line-height:14px;color:#d8d9da;">7/31</div>
<div class="t" style="left:1130px;width:300px;text-align:center;top:-1px;font-size:11px;line-height:14px;color:#d8d9da;">8/3</div>
<div class="t" style="left:1239px;width:300px;text-align:center;top:-1px;font-size:11px;line-height:14px;color:#d8d9da;">8/6</div>
<div class="t" style="left:1348px;width:300px;text-align:center;top:-1px;font-size:11px;line-height:14px;color:#d8d9da;">8/9</div>
<div class="t" style="left:123px;width:300px;text-align:center;top:45.7px;font-size:12px;line-height:14px;font-weight:bold;color:#d8d9da;">Frequenz</div>
<div class="t" style="right:1529px;top:65.6px;font-size:11px;line-height:14px;color:#d8d9da;letter-spacing:-0.2px;">50.10 Hz</div>
<div class="t" style="right:1529px;top:124.6px;font-size:11px;line-height:14px;color:#d8d9da;letter-spacing:-0.2px;">50.05 Hz</div>
<div class="t" style="right:1529px;top:184.6px;font-size:11px;line-height:14px;color:#d8d9da;letter-spacing:-0.2px;">50.00 Hz</div>
<div class="t" style="right:1529px;top:243.6px;font-size:11px;line-height:14px;color:#d8d9da;letter-spacing:-0.2px;">49.95 Hz</div>
<div class="t" style="right:1529px;top:303.6px;font-size:11px;line-height:14px;color:#d8d9da;letter-spacing:-0.2px;">49.90 Hz</div>
<div class="t" style="left:-23.5px;width:300px;text-align:center;top:318px;font-size:11px;line-height:14px;color:#d8d9da;">00:00</div>
<div class="t" style="left:49.5px;width:300px;text-align:center;top:318px;font-size:11px;line-height:14px;color:#d8d9da;">04:00</div>
<div class="t" style="left:121.5px;width:300px;text-align:center;top:318px;font-size:11px;line-height:14px;color:#d8d9da;">08:00</div>
<div class="t" style="left:194.5px;width:300px;text-align:center;top:318px;font-size:11px;line-height:14px;color:#d8d9da;">12:00</div>
<div class="t" style="left:267.5px;width:300px;text-align:center;top:318px;font-size:11px;line-height:14px;color:#d8d9da;">16:00</div>
<div class="t" style="left:339.5px;width:300px;text-align:center;top:318px;font-size:11px;line-height:14px;color:#d8d9da;">20:00</div>
<div class="t" style="right:1242px;top:341px;font-size:11px;line-height:14px;font-weight:bold;color:#33b5e5;">min</div>
<div class="t" style="right:1167px;top:341px;font-size:11px;line-height:14px;font-weight:bold;color:#33b5e5;">max</div>
<div class="t" style="right:1091.5px;top:341px;font-size:11px;line-height:14px;font-weight:bold;color:#33b5e5;">current</div>
<div class="t" style="left:49px;top:360.7px;font-size:11px;line-height:14px;color:#d8d9da;">Freqency</div>
<div class="t" style="right:1242px;top:360.7px;font-size:11px;line-height:14px;color:#d8d9da;">49.930 Hz</div>
<div class="t" style="right:1167px;top:360.7px;font-size:11px;line-height:14px;color:#d8d9da;">50.065 Hz</div>
<div class="t" style="right:1092px;top:360.7px;font-size:11px;line-height:14px;color:#d8d9da;">50.004 Hz</div>
<div class="t" style="left:652px;width:300px;text-align:center;top:45.7px;font-size:12px;line-height:14px;font-weight:bold;color:#d8d9da;">Wirkleistung</div>
<div class="t" style="left:977.5px;top:42.7px;font-size:11.3px;line-height:14px;font-weight:bold;color:#33b5e5;">Last 1 month</div>
<div class="t" style="right:994px;top:65.6px;font-size:11px;line-height:14px;color:#d8d9da;letter-spacing:-0.2px;">1.50 MWh</div>
<div class="t" style="right:994px;top:99.6px;font-size:11px;line-height:14px;color:#d8d9da;letter-spacing:-0.2px;">1.45 MWh</div>
<div class="t" style="right:994px;top:133.6px;font-size:11px;line-height:14px;color:#d8d9da;letter-spacing:-0.2px;">1.40 MWh</div>
<div class="t" style="right:994px;top:167.6px;font-size:11px;line-height:14px;color:#d8d9da;letter-spacing:-0.2px;">1.35 MWh</div>
<div class="t" style="right:994px;top:201.6px;font-size:11px;line-height:14px;color:#d8d9da;letter-spacing:-0.2px;">1.30 MWh</div>
<div class="t" style="right:994px;top:235.6px;font-size:11px;line-height:14px;color:#d8d9da;letter-spacing:-0.2px;">1.25 MWh</div>
<div class="t" style="right:994px;top:269.6px;font-size:11px;line-height:14px;color:#d8d9da;letter-spacing:-0.2px;">1.20 MWh</div>
<div class="t" style="right:994px;top:303.6px;font-size:11px;line-height:14px;color:#d8d9da;letter-spacing:-0.2px;">1.15 MWh</div>
<div class="t" style="left:458.5px;width:300px;text-align:center;top:318px;font-size:11px;line-height:14px;color:#d8d9da;">7/1</div>
<div class="t" style="left:531.5px;width:300px;text-align:center;top:318px;font-size:11px;line-height:14px;color:#d8d9da;">7/8</div>
<div class="t" style="left:616.5px;width:300px;text-align:center;top:318px;font-size:11px;line-height:14px;color:#d8d9da;">7/16</div>
<div class="t" style="left:701.5px;width:300px;text-align:center;top:318px;font-size:11px;line-height:14px;color:#d8d9da;">7/24</div>
<div class="t" style="left:785.5px;width:300px;text-align:center;top:318px;font-size:11px;line-height:14px;color:#d8d9da;">8/1</div>
<div class="t" style="left:859.5px;width:300px;text-align:center;top:318px;font-size:11px;line-height:14px;color:#d8d9da;">8/8</div>
<div class="t" style="right:725px;top:341px;font-size:11px;line-height:14px;font-weight:bold;color:#33b5e5;">min</div>
<div class="t" style="right:643.5px;top:341px;font-size:11px;line-height:14px;font-weight:bold;color:#33b5e5;">max</div>
<div class="t" style="right:562.5px;top:341px;font-size:11px;line-height:14px;font-weight:bold;color:#33b5e5;">current</div>
<div class="t" style="left:577.5px;top:360.7px;font-size:11px;line-height:14px;color:#d8d9da;">Import</div>
<div class="t" style="right:725px;top:360.7px;font-size:11px;line-height:14px;color:#d8d9da;">1.166 MWh</div>
<div class="t" style="right:643.5px;top:360.7px;font-size:11px;line-height:14px;color:#d8d9da;">1.485 MWh</div>
<div class="t" style="right:562.5px;top:360.7px;font-size:11px;line-height:14px;color:#d8d9da;">1.485 MWh</div>
<div class="t" style="left:1180px;width:300px;text-align:center;top:45.7px;font-size:12px;line-height:14px;font-weight:bold;color:#d8d9da;">Leistungsfaktor</div>
<div class="t" style="right:494px;top:65.6px;font-size:11px;line-height:14px;color:#d8d9da;">1.10</div>
<div class="t" style="right:494px;top:114.6px;font-size:11px;line-height:14px;color:#d8d9da;">1.00</div>
<div class="t" style="right:494px;top:163.6px;font-size:11px;line-height:14px;color:#d8d9da;">0.90</div>
<div class="t" style="right:494px;top:213.6px;font-size:11px;line-height:14px;color:#d8d9da;">0.80</div>
<div class="t" style="right:494px;top:262.6px;font-size:11px;line-height:14px;color:#d8d9da;">0.70</div>
<div class="t" style="left:1015.5px;width:300px;text-align:center;top:276px;font-size:11px;line-height:14px;color:#d8d9da;">00:00</div>
<div class="t" style="left:1091.5px;width:300px;text-align:center;top:276px;font-size:11px;line-height:14px;color:#d8d9da;">04:00</div>
<div class="t" style="left:1167.5px;width:300px;text-align:center;top:276px;font-size:11px;line-height:14px;color:#d8d9da;">08:00</div>
<div class="t" style="left:1243.5px;width:300px;text-align:center;top:276px;font-size:11px;line-height:14px;color:#d8d9da;">12:00</div>
<div class="t" style="left:1319.5px;width:300px;text-align:center;top:276px;font-size:11px;line-height:14px;color:#d8d9da;">16:00</div>
<div class="t" style="left:1395.5px;width:300px;text-align:center;top:276px;font-size:11px;line-height:14px;color:#d8d9da;">20:00</div>
<div class="t" style="right:140px;top:300px;font-size:11px;line-height:14px;font-weight:bold;color:#33b5e5;">min</div>
<div class="t" style="right:87.5px;top:300px;font-size:11px;line-height:14px;font-weight:bold;color:#33b5e5;">max</div>
<div class="t" style="right:34.6px;top:300px;font-size:11px;line-height:14px;font-weight:bold;color:#33b5e5;">current</div>
<div class="t" style="left:1105.5px;top:320.3px;font-size:11px;line-height:14px;color:#d8d9da;">L1</div>
<div class="t" style="right:140px;top:320.3px;font-size:11px;line-height:14px;color:#d8d9da;">0.925</div>
<div class="t" style="right:87.5px;top:320.3px;font-size:11px;line-height:14px;color:#d8d9da;">0.981</div>
<div class="t" style="right:34.6px;top:320.3px;font-size:11px;line-height:14px;color:#d8d9da;">0.959</div>
<div class="t" style="left:1105.5px;top:340.3px;font-size:11px;line-height:14px;color:#d8d9da;">L2</div>
<div class="t" style="right:140px;top:340.3px;font-size:11px;line-height:14px;color:#d8d9da;">0.723</div>
<div class="t" style="right:87.5px;top:340.3px;font-size:11px;line-height:14px;color:#d8d9da;">1.000</div>
<div class="t" style="right:34.6px;top:340.3px;font-size:11px;line-height:14px;color:#d8d9da;">0.880</div>
<div class="t" style="left:1105.5px;top:361.2px;font-size:11px;line-height:14px;color:#d8d9da;">L3</div>
<div class="t" style="right:140px;top:361.2px;font-size:11px;line-height:14px;color:#d8d9da;">0.953</div>
<div class="t" style="right:87.5px;top:361.2px;font-size:11px;line-height:14px;color:#d8d9da;">1.000</div>
<div class="t" style="right:34.6px;top:361.2px;font-size:11px;line-height:14px;color:#d8d9da;">1.000</div>
<div class="t" style="left:123px;width:300px;text-align:center;top:405.2px;font-size:12px;line-height:14px;font-weight:bold;color:#d8d9da;">Wirkleistungfaktor (&#966;)</div>
<div class="t" style="right:1544.5px;top:425.6px;font-size:11px;line-height:14px;color:#d8d9da;">1.10 °</div>
<div class="t" style="right:1544.5px;top:474.6px;font-size:11px;line-height:14px;color:#d8d9da;">1.00 °</div>
<div class="t" style="right:1544.5px;top:523.6px;font-size:11px;line-height:14px;color:#d8d9da;">0.90 °</div>
<div class="t" style="right:1544.5px;top:572.6px;font-size:11px;line-height:14px;color:#d8d9da;">0.80 °</div>
<div class="t" style="right:1544.5px;top:622.6px;font-size:11px;line-height:14px;color:#d8d9da;">0.70 °</div>
<div class="t" style="left:-36.5px;width:300px;text-align:center;top:636px;font-size:11px;line-height:14px;color:#d8d9da;">00:00</div>
<div class="t" style="left:38.5px;width:300px;text-align:center;top:636px;font-size:11px;line-height:14px;color:#d8d9da;">04:00</div>
<div class="t" style="left:113.5px;width:300px;text-align:center;top:636px;font-size:11px;line-height:14px;color:#d8d9da;">08:00</div>
<div class="t" style="left:188.5px;width:300px;text-align:center;top:636px;font-size:11px;line-height:14px;color:#d8d9da;">12:00</div>
<div class="t" style="left:263.5px;width:300px;text-align:center;top:636px;font-size:11px;line-height:14px;color:#d8d9da;">16:00</div>
<div class="t" style="left:339.5px;width:300px;text-align:center;top:636px;font-size:11px;line-height:14px;color:#d8d9da;">20:00</div>
<div class="t" style="right:1211px;top:660.3px;font-size:11px;line-height:14px;font-weight:bold;color:#33b5e5;">min</div>
<div class="t" style="right:1151.5px;top:660.3px;font-size:11px;line-height:14px;font-weight:bold;color:#33b5e5;">max</div>
<div class="t" style="right:1091.5px;top:660.3px;font-size:11px;line-height:14px;font-weight:bold;color:#33b5e5;">current</div>
<div class="t" style="left:49px;top:680px;font-size:11px;line-height:14px;color:#d8d9da;">L1</div>
<div class="t" style="right:1211px;top:680px;font-size:11px;line-height:14px;color:#d8d9da;">0.925 °</div>
<div class="t" style="right:1151.5px;top:680px;font-size:11px;line-height:14px;color:#d8d9da;">0.981 °</div>
<div class="t" style="right:1091.5px;top:680px;font-size:11px;line-height:14px;color:#d8d9da;">0.959 °</div>
<div class="t" style="left:49px;top:700.2px;font-size:11px;line-height:14px;color:#d8d9da;">L2</div>
<div class="t" style="right:1211px;top:700.2px;font-size:11px;line-height:14px;color:#d8d9da;">0.723 °</div>
<div class="t" style="right:1151.5px;top:700.2px;font-size:11px;line-height:14px;color:#d8d9da;">1.000 °</div>
<div class="t" style="right:1091.5px;top:700.2px;font-size:11px;line-height:14px;color:#d8d9da;">0.880 °</div>
<div class="t" style="left:49px;top:721.2px;font-size:11px;line-height:14px;color:#d8d9da;">L3</div>
<div class="t" style="right:1211px;top:721.2px;font-size:11px;line-height:14px;color:#d8d9da;">0.953 °</div>
<div class="t" style="right:1151.5px;top:721.2px;font-size:11px;line-height:14px;color:#d8d9da;">1.000 °</div>
<div class="t" style="right:1091.5px;top:721.2px;font-size:11px;line-height:14px;color:#d8d9da;">1.000 °</div>
<div class="t" style="left:652px;width:300px;text-align:center;top:405.2px;font-size:12px;line-height:14px;font-weight:bold;color:#d8d9da;">Scheinleistung</div>
<div class="t" style="right:1006px;top:425.6px;font-size:11px;line-height:14px;color:#d8d9da;">3.0 kVA</div>
<div class="t" style="right:1006px;top:458.6px;font-size:11px;line-height:14px;color:#d8d9da;">2.5 kVA</div>
<div class="t" style="right:1006px;top:491.6px;font-size:11px;line-height:14px;color:#d8d9da;">2.0 kVA</div>
<div class="t" style="right:1006px;top:523.6px;font-size:11px;line-height:14px;color:#d8d9da;">1.5 kVA</div>
<div class="t" style="right:1006px;top:556.6px;font-size:11px;line-height:14px;color:#d8d9da;">1.0 kVA</div>
<div class="t" style="right:1006px;top:589.6px;font-size:11px;line-height:14px;color:#d8d9da;">500 VA</div>
<div class="t" style="right:1006px;top:622.6px;font-size:11px;line-height:14px;color:#d8d9da;">0 VA</div>
<div class="t" style="left:500.5px;width:300px;text-align:center;top:636px;font-size:11px;line-height:14px;color:#d8d9da;">00:00</div>
<div class="t" style="left:573.5px;width:300px;text-align:center;top:636px;font-size:11px;line-height:14px;color:#d8d9da;">04:00</div>
<div class="t" style="left:647.5px;width:300px;text-align:center;top:636px;font-size:11px;line-height:14px;color:#d8d9da;">08:00</div>
<div class="t" style="left:721.5px;width:300px;text-align:center;top:636px;font-size:11px;line-height:14px;color:#d8d9da;">12:00</div>
<div class="t" style="left:794.5px;width:300px;text-align:center;top:636px;font-size:11px;line-height:14px;color:#d8d9da;">16:00</div>
<div class="t" style="left:868.5px;width:300px;text-align:center;top:636px;font-size:11px;line-height:14px;color:#d8d9da;">20:00</div>
<div class="t" style="right:698px;top:660.3px;font-size:11px;line-height:14px;font-weight:bold;color:#33b5e5;">min</div>
<div class="t" style="right:623px;top:660.3px;font-size:11px;line-height:14px;font-weight:bold;color:#33b5e5;">max</div>
<div class="t" style="right:562.5px;top:660.3px;font-size:11px;line-height:14px;font-weight:bold;color:#33b5e5;">current</div>
<div class="t" style="left:578px;top:680px;font-size:11px;line-height:14px;color:#d8d9da;">L1</div>
<div class="t" style="right:698px;top:680px;font-size:11px;line-height:14px;color:#d8d9da;">120 VA</div>
<div class="t" style="right:623px;top:680px;font-size:11px;line-height:14px;color:#d8d9da;">322 VA</div>
<div class="t" style="right:562.5px;top:680px;font-size:11px;line-height:14px;color:#d8d9da;">313 VA</div>
<div class="t" style="left:578px;top:700.2px;font-size:11px;line-height:14px;color:#d8d9da;">L2</div>
<div class="t" style="right:698px;top:700.2px;font-size:11px;line-height:14px;color:#d8d9da;">101 VA</div>
<div class="t" style="right:623px;top:700.2px;font-size:11px;line-height:14px;color:#d8d9da;">2.591 kVA</div>
<div class="t" style="right:562.5px;top:700.2px;font-size:11px;line-height:14px;color:#d8d9da;">233 VA</div>
<div class="t" style="left:578px;top:721.2px;font-size:11px;line-height:14px;color:#d8d9da;">L3</div>
<div class="t" style="right:698px;top:721.2px;font-size:11px;line-height:14px;color:#d8d9da;">7 VA</div>
<div class="t" style="right:623px;top:721.2px;font-size:11px;line-height:14px;color:#d8d9da;">1.323 kVA</div>
<div class="t" style="right:562.5px;top:721.2px;font-size:11px;line-height:14px;color:#d8d9da;">8 VA</div>
<div class="t" style="left:1180px;width:300px;text-align:center;top:405.2px;font-size:12px;line-height:14px;font-weight:bold;color:#d8d9da;">Blindleistung</div>
<div class="t" style="right:476.5px;top:425.6px;font-size:11px;line-height:14px;color:#d8d9da;">50 var</div>
<div class="t" style="right:476.5px;top:474.6px;font-size:11px;line-height:14px;color:#d8d9da;">0 var</div>
<div class="t" style="right:476.5px;top:523.6px;font-size:11px;line-height:14px;color:#d8d9da;">-50 var</div>
<div class="t" style="right:476.5px;top:572.6px;font-size:11px;line-height:14px;color:#d8d9da;">-100 var</div>
<div class="t" style="right:476.5px;top:622.6px;font-size:11px;line-height:14px;color:#d8d9da;">-150 var</div>
<div class="t" style="left:1029.5px;width:300px;text-align:center;top:636px;font-size:11px;line-height:14px;color:#d8d9da;">00:00</div>
<div class="t" style="left:1103.5px;width:300px;text-align:center;top:636px;font-size:11px;line-height:14px;color:#d8d9da;">04:00</div>
<div class="t" style="left:1176.5px;width:300px;text-align:center;top:636px;font-size:11px;line-height:14px;color:#d8d9da;">08:00</div>
<div class="t" style="left:1249.5px;width:300px;text-align:center;top:636px;font-size:11px;line-height:14px;color:#d8d9da;">12:00</div>
<div class="t" style="left:1323.5px;width:300px;text-align:center;top:636px;font-size:11px;line-height:14px;color:#d8d9da;">16:00</div>
<div class="t" style="left:1396.5px;width:300px;text-align:center;top:636px;font-size:11px;line-height:14px;color:#d8d9da;">20:00</div>
<div class="t" style="right:158px;top:660.3px;font-size:11px;line-height:14px;font-weight:bold;color:#33b5e5;">min</div>
<div class="t" style="right:99.3px;top:660.3px;font-size:11px;line-height:14px;font-weight:bold;color:#33b5e5;">max</div>
<div class="t" style="right:34.6px;top:660.3px;font-size:11px;line-height:14px;font-weight:bold;color:#33b5e5;">current</div>
<div class="t" style="left:1105.5px;top:680.2px;font-size:11px;line-height:14px;color:#d8d9da;">L1</div>
<div class="t" style="right:158px;top:680.2px;font-size:11px;line-height:14px;color:#d8d9da;">-73 var</div>
<div class="t" style="right:99.3px;top:680.2px;font-size:11px;line-height:14px;color:#d8d9da;">-19 var</div>
<div class="t" style="right:34.6px;top:680.2px;font-size:11px;line-height:14px;color:#d8d9da;">-88 var</div>
<div class="t" style="left:1105.5px;top:700.3px;font-size:11px;line-height:14px;color:#d8d9da;">L2</div>
<div class="t" style="right:158px;top:700.3px;font-size:11px;line-height:14px;color:#d8d9da;">-120 var</div>
<div class="t" style="right:99.3px;top:700.3px;font-size:11px;line-height:14px;color:#d8d9da;">-19 var</div>
<div class="t" style="right:34.6px;top:700.3px;font-size:11px;line-height:14px;color:#d8d9da;">-111 var</div>
<div class="t" style="left:1105.5px;top:721.4px;font-size:11px;line-height:14px;color:#d8d9da;">L3</div>
<div class="t" style="right:158px;top:721.4px;font-size:11px;line-height:14px;color:#d8d9da;">-7 var</div>
<div class="t" style="right:99.3px;top:721.4px;font-size:11px;line-height:14px;color:#d8d9da;">6 var</div>
<div class="t" style="right:34.6px;top:721.4px;font-size:11px;line-height:14px;color:#d8d9da;">0 var</div>
<div style="position:absolute;left:1335.5px;top:612.8px;width:145.3px;height:92.7px;background:#111213;border-radius:4px;"></div>
<div class="t" style="left:1258.2px;width:300px;text-align:center;top:621.5px;font-size:12.8px;line-height:14px;font-weight:bold;color:#d8d9da;">2019-08-10 07:04:00</div>
<div style="position:absolute;left:1347px;top:649.9px;width:9px;height:2px;background:#7eb26d"></div>
<div class="t" style="left:1360px;top:643.4px;font-size:12px;line-height:14px;color:#d8d9da;">L1:</div>
<div class="t" style="right:164.4px;top:643.4px;font-size:12px;line-height:14px;font-weight:bold;color:#d8d9da;">-32 var</div>
<div style="position:absolute;left:1347px;top:668px;width:9px;height:2px;background:#eab839"></div>
<div class="t" style="left:1360px;top:661.5px;font-size:12px;line-height:14px;color:#d8d9da;">L2:</div>
<div class="t" style="right:164.4px;top:661.5px;font-size:12px;line-height:14px;font-weight:bold;color:#d8d9da;">-70 var</div>
<div style="position:absolute;left:1347px;top:687px;width:9px;height:2px;background:#6ed0e0"></div>
<div class="t" style="left:1360px;top:680.5px;font-size:12px;line-height:14px;color:#d8d9da;">L3:</div>
<div class="t" style="right:164.4px;top:680.5px;font-size:12px;line-height:14px;font-weight:bold;color:#d8d9da;">0 var</div>
</body></html>
